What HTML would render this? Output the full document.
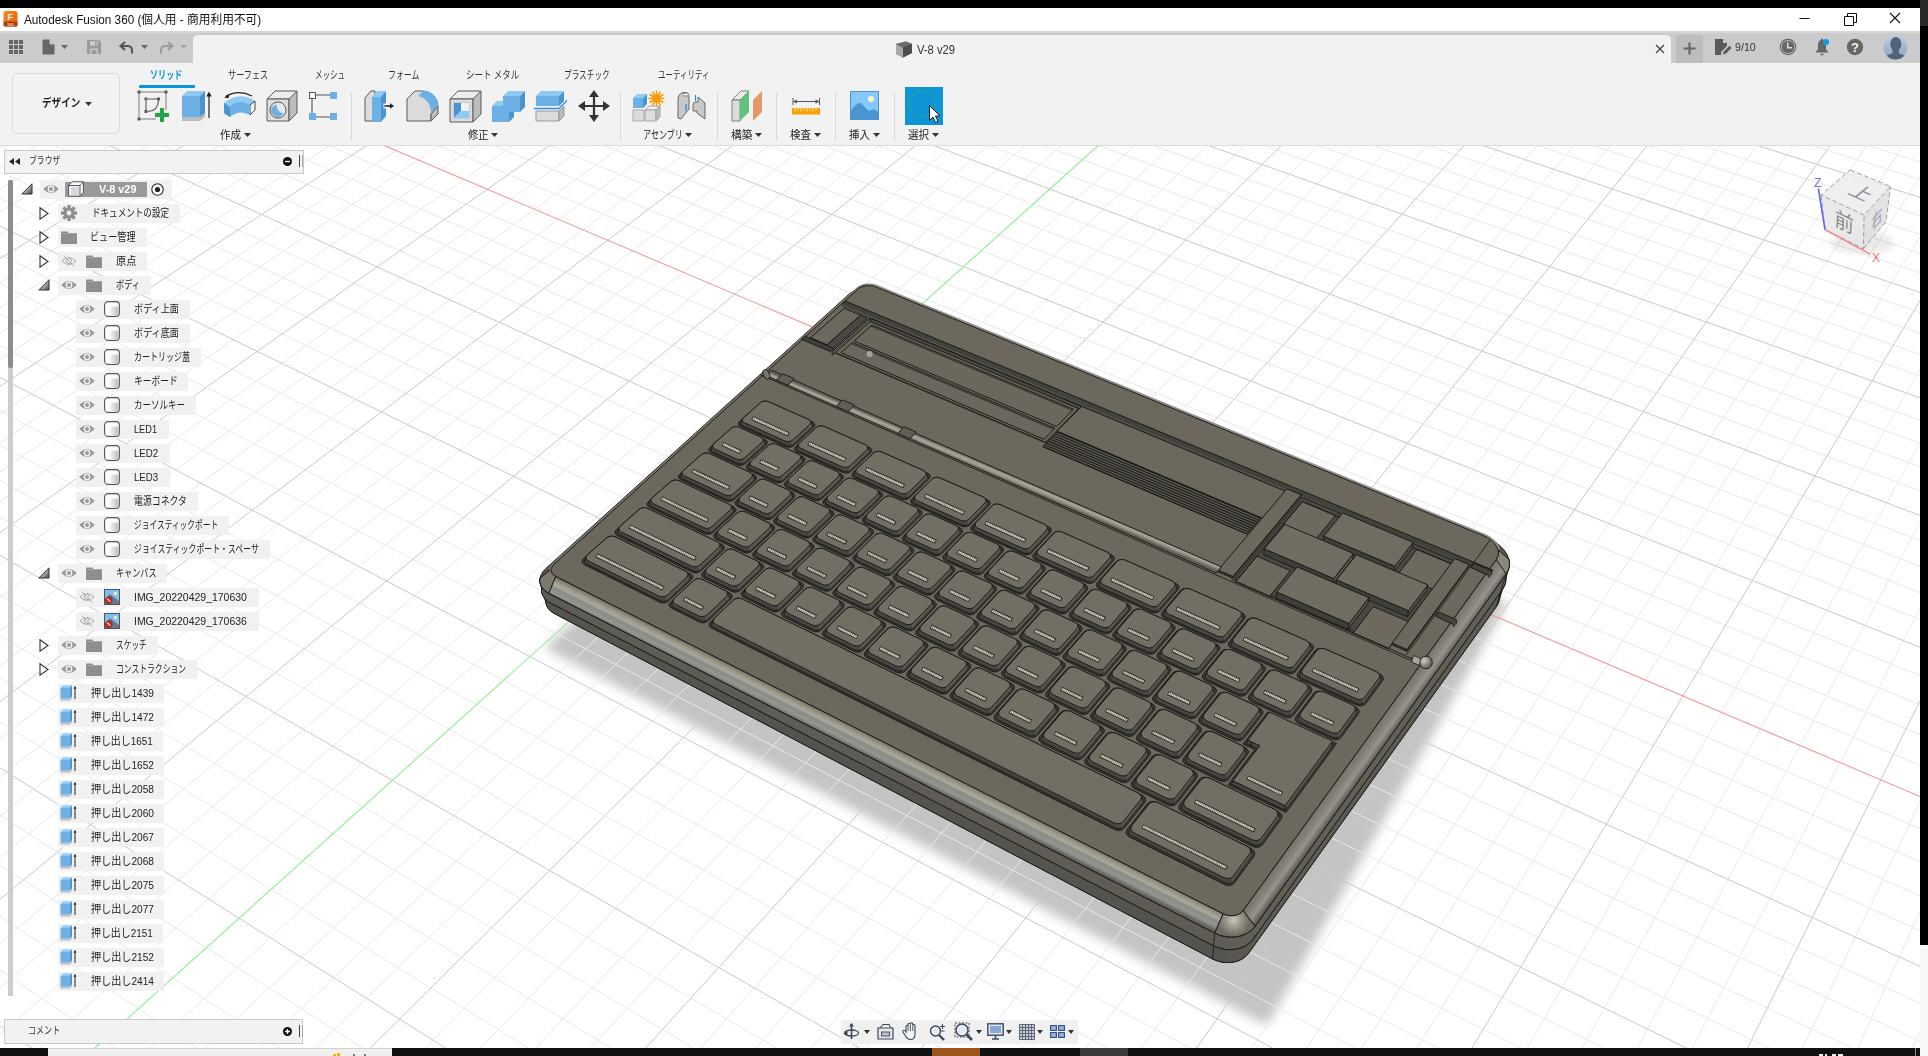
<!DOCTYPE html><html lang="ja"><head><meta charset="utf-8"><title>Autodesk Fusion 360</title><style>
html,body{margin:0;padding:0;background:#000;}
body{width:1928px;height:1056px;overflow:hidden;position:relative;font-family:"Liberation Sans","Noto Sans CJK JP",sans-serif;}
#app{position:absolute;left:0;top:0;width:1928px;height:1056px;overflow:hidden;background:#000;}
#canvas{position:absolute;left:0;top:0;}
.a{position:absolute;display:block;overflow:visible}
.t{position:absolute;white-space:nowrap;transform-origin:0 50%;display:block}
.titlebar,.tabbar,.toolbar,.browser{position:absolute;left:0;top:0;width:0;height:0}
.titlebar-bg{position:absolute;left:0;top:8px;width:1920px;height:23px;background:#fff;}
.titlebar .a,.titlebar .t,.tabbar .a,.tabbar .t,.toolbar .a,.toolbar .t{margin-top:0}
.tabbar-bg{position:absolute;left:0;top:31px;width:1920px;height:32px;background:#cbcbcb;}
.tabbar-hl{position:absolute;left:0;top:31px;width:1920px;height:2px;background:#d6d6d6}
.doctab{position:absolute;left:193px;top:35px;width:1478px;height:28px;background:#f2f2f2;border-radius:5px 5px 0 0}
.plusbtn{position:absolute;left:1676px;top:35px;width:27px;height:28px;background:#bdbdbd;border-radius:3px 3px 0 0}
.toolbar-bg{position:absolute;left:0;top:63px;width:1920px;height:81.5px;background:#f2f2f2;border-bottom:1px solid #dcdcdc}
.wsbtn{position:absolute;left:12px;top:73px;width:108px;height:61px;border:1px solid #dadada;border-radius:5px;background:#f2f2f2;box-sizing:border-box}
.tabul{position:absolute;left:139px;top:84.5px;width:55.5px;height:3px;background:#0696d7;border-radius:1px}
.sep{position:absolute;top:93px;width:1px;height:48px;background:#d8d8d8}
.brhead{position:absolute;left:4px;top:149.5px;width:299.5px;height:24px;background:#f2f2f2;border:1px solid #c9c9c9;box-sizing:border-box}
.cmt{position:absolute;left:4px;top:1019px;width:299px;height:24.5px;background:#f2f2f2;border:1px solid #c9c9c9;box-sizing:border-box}
.grip{position:absolute;width:4px;height:12px;border-left:1.3px solid #444;border-right:1px solid #aaa;box-sizing:border-box}
.sbtrack{position:absolute;left:8px;top:180px;width:5px;height:816px;background:#cdcdcd}
.sbthumb{position:absolute;left:8px;top:180px;width:5px;height:188px;background:#8c8c8c;border-radius:2px}
.rowbg{position:absolute;height:19px;background:rgba(240,240,240,0.93)}
.rootsel{position:absolute;left:65px;top:181.5px;width:82px;height:15.5px;background:#9a9a9a}
.navbar{position:absolute;left:841px;top:1020px;width:236.5px;height:23.5px;background:#f0f0f0}
.topstrip{position:absolute;left:0;top:0;width:1928px;height:8px;background:#000}
.rstrip{position:absolute;left:1920px;top:0;width:8px;height:1056px;background:#000}
.rstrip2{position:absolute;left:1920px;top:0;width:8px;height:26px;background:#282828}
.rstrip3{position:absolute;left:1920px;top:945px;width:8px;height:111px;background:#f7f7f7}
.tbsep{position:absolute;left:1915px;top:0;width:1px;height:8px;background:#8a8a8a}
.tbm{position:absolute;height:2px;top:6px}
.taskbar{position:absolute;left:0;top:1048px;width:1920px;height:8px;background:#111}
.tb1{position:absolute;left:48px;top:0;width:344px;height:8px;background:#f0f0f0;border-top:1px solid #d0d0d0;box-sizing:border-box}
.tb2{position:absolute;left:932px;top:0;width:48px;height:8px;background:#9c561c}
.tb3{position:absolute;left:1080px;top:0;width:48px;height:8px;background:#3b3b3b}
</style></head><body><div id="app"><svg id="canvas" width="1928" height="1056" viewBox="0 0 1928 1056"><rect x="0" y="63" width="1920" height="985" fill="#fff"/>
<defs><filter id="blur" x="-10%" y="-10%" width="120%" height="120%"><feGaussianBlur stdDeviation="5.5"/></filter><filter id="blur2" x="-30%" y="-30%" width="160%" height="160%"><feGaussianBlur stdDeviation="3"/></filter><linearGradient id="gfront" gradientUnits="userSpaceOnUse" x1="884.9" y1="742.7" x2="876.1" y2="760.2"><stop offset="0" stop-color="#757167"/><stop offset="0.2" stop-color="#9a9588"/><stop offset="0.4" stop-color="#aca89b"/><stop offset="0.52" stop-color="#8a8a86"/><stop offset="0.78" stop-color="#959591"/><stop offset="1" stop-color="#63615a"/></linearGradient><linearGradient id="gright" gradientUnits="userSpaceOnUse" x1="1374.2" y1="728.8" x2="1388.9" y2="739.4"><stop offset="0" stop-color="#76726a"/><stop offset="0.45" stop-color="#8a877d"/><stop offset="0.62" stop-color="#96948c"/><stop offset="1" stop-color="#5a5851"/></linearGradient><linearGradient id="gb2" gradientUnits="userSpaceOnUse" x1="533.0" y1="605.1" x2="1516.7" y2="605.1"><stop offset="0" stop-color="#5e5c55"/><stop offset="0.696539362240714" stop-color="#5e5c55"/><stop offset="0.736539362240714" stop-color="#625f57"/><stop offset="1" stop-color="#625f57"/></linearGradient><linearGradient id="gb3" gradientUnits="userSpaceOnUse" x1="533.0" y1="605.1" x2="1516.7" y2="605.1"><stop offset="0" stop-color="#55534d"/><stop offset="0.696539362240714" stop-color="#55534d"/><stop offset="0.736539362240714" stop-color="#5e5b54"/><stop offset="1" stop-color="#5e5b54"/></linearGradient><linearGradient id="gridge" gradientUnits="userSpaceOnUse" x1="1004.7" y1="472.2" x2="1001.8" y2="479.0"><stop offset="0" stop-color="#67635a"/><stop offset="0.35" stop-color="#a9a598"/><stop offset="0.6" stop-color="#9a968a"/><stop offset="1" stop-color="#625f56"/></linearGradient><radialGradient id="gcorner" gradientUnits="userSpaceOnUse" cx="1233.7" cy="920.0" r="16"><stop offset="0" stop-color="#c9c5b8"/><stop offset="0.5" stop-color="#99958a"/><stop offset="1" stop-color="#6e6a61"/></radialGradient><radialGradient id="gball" gradientUnits="userSpaceOnUse" cx="1424.0" cy="660.5" r="8"><stop offset="0" stop-color="#d5d1c4"/><stop offset="0.6" stop-color="#8f8b80"/><stop offset="1" stop-color="#66635a"/></radialGradient><linearGradient id="bg1" x1="0" x2="1"><stop offset="0" stop-color="#fff"/><stop offset="1" stop-color="#b9bcc2"/></linearGradient><linearGradient id="tg" x1="0" y1="0" x2="1" y2="1"><stop offset="0.3" stop-color="#ddd"/><stop offset="1" stop-color="#444"/></linearGradient><clipPath id="topclip"><polygon points="1501.0,561.6 1503.0,557.9 1503.7,554.0 1503.3,549.9 1501.7,545.9 1499.0,542.0 1495.3,538.4 1490.8,535.3 1485.6,532.8 879.0,284.8 875.9,283.7 872.5,283.1 869.0,282.9 865.5,283.1 862.1,283.7 859.0,284.6 856.3,286.0 854.0,287.6 550.2,562.0 548.2,564.2 546.9,566.5 546.1,569.0 546.1,571.4 546.7,573.7 548.0,575.9 549.9,577.8 552.3,579.3 1220.3,917.8 1224.0,919.3 1228.0,920.2 1232.0,920.5 1236.0,920.2 1239.8,919.3 1243.2,917.7 1246.1,915.7 1248.4,913.2"/></clipPath></defs>
<polygon points="884.9,344.9 1500.5,604.2 1484.1,634.1 1265.3,1018.8 552.8,646.9" fill="#c4c4c4" stroke="#c4c4c4" stroke-width="10" stroke-linejoin="round" filter="url(#blur)"/>
<path d="M-0.0 65.0L3.6 63.0M0.0 84.5L38.5 63.0M0.0 104.5L73.4 63.0M0.0 124.9L108.3 63.0M0.0 167.3L178.0 63.0M0.0 189.3L212.9 63.0M0.0 211.8L247.8 63.0M0.0 234.9L282.7 63.0M0.0 282.8L352.5 63.0M0.0 307.7L387.4 63.0M0.0 333.2L422.3 63.0M0.0 359.4L457.2 63.0M0.0 414.0L527.0 63.0M0.0 442.4L561.9 63.0M0.0 471.7L596.8 63.0M0.0 501.7L631.7 63.0M0.0 564.5L701.5 63.0M0.0 597.2L736.4 63.0M0.0 631.0L771.3 63.0M0.0 665.8L806.2 63.0M0.0 738.7L876.0 63.0M0.0 776.9L910.9 63.0M0.0 816.4L945.8 63.0M0.0 857.1L980.7 63.0M0.0 942.9L1050.5 63.0M0.0 988.0L1085.4 63.0M-0.0 1034.7L1120.2 63.0M39.7 1048.0L1155.1 63.0M149.9 1048.0L1224.9 63.0M205.0 1048.0L1259.8 63.0M260.1 1048.0L1294.7 63.0M315.2 1048.0L1329.6 63.0M425.4 1048.0L1399.4 63.0M480.4 1048.0L1434.3 63.0M535.5 1048.0L1469.2 63.0M590.6 1048.0L1504.1 63.0M700.8 1048.0L1573.9 63.0M755.9 1048.0L1608.8 63.0M811.0 1048.0L1643.7 63.0M866.1 1048.0L1678.6 63.0M976.2 1048.0L1748.4 63.0M1031.3 1048.0L1783.3 63.0M1086.4 1048.0L1818.2 63.0M1141.5 1048.0L1853.1 63.0M1251.7 1048.0L1920.0 67.2M1306.8 1048.0L1920.0 120.1M1361.9 1048.0L1920.0 176.5M1416.9 1048.0L1920.0 236.5M1527.1 1048.0L1920.0 369.4M1582.2 1048.0L1920.0 443.1M1637.3 1048.0L1920.0 522.4M1692.4 1048.0L1920.0 608.1M1802.6 1048.0L1920.0 801.5M1857.7 1048.0L1920.0 911.2M1912.7 1048.0L1920.0 1031.3M0.0 969.9L114.6 1048.0M0.0 916.3L197.3 1048.0M0.0 864.8L280.0 1048.0M0.0 815.3L362.7 1048.0M0.0 722.1L528.2 1048.0M0.0 678.1L610.9 1048.0M0.0 635.7L693.6 1048.0M0.0 594.8L776.4 1048.0M0.0 517.3L941.8 1048.0M0.0 480.5L1024.5 1048.0M0.0 445.0L1107.2 1048.0M0.0 410.6L1190.0 1048.0M-0.0 345.1L1355.4 1048.0M0.0 314.0L1438.1 1048.0M0.0 283.7L1520.9 1048.0M0.0 254.5L1603.6 1048.0M0.0 198.5L1769.0 1048.0M-0.0 171.7L1851.8 1048.0M0.0 145.7L1920.0 1041.2M0.0 120.4L1920.0 1003.3M0.0 72.0L1920.0 930.6M32.3 63.0L1920.0 895.7M84.7 63.0L1920.0 861.7M137.1 63.0L1920.0 828.6M241.9 63.0L1920.0 765.1M294.3 63.0L1920.0 734.5M346.7 63.0L1920.0 704.7M399.2 63.0L1920.0 675.6M504.0 63.0L1920.0 619.6M556.4 63.0L1920.0 592.6M608.8 63.0L1920.0 566.2M661.2 63.0L1920.0 540.5M766.0 63.0L1920.0 490.7M818.4 63.0L1920.0 466.7M870.8 63.0L1920.0 443.2M923.2 63.0L1920.0 420.2M1028.0 63.0L1920.0 375.8M1080.4 63.0L1920.0 354.3M1132.8 63.0L1920.0 333.2M1185.2 63.0L1920.0 312.6M1290.0 63.0L1920.0 272.6M1342.4 63.0L1920.0 253.2M1394.8 63.0L1920.0 234.2M1447.2 63.0L1920.0 215.6M1552.0 63.0L1920.0 179.5M1604.4 63.0L1920.0 161.9M1656.8 63.0L1920.0 144.7M1709.2 63.0L1920.0 127.8M1814.0 63.0L1920.0 95.0M1866.4 63.0L1920.0 79.0M1918.8 63.0L1920.0 63.4" stroke="#e9e9e9" stroke-width="1" fill="none"/><path d="M0.0 145.9L143.1 63.0M0.0 258.5L317.6 63.0M0.0 386.4L492.1 63.0M0.0 532.6L666.6 63.0M0.0 701.7L841.1 63.0M0.0 899.3L1015.6 63.0M370.3 1048.0L1364.5 63.0M645.7 1048.0L1539.0 63.0M921.1 1048.0L1713.5 63.0M1196.6 1048.0L1888.0 63.0M1472.0 1048.0L1920.0 300.7M1747.5 1048.0L1920.0 700.8M0.0 1025.8L31.8 1048.0M0.0 767.8L445.5 1048.0M0.0 555.3L859.1 1048.0M0.0 377.3L1272.7 1048.0M0.0 226.0L1686.3 1048.0M0.0 95.9L1920.0 966.4M451.6 63.0L1920.0 647.3M713.6 63.0L1920.0 515.3M975.6 63.0L1920.0 397.8M1237.6 63.0L1920.0 292.4M1499.6 63.0L1920.0 197.4M1761.6 63.0L1920.0 111.2" stroke="#c9c9c9" stroke-width="1" fill="none"/><path d="M189.5 63.0L1920.0 796.4" stroke="#f59a9a" stroke-width="1.1" fill="none"/><path d="M94.8 1048.0L1190.0 63.0" stroke="#8df08d" stroke-width="1.1" fill="none"/>
<polygon points="1509.5,564.4 1508.5,569.3 1498.6,602.2 1496.4,606.5 1248.6,953.2 1245.7,956.4 1242.0,959.0 1237.7,961.0 1232.8,962.2 1227.7,962.6 1222.5,962.2 1217.4,960.9 1212.6,958.9 554.0,613.3 550.9,611.2 548.4,608.7 546.8,605.9 540.8,585.2 539.9,581.8 540.0,578.3 541.1,574.9 543.1,571.5 545.9,568.4 848.8,294.4 851.9,292.2 859.5,288.0 861.6,287.0 863.9,286.2 866.4,285.8 869.0,285.7 871.6,285.8 874.2,286.3 876.5,287.1 1483.4,535.7 1487.8,537.8 1493.3,540.9 1498.9,544.8 1503.5,549.3 1506.9,554.2 1508.9,559.3" fill="#57554e" stroke="#1d1c19" stroke-width="1" stroke-linejoin="round" />
<polygon points="546.0,599.5 545.9,600.2 545.9,602.8 546.5,605.2 547.6,607.6 549.3,609.8 551.4,611.7 554.0,613.3 1212.6,958.9 1216.4,960.6 1220.4,961.8 1224.6,962.4 1228.7,962.6 1232.8,962.2 1236.7,961.3 1240.4,959.9 1243.6,958.0 1246.4,955.8 1248.6,953.2 1496.4,606.5 1498.3,603.1 1499.3,599.5 1499.5,595.7 1499.0,592.9 1505.5,574.5 1506.0,577.6 1505.8,581.6 1504.7,585.5 1502.7,589.1 1253.2,939.1 1250.7,942.0 1247.6,944.5 1244.0,946.6 1240.0,948.2 1235.6,949.2 1231.1,949.6 1226.5,949.5 1221.9,948.7 1217.4,947.4 1213.2,945.6 550.5,603.0 547.6,601.2 545.3,599.1 543.5,596.7 542.2,594.2 541.6,591.4 541.6,588.6 541.7,587.9" fill="url(#gb3)" stroke="#1d1c19" stroke-width="1" stroke-linejoin="round" />
<polygon points="541.7,587.9 541.6,588.6 541.6,591.4 542.2,594.2 543.5,596.7 545.3,599.1 547.6,601.2 550.5,603.0 1213.2,945.6 1217.4,947.4 1221.9,948.7 1226.5,949.5 1231.1,949.6 1235.6,949.2 1240.0,948.2 1244.0,946.6 1247.6,944.5 1250.7,942.0 1253.2,939.1 1502.7,589.1 1504.7,585.5 1505.8,581.6 1506.0,577.6 1505.5,574.5 1508.9,559.3 1509.4,562.3 1509.3,566.4 1508.2,570.3 1506.1,573.9 1255.0,926.4 1252.5,929.4 1249.4,931.9 1245.7,934.0 1241.7,935.6 1237.3,936.6 1232.8,937.0 1228.1,936.9 1223.5,936.2 1219.0,934.9 1214.7,933.0 548.8,593.3 546.0,591.5 543.6,589.5 541.8,587.1 540.5,584.6 539.9,581.8 539.9,579.1 540.0,578.3" fill="url(#gb2)" stroke="#1d1c19" stroke-width="1" stroke-linejoin="round" />
<polygon points="540.0,578.3 539.9,579.1 539.9,581.8 540.5,584.6 541.8,587.1 543.6,589.5 546.0,591.5 548.8,593.3 1214.7,933.0 1219.0,934.9 1223.5,936.2 1228.1,936.9 1232.8,937.0 1237.3,936.6 1241.7,935.6 1245.7,934.0 1249.4,931.9 1252.5,929.4 1255.0,926.4 1506.1,573.9 1508.2,570.3 1509.3,566.4 1509.4,562.3 1508.9,559.3 1498.1,550.0 1498.4,552.0 1498.3,554.6 1497.6,557.2 1496.2,559.6 1243.1,910.5 1241.8,911.9 1240.3,913.2 1238.5,914.2 1236.5,915.0 1234.3,915.5 1232.1,915.7 1229.8,915.6 1227.5,915.3 1225.3,914.6 1223.2,913.7 555.7,576.3 554.2,575.4 553.1,574.4 552.2,573.2 551.6,572.0 551.2,570.7 551.2,569.3 551.3,568.9" fill="#8b877c" stroke="#1d1c19" stroke-width="1" stroke-linejoin="round" />
<polygon points="548.5,593.1 1214.7,933.0 1223.2,913.7 555.6,576.2" fill="url(#gfront)" stroke="#1d1c19" stroke-width="1"/>
<polygon points="1255.0,926.4 1506.1,573.9 1496.2,559.6 1243.1,910.5" fill="url(#gright)" stroke="#1d1c19" stroke-width="1"/>
<polygon points="1214.7,933.0 1220.1,935.3 1225.8,936.6 1231.6,937.1 1237.3,936.6 1242.7,935.2 1247.6,933.0 1251.8,930.0 1255.0,926.4 1243.1,910.5 1241.5,912.3 1239.4,913.7 1237.0,914.8 1234.3,915.5 1231.5,915.7 1228.7,915.5 1225.8,914.8 1223.2,913.7" fill="url(#gcorner)" stroke="#1d1c19" stroke-width="1"/>
<polyline points="1214.7,933.0 1212.6,958.9" fill="none" stroke="#1d1c19" stroke-width="0.9" stroke-linecap="round" stroke-linejoin="round" />
<polyline points="1506.1,573.9 1496.4,606.5" fill="none" stroke="#1d1c19" stroke-width="0.9" stroke-linecap="round" stroke-linejoin="round" />
<polygon points="540.0,578.3 539.9,581.8 541.3,586.3 544.3,590.2 548.8,593.3 555.7,576.3 553.4,574.7 551.9,572.8 551.2,570.7 551.3,568.9" fill="#7d796f" stroke="#1d1c19" stroke-width="1"/>
<polyline points="1497.5,548.1 1496.8,546.6 1494.6,543.3 1491.5,540.4 1487.8,537.8 1483.4,535.7 876.5,287.1 874.2,286.3 871.6,285.8 869.0,285.7 866.4,285.8" fill="none" stroke="#8f928f" stroke-width="4.6" stroke-linecap="round" stroke-linejoin="round" />
<polyline points="866.4,285.8 863.9,286.2 861.6,287.0 859.5,288.0 857.9,289.2 554.2,564.0 552.8,565.6 551.8,567.2 551.3,568.7" fill="none" stroke="#7b776d" stroke-width="4.0" stroke-linecap="round" stroke-linejoin="round" />
<polygon points="1496.2,559.6 1497.8,556.6 1498.5,553.3 1498.1,549.9 1496.8,546.6 1494.6,543.3 1491.5,540.4 1487.8,537.8 1483.4,535.7 876.5,287.1 874.2,286.3 871.6,285.8 869.0,285.7 866.4,285.8 863.9,286.2 861.6,287.0 859.5,288.0 857.9,289.2 554.2,564.0 552.8,565.6 551.8,567.2 551.3,568.9 551.2,570.7 551.7,572.3 552.6,573.8 553.9,575.2 555.7,576.3 1223.2,913.7 1225.8,914.8 1228.7,915.5 1231.5,915.7 1234.3,915.5 1237.0,914.8 1239.4,913.7 1241.5,912.3 1243.1,910.5" fill="#6c685d" stroke="#1d1c19" stroke-width="1" stroke-linejoin="round" /><g clip-path="url(#topclip)"><polygon points="845.6,301.2 1492.9,570.1 1489.2,575.2 841.0,305.2" fill="#42413c" stroke="#1d1c19" stroke-width="1" stroke-linejoin="round" />
<polyline points="841.4,304.8 1489.5,574.8" fill="none" stroke="#5d5b54" stroke-width="1.2" stroke-linecap="round" stroke-linejoin="round" />
<polygon points="810.4,337.7 827.0,344.8 827.0,344.8 810.4,337.7" fill="#474540" stroke="#1d1c19" stroke-width="1" stroke-linejoin="round" /><polygon points="860.6,315.2 827.0,344.8 827.0,344.8 860.6,315.2" fill="#5a5750" stroke="#1d1c19" stroke-width="1" stroke-linejoin="round" /><polygon points="844.1,308.4 860.6,315.2 827.0,344.8 810.4,337.7" fill="#6c685d" stroke="#1d1c19" stroke-width="1" stroke-linejoin="round" />
<polygon points="860.6,315.2 867.5,318.1 831.0,350.3 824.1,347.4" fill="#4a4843" stroke="#1d1c19" stroke-width="1" stroke-linejoin="round" />
<polygon points="805.2,336.2 833.9,348.5 830.4,351.6 801.6,339.3" fill="#42413c" stroke="#1d1c19" stroke-width="1" stroke-linejoin="round" />
<polygon points="870.0,318.1 1081.0,406.0 1045.2,442.6 832.1,351.6" fill="#696559" stroke="#1d1c19" stroke-width="1" stroke-linejoin="round" /><polygon points="870.0,318.1 1081.0,406.0 1080.9,409.5 870.2,321.5" fill="#4a4842" stroke="#1d1c19" stroke-width="1" stroke-linejoin="round" /><polygon points="870.0,318.1 832.1,351.6 832.3,355.1 870.2,321.5" fill="#5f5c54" stroke="#1d1c19" stroke-width="1" stroke-linejoin="round" />
<polygon points="872.1,325.0 1073.4,409.2 1056.5,426.5 854.2,341.0" fill="#6b675d" stroke="#1d1c19" stroke-width="1" stroke-linejoin="round" />
<polyline points="871.0,326.1 1072.4,410.3" fill="none" stroke="#1d1c19" stroke-width="0.8" stroke-linecap="round" stroke-linejoin="round" />
<polygon points="852.5,342.5 1054.8,428.2 1043.9,439.3 841.0,352.7" fill="#6b675d" stroke="#1d1c19" stroke-width="1" stroke-linejoin="round" />
<polyline points="851.3,343.6 1053.7,429.3" fill="none" stroke="#1d1c19" stroke-width="0.8" stroke-linecap="round" stroke-linejoin="round" />
<polyline points="836.9,353.3 1047.3,443.1" fill="none" stroke="#1d1c19" stroke-width="0.8" stroke-linecap="round" stroke-linejoin="round" />
<circle cx="869.6" cy="354.0" r="3.1" fill="#a3a29d"/>
<polygon points="1081.6,406.3 1285.2,491.1 1262.4,518.2 1057.2,431.2" fill="#6c685d" stroke="#1d1c19" stroke-width="1" stroke-linejoin="round" />
<polygon points="1057.6,431.7 1260.7,517.9 1247.1,534.0 1043.1,446.6" fill="#5f5c54" stroke="#1d1c19" stroke-width="1" stroke-linejoin="round" />
<polyline points="1057.3,432.0 1260.5,518.2" fill="none" stroke="#1d1c19" stroke-width="1.15" stroke-linecap="round" stroke-linejoin="round" />
<polyline points="1055.5,433.8 1258.8,520.2" fill="none" stroke="#1d1c19" stroke-width="1.15" stroke-linecap="round" stroke-linejoin="round" />
<polyline points="1053.8,435.7 1257.2,522.1" fill="none" stroke="#1d1c19" stroke-width="1.15" stroke-linecap="round" stroke-linejoin="round" />
<polyline points="1052.0,437.5 1255.5,524.1" fill="none" stroke="#1d1c19" stroke-width="1.15" stroke-linecap="round" stroke-linejoin="round" />
<polyline points="1050.2,439.3 1253.8,526.1" fill="none" stroke="#1d1c19" stroke-width="1.15" stroke-linecap="round" stroke-linejoin="round" />
<polyline points="1048.4,441.1 1252.2,528.1" fill="none" stroke="#1d1c19" stroke-width="1.15" stroke-linecap="round" stroke-linejoin="round" />
<polyline points="1046.6,443.0 1250.5,530.0" fill="none" stroke="#1d1c19" stroke-width="1.15" stroke-linecap="round" stroke-linejoin="round" />
<polyline points="1044.9,444.8 1248.8,532.0" fill="none" stroke="#1d1c19" stroke-width="1.15" stroke-linecap="round" stroke-linejoin="round" />
<polyline points="1043.1,446.6 1247.1,534.0" fill="none" stroke="#1d1c19" stroke-width="1.15" stroke-linecap="round" stroke-linejoin="round" />
<polygon points="1218.1,571.8 1232.7,578.2 1232.9,576.5 1218.2,570.1" fill="#474540" stroke="#1d1c19" stroke-width="1" stroke-linejoin="round" /><polygon points="1301.0,496.4 1232.7,578.2 1232.9,576.5 1301.2,494.7" fill="#4c4a44" stroke="#1d1c19" stroke-width="1" stroke-linejoin="round" /><polygon points="1286.9,488.8 1301.2,494.7 1232.9,576.5 1218.2,570.1" fill="#6c685d" stroke="#1d1c19" stroke-width="1" stroke-linejoin="round" />
<polygon points="1302.1,497.3 1453.4,560.3 1389.3,646.9 1234.1,578.9" fill="#4a4843" stroke="#1d1c19" stroke-width="1" stroke-linejoin="round" />
<polygon points="1302.3,501.6 1335.3,515.4 1315.7,539.6 1282.5,525.5" fill="#6d695f" stroke="#1d1c19" stroke-width="1" stroke-linejoin="round" />
<polygon points="1416.9,549.4 1451.4,563.8 1432.7,589.1 1397.9,574.4" fill="#6d695f" stroke="#1d1c19" stroke-width="1" stroke-linejoin="round" />
<polygon points="1256.9,556.2 1290.4,570.7 1269.5,596.5 1235.7,581.7" fill="#6d695f" stroke="#1d1c19" stroke-width="1" stroke-linejoin="round" />
<polygon points="1373.4,606.6 1408.6,621.7 1388.6,648.7 1353.2,633.2" fill="#6d695f" stroke="#1d1c19" stroke-width="1" stroke-linejoin="round" />
<polygon points="1302.3,501.6 1451.4,563.8 1388.6,648.7 1235.7,581.7" fill="none" stroke="#1d1c19" stroke-width="1" stroke-linejoin="round" />
<polygon points="1323.0,542.2 1393.8,572.2 1394.9,566.3 1323.8,536.2" fill="#3f3e39" stroke="#1d1c19" stroke-width="1" stroke-linejoin="round" /><polygon points="1412.1,548.3 1393.8,572.2 1394.9,566.3 1413.2,542.3" fill="#55534c" stroke="#1d1c19" stroke-width="1" stroke-linejoin="round" /><polygon points="1342.7,512.9 1413.2,542.3 1394.9,566.3 1323.8,536.2" fill="#706c62" stroke="#1d1c19" stroke-width="1" stroke-linejoin="round" />
<polygon points="1263.7,554.8 1332.7,584.6 1333.7,578.6 1264.4,548.9" fill="#3f3e39" stroke="#1d1c19" stroke-width="1" stroke-linejoin="round" /><polygon points="1352.6,559.4 1332.7,584.6 1333.7,578.6 1353.5,553.5" fill="#55534c" stroke="#1d1c19" stroke-width="1" stroke-linejoin="round" /><polygon points="1284.8,524.4 1353.5,553.5 1333.7,578.6 1264.4,548.9" fill="#706c62" stroke="#1d1c19" stroke-width="1" stroke-linejoin="round" />
<polygon points="1335.6,585.8 1407.4,616.8 1408.5,610.8 1336.5,579.9" fill="#3f3e39" stroke="#1d1c19" stroke-width="1" stroke-linejoin="round" /><polygon points="1426.6,590.9 1407.4,616.8 1408.5,610.8 1427.8,584.9" fill="#55534c" stroke="#1d1c19" stroke-width="1" stroke-linejoin="round" /><polygon points="1356.4,554.7 1427.8,584.9 1408.5,610.8 1336.5,579.9" fill="#706c62" stroke="#1d1c19" stroke-width="1" stroke-linejoin="round" />
<polygon points="1276.0,598.0 1348.1,629.6 1349.1,623.6 1276.8,592.0" fill="#3f3e39" stroke="#1d1c19" stroke-width="1" stroke-linejoin="round" /><polygon points="1367.9,603.7 1348.1,629.6 1349.1,623.6 1368.9,597.7" fill="#55534c" stroke="#1d1c19" stroke-width="1" stroke-linejoin="round" /><polygon points="1297.2,566.9 1368.9,597.7 1349.1,623.6 1276.8,592.0" fill="#706c62" stroke="#1d1c19" stroke-width="1" stroke-linejoin="round" />
<polygon points="1391.9,644.8 1406.8,651.3 1407.1,649.6 1392.2,643.1" fill="#474540" stroke="#1d1c19" stroke-width="1" stroke-linejoin="round" /><polygon points="1468.9,566.4 1406.8,651.3 1407.1,649.6 1469.3,564.7" fill="#4c4a44" stroke="#1d1c19" stroke-width="1" stroke-linejoin="round" /><polygon points="1454.7,558.6 1469.3,564.7 1407.1,649.6 1392.2,643.1" fill="#6c685d" stroke="#1d1c19" stroke-width="1" stroke-linejoin="round" />
<polygon points="1473.9,563.4 1491.5,570.7 1492.2,583.3 1488.2,575.3 1471.1,567.3" fill="#45443f" stroke="#1d1c19" stroke-width="1" stroke-linejoin="round" />
<polygon points="1438.5,612.0 1456.3,619.6 1456.9,632.5 1452.9,624.4 1435.5,616.0" fill="#45443f" stroke="#1d1c19" stroke-width="1" stroke-linejoin="round" />
<polyline points="1489.9,540.3 1406.5,654.4" fill="none" stroke="#1d1c19" stroke-width="0.9" stroke-linecap="round" stroke-linejoin="round" />
<polygon points="771.3,370.2 1221.2,566.8 1216.5,573.2 766.1,375.6" fill="url(#gridge)" stroke="#1d1c19" stroke-width="1"/>
<polygon points="782.6,373.7 794.2,378.7 787.8,385.3 776.2,380.2" fill="#615e56" stroke="#1d1c19" stroke-width="1" stroke-linejoin="round" />
<polygon points="842.5,399.8 854.4,405.0 848.1,411.7 836.2,406.5" fill="#615e56" stroke="#1d1c19" stroke-width="1" stroke-linejoin="round" />
<polygon points="904.0,426.7 916.2,432.0 910.0,438.9 897.7,433.5" fill="#615e56" stroke="#1d1c19" stroke-width="1" stroke-linejoin="round" />
<polyline points="1231.6,579.5 1413.0,659.1" fill="none" stroke="#1d1c19" stroke-width="1" stroke-linecap="round" stroke-linejoin="round" />
<polyline points="760.6,374.9 1411.7,660.8" fill="none" stroke="#1d1c19" stroke-width="0.9" stroke-linecap="round" stroke-linejoin="round" />
<ellipse cx="766.4" cy="374.4" rx="3" ry="5" fill="#7a766c" stroke="#1d1c19" stroke-width="0.9" transform="rotate(-25 766.4 374.4)"/>
<polygon points="759.6,400.2 760.9,399.4 762.4,398.8 764.1,398.6 765.8,398.7 767.3,399.2 1385.2,673.4 1386.8,674.3 1388.0,675.5 1388.6,676.9 1388.7,678.3 1388.1,679.6 1236.2,887.4 1234.9,888.6 1233.2,889.5 1231.1,889.8 1229.0,889.6 1227.0,888.9 579.2,564.8 578.0,564.0 577.2,562.8 577.1,561.6 577.5,560.3 578.5,559.2" fill="#6c685e" stroke="none" stroke-width="1" stroke-linejoin="round" />
<polygon points="760.4,403.2 762.6,402.0 765.4,401.6 768.0,402.2 812.8,422.1 814.5,423.5 815.0,425.3 813.9,427.1 793.5,445.7 791.2,447.0 788.3,447.3 785.6,446.7 740.7,426.4 738.9,425.0 738.5,423.2 739.6,421.4" fill="#3d3c37" stroke="#1d1c19" stroke-width="1" stroke-linejoin="round" />
<polygon points="812.7,425.7 811.9,426.9 792.2,444.9 790.5,445.8 788.4,446.1 786.5,445.6 742.4,425.7 741.1,424.7 740.9,423.4 742.3,419.5 743.4,417.8 760.6,402.6 762.8,401.4 765.7,401.1 768.3,401.6 808.6,419.5 810.4,420.9 812.4,424.3" fill="#474540" stroke="#1d1c19" stroke-width="1" stroke-linejoin="round" />
<polygon points="810.8,423.6 812.1,426.8 791.5,445.5 791.1,441.5" fill="#5a5750" stroke="none" stroke-width="1" stroke-linejoin="round" />
<polygon points="760.6,402.6 762.8,401.4 765.7,401.1 768.3,401.6 808.6,419.5 810.4,420.9 810.8,422.7 809.8,424.5 792.7,440.0 790.5,441.2 787.6,441.6 784.9,441.0 744.4,422.7 742.6,421.3 742.3,419.5 743.4,417.8" fill="#726e64" stroke="#1d1c19" stroke-width="1" stroke-linejoin="round" />
<path d="M752.2 418.0L788.7 434.4" stroke="#2b2a25" stroke-width="4.4"/>
<path d="M753.0 418.3L787.9 434.1" stroke="#d3cfc3" stroke-width="2.6" stroke-dasharray="1.4,0.35"/>
<polygon points="816.0,428.0 818.3,426.8 821.1,426.4 823.8,427.0 869.6,447.4 871.4,448.8 871.9,450.6 870.9,452.4 850.7,471.5 848.5,472.8 845.6,473.2 842.8,472.6 796.7,451.7 794.9,450.3 794.5,448.5 795.6,446.7" fill="#3d3c37" stroke="#1d1c19" stroke-width="1" stroke-linejoin="round" />
<polygon points="869.6,451.0 868.9,452.3 849.4,470.7 847.8,471.6 845.6,471.9 843.6,471.5 798.5,451.1 797.2,450.0 796.9,448.7 798.3,444.8 799.4,443.0 816.4,427.5 818.7,426.2 821.5,425.9 824.2,426.5 865.5,444.8 867.4,446.2 869.3,449.6" fill="#474540" stroke="#1d1c19" stroke-width="1" stroke-linejoin="round" />
<polygon points="867.8,449.0 869.0,452.2 848.7,471.4 848.4,467.3" fill="#5a5750" stroke="none" stroke-width="1" stroke-linejoin="round" />
<polygon points="816.4,427.5 818.7,426.2 821.5,425.9 824.2,426.5 865.5,444.8 867.4,446.2 867.8,448.1 866.8,449.9 850.0,465.8 847.7,467.0 844.8,467.4 842.1,466.8 800.5,448.1 798.7,446.6 798.3,444.8 799.4,443.0" fill="#726e64" stroke="#1d1c19" stroke-width="1" stroke-linejoin="round" />
<path d="M808.3 443.2L845.7 460.0" stroke="#2b2a25" stroke-width="4.4"/>
<path d="M809.1 443.5L844.9 459.7" stroke="#d3cfc3" stroke-width="2.6" stroke-dasharray="1.4,0.35"/>
<polygon points="873.1,453.4 875.3,452.1 878.2,451.8 880.9,452.4 927.9,473.2 929.8,474.7 930.3,476.6 929.3,478.4 909.4,498.0 907.2,499.4 904.3,499.7 901.5,499.1 854.2,477.7 852.3,476.3 851.9,474.4 852.9,472.5" fill="#3d3c37" stroke="#1d1c19" stroke-width="1" stroke-linejoin="round" />
<polygon points="928.0,477.0 927.3,478.3 908.1,497.2 906.4,498.1 904.3,498.4 902.2,497.9 855.9,477.0 854.6,476.0 854.2,474.6 855.8,470.7 856.8,468.8 873.6,452.9 875.8,451.7 878.7,451.3 881.4,451.9 923.8,470.7 925.7,472.2 927.6,475.6" fill="#474540" stroke="#1d1c19" stroke-width="1" stroke-linejoin="round" />
<polygon points="926.3,474.9 927.4,478.2 907.4,497.8 907.1,493.7" fill="#5a5750" stroke="none" stroke-width="1" stroke-linejoin="round" />
<polygon points="873.6,452.9 875.8,451.7 878.7,451.3 881.4,451.9 923.8,470.7 925.7,472.2 926.2,474.1 925.3,475.9 908.7,492.2 906.4,493.5 903.5,493.9 900.7,493.3 858.1,474.0 856.3,472.6 855.8,470.7 856.8,468.8" fill="#726e64" stroke="#1d1c19" stroke-width="1" stroke-linejoin="round" />
<path d="M865.8 469.0L904.2 486.3" stroke="#2b2a25" stroke-width="4.4"/>
<path d="M866.6 469.3L903.4 486.0" stroke="#d3cfc3" stroke-width="2.6" stroke-dasharray="1.4,0.35"/>
<polygon points="931.6,479.4 933.8,478.1 936.7,477.8 939.4,478.4 987.6,499.8 989.5,501.3 990.2,503.2 989.2,505.1 969.6,525.2 967.4,526.5 964.4,526.9 961.6,526.3 913.1,504.4 911.2,502.9 910.7,500.9 911.6,499.0" fill="#3d3c37" stroke="#1d1c19" stroke-width="1" stroke-linejoin="round" />
<polygon points="987.8,503.6 987.1,505.0 968.2,524.3 966.5,525.3 964.4,525.6 962.3,525.1 914.9,503.7 913.4,502.6 913.0,501.1 914.7,497.2 915.7,495.3 932.2,479.0 934.5,477.7 937.3,477.3 940.1,478.0 983.5,497.2 985.5,498.7 987.3,502.1" fill="#474540" stroke="#1d1c19" stroke-width="1" stroke-linejoin="round" />
<polygon points="986.2,501.6 987.2,504.8 967.5,525.0 967.3,520.8" fill="#5a5750" stroke="none" stroke-width="1" stroke-linejoin="round" />
<polygon points="932.2,479.0 934.5,477.7 937.3,477.3 940.1,478.0 983.5,497.2 985.5,498.7 986.1,500.7 985.2,502.6 968.9,519.3 966.6,520.6 963.7,521.0 960.8,520.4 917.1,500.7 915.2,499.2 914.7,497.2 915.7,495.3" fill="#726e64" stroke="#1d1c19" stroke-width="1" stroke-linejoin="round" />
<path d="M924.8 495.5L964.2 513.2" stroke="#2b2a25" stroke-width="4.4"/>
<path d="M925.6 495.8L963.4 512.9" stroke="#d3cfc3" stroke-width="2.6" stroke-dasharray="1.4,0.35"/>
<polygon points="991.5,506.1 993.7,504.8 996.6,504.4 999.4,505.0 1048.8,527.0 1050.8,528.5 1051.5,530.5 1050.6,532.4 1031.4,553.1 1029.1,554.4 1026.1,554.9 1023.2,554.2 973.5,531.7 971.5,530.2 970.9,528.2 971.9,526.2" fill="#3d3c37" stroke="#1d1c19" stroke-width="1" stroke-linejoin="round" />
<polygon points="1049.1,530.9 1048.5,532.3 1029.9,552.1 1028.2,553.1 1026.1,553.4 1023.9,553.0 975.3,531.0 973.8,529.8 973.4,528.4 975.1,524.4 976.0,522.5 992.3,505.8 994.5,504.4 997.5,504.0 1000.3,504.7 1044.8,524.5 1046.9,526.0 1048.6,529.4" fill="#474540" stroke="#1d1c19" stroke-width="1" stroke-linejoin="round" />
<polygon points="1047.6,528.9 1048.6,532.2 1029.2,552.8 1029.1,548.7" fill="#5a5750" stroke="none" stroke-width="1" stroke-linejoin="round" />
<polygon points="992.3,505.8 994.5,504.4 997.5,504.0 1000.3,504.7 1044.8,524.5 1046.9,526.0 1047.5,528.0 1046.7,529.9 1030.6,547.1 1028.3,548.4 1025.4,548.8 1022.5,548.2 977.7,528.0 975.7,526.4 975.1,524.4 976.0,522.5" fill="#726e64" stroke="#1d1c19" stroke-width="1" stroke-linejoin="round" />
<path d="M985.3 522.7L1025.7 540.8" stroke="#2b2a25" stroke-width="4.4"/>
<path d="M986.1 523.0L1024.9 540.5" stroke="#d3cfc3" stroke-width="2.6" stroke-dasharray="1.4,0.35"/>
<polygon points="1053.0,533.5 1055.2,532.1 1058.1,531.7 1061.0,532.4 1111.6,554.9 1113.7,556.5 1114.5,558.5 1113.6,560.5 1094.7,581.7 1092.5,583.1 1089.5,583.5 1086.5,582.8 1035.5,559.7 1033.4,558.2 1032.8,556.1 1033.7,554.1" fill="#3d3c37" stroke="#1d1c19" stroke-width="1" stroke-linejoin="round" />
<polygon points="1112.0,558.9 1111.4,560.3 1093.2,580.7 1091.5,581.7 1089.3,582.0 1087.2,581.5 1037.2,559.0 1035.7,557.8 1035.2,556.3 1035.9,554.8 1037.9,550.4 1054.0,533.2 1056.2,531.8 1059.1,531.4 1062.0,532.1 1107.7,552.4 1109.8,553.9 1111.5,557.4" fill="#474540" stroke="#1d1c19" stroke-width="1" stroke-linejoin="round" />
<polygon points="1110.6,557.0 1111.5,560.2 1092.5,581.4 1092.4,577.2" fill="#5a5750" stroke="none" stroke-width="1" stroke-linejoin="round" />
<polygon points="1054.0,533.2 1056.2,531.8 1059.1,531.4 1062.0,532.1 1107.7,552.4 1109.8,553.9 1110.5,556.0 1109.7,558.0 1093.9,575.6 1091.7,577.0 1088.7,577.4 1085.7,576.7 1039.8,556.0 1037.7,554.4 1037.0,552.3 1037.9,550.4" fill="#726e64" stroke="#1d1c19" stroke-width="1" stroke-linejoin="round" />
<path d="M1047.3 550.6L1088.7 569.2" stroke="#2b2a25" stroke-width="4.4"/>
<path d="M1048.1 550.9L1087.9 568.9" stroke="#d3cfc3" stroke-width="2.6" stroke-dasharray="1.4,0.35"/>
<polygon points="1116.0,561.6 1118.2,560.2 1121.2,559.8 1124.1,560.4 1176.1,583.5 1178.3,585.1 1179.1,587.2 1178.3,589.3 1159.7,611.0 1157.5,612.4 1154.5,612.9 1151.5,612.2 1099.1,588.5 1097.0,586.9 1096.2,584.8 1097.1,582.7" fill="#3d3c37" stroke="#1d1c19" stroke-width="1" stroke-linejoin="round" />
<polygon points="1176.6,587.6 1176.0,589.1 1158.1,610.0 1156.5,611.1 1154.3,611.4 1152.1,610.9 1100.8,587.7 1099.2,586.5 1098.7,585.0 1099.3,583.5 1101.5,579.0 1117.2,561.3 1119.4,559.9 1122.4,559.5 1125.3,560.2 1172.2,581.0 1174.4,582.6 1176.0,586.1" fill="#474540" stroke="#1d1c19" stroke-width="1" stroke-linejoin="round" />
<polygon points="1175.3,585.7 1176.1,589.0 1157.5,610.8 1157.5,606.5" fill="#5a5750" stroke="none" stroke-width="1" stroke-linejoin="round" />
<polygon points="1117.2,561.3 1119.4,559.9 1122.4,559.5 1125.3,560.2 1172.2,581.0 1174.4,582.6 1175.2,584.7 1174.4,586.8 1158.9,604.8 1156.7,606.3 1153.7,606.7 1150.7,606.0 1103.5,584.7 1101.3,583.1 1100.6,581.0 1101.5,579.0" fill="#726e64" stroke="#1d1c19" stroke-width="1" stroke-linejoin="round" />
<path d="M1111.0 579.2L1153.5 598.3" stroke="#2b2a25" stroke-width="4.4"/>
<path d="M1111.8 579.5L1152.7 598.0" stroke="#d3cfc3" stroke-width="2.6" stroke-dasharray="1.4,0.35"/>
<polygon points="1180.7,590.4 1182.9,588.9 1185.9,588.5 1188.9,589.2 1242.2,612.9 1244.5,614.6 1245.4,616.7 1244.6,618.8 1226.5,641.1 1224.3,642.6 1221.2,643.1 1218.2,642.3 1164.4,618.0 1162.2,616.4 1161.4,614.2 1162.2,612.1" fill="#3d3c37" stroke="#1d1c19" stroke-width="1" stroke-linejoin="round" />
<polygon points="1242.8,617.1 1242.3,618.6 1224.8,640.1 1223.2,641.2 1221.0,641.5 1218.7,641.0 1166.1,617.2 1164.5,616.0 1163.9,614.4 1164.4,612.9 1166.7,608.3 1182.1,590.2 1184.3,588.8 1187.3,588.4 1190.3,589.1 1238.4,610.4 1240.7,612.1 1242.2,615.5" fill="#474540" stroke="#1d1c19" stroke-width="1" stroke-linejoin="round" />
<polygon points="1241.7,615.3 1242.4,618.5 1224.2,640.9 1224.3,636.6" fill="#5a5750" stroke="none" stroke-width="1" stroke-linejoin="round" />
<polygon points="1182.1,590.2 1184.3,588.8 1187.3,588.4 1190.3,589.1 1238.4,610.4 1240.7,612.1 1241.6,614.3 1240.8,616.4 1225.7,634.9 1223.5,636.4 1220.4,636.8 1217.4,636.1 1168.9,614.2 1166.7,612.6 1165.9,610.4 1166.7,608.3" fill="#726e64" stroke="#1d1c19" stroke-width="1" stroke-linejoin="round" />
<path d="M1176.3 608.6L1220.0 628.2" stroke="#2b2a25" stroke-width="4.4"/>
<path d="M1177.1 608.9L1219.2 627.9" stroke="#d3cfc3" stroke-width="2.6" stroke-dasharray="1.4,0.35"/>
<polygon points="1247.2,619.9 1249.3,618.5 1252.3,618.0 1255.4,618.8 1310.1,643.1 1312.5,644.8 1313.5,647.0 1312.8,649.2 1295.1,672.1 1292.9,673.6 1289.8,674.1 1286.7,673.3 1231.4,648.3 1229.1,646.6 1228.3,644.4 1229.0,642.3" fill="#3d3c37" stroke="#1d1c19" stroke-width="1" stroke-linejoin="round" />
<polygon points="1310.9,647.4 1310.4,649.0 1293.3,671.0 1291.7,672.1 1289.5,672.5 1287.2,671.9 1233.1,647.5 1231.4,646.2 1230.8,644.6 1231.3,643.0 1233.6,638.5 1248.7,619.9 1250.9,618.4 1253.9,618.0 1257.0,618.7 1306.4,640.6 1308.7,642.3 1309.7,644.6" fill="#474540" stroke="#1d1c19" stroke-width="1" stroke-linejoin="round" />
<polygon points="1309.9,645.6 1310.5,648.8 1292.7,671.8 1292.9,667.5" fill="#5a5750" stroke="none" stroke-width="1" stroke-linejoin="round" />
<polygon points="1248.7,619.9 1250.9,618.4 1253.9,618.0 1257.0,618.7 1306.4,640.6 1308.7,642.3 1309.7,644.6 1309.0,646.7 1294.3,665.7 1292.1,667.3 1289.0,667.7 1285.8,667.0 1236.1,644.5 1233.8,642.8 1232.9,640.6 1233.6,638.5" fill="#726e64" stroke="#1d1c19" stroke-width="1" stroke-linejoin="round" />
<path d="M1243.4 638.7L1288.3 658.8" stroke="#2b2a25" stroke-width="4.4"/>
<path d="M1244.2 639.0L1287.5 658.5" stroke="#d3cfc3" stroke-width="2.6" stroke-dasharray="1.4,0.35"/>
<polygon points="1315.4,650.3 1317.5,648.8 1320.6,648.4 1323.7,649.1 1379.9,674.1 1382.4,675.8 1383.4,678.1 1382.8,680.3 1365.5,703.9 1363.4,705.4 1360.3,705.9 1357.1,705.2 1300.3,679.5 1297.9,677.7 1297.0,675.4 1297.7,673.2" fill="#3d3c37" stroke="#1d1c19" stroke-width="1" stroke-linejoin="round" />
<polygon points="1380.8,678.5 1380.3,680.1 1363.7,702.8 1362.1,703.9 1359.9,704.3 1357.5,703.7 1301.9,678.6 1300.2,677.3 1299.5,675.6 1300.0,674.0 1302.4,669.4 1317.1,650.3 1319.3,648.8 1322.3,648.4 1325.5,649.1 1376.2,671.6 1378.7,673.4 1379.7,675.7" fill="#474540" stroke="#1d1c19" stroke-width="1" stroke-linejoin="round" />
<polygon points="1379.9,676.7 1380.4,680.0 1363.1,703.6 1363.4,699.3" fill="#5a5750" stroke="none" stroke-width="1" stroke-linejoin="round" />
<polygon points="1317.1,650.3 1319.3,648.8 1322.3,648.4 1325.5,649.1 1376.2,671.6 1378.7,673.4 1379.7,675.7 1379.1,677.9 1364.7,697.4 1362.5,699.0 1359.4,699.5 1356.2,698.7 1305.1,675.7 1302.7,673.9 1301.7,671.6 1302.4,669.4" fill="#726e64" stroke="#1d1c19" stroke-width="1" stroke-linejoin="round" />
<path d="M1312.4 669.7L1358.4 690.4" stroke="#2b2a25" stroke-width="4.4"/>
<path d="M1313.2 670.0L1357.6 690.1" stroke="#d3cfc3" stroke-width="2.6" stroke-dasharray="1.4,0.35"/>
<polygon points="731.2,428.8 733.5,427.6 736.4,427.2 739.0,427.8 765.2,439.7 767.0,441.1 767.4,443.0 766.3,444.8 745.2,463.7 742.9,465.0 740.0,465.4 737.3,464.8 710.9,452.6 709.2,451.2 708.8,449.3 710.0,447.5" fill="#3d3c37" stroke="#1d1c19" stroke-width="1" stroke-linejoin="round" />
<polygon points="765.1,443.3 764.3,444.6 744.0,462.9 742.3,463.8 740.2,464.1 738.2,463.7 712.7,451.9 711.5,450.9 711.2,449.5 712.6,445.6 713.7,443.8 731.4,428.3 733.7,427.1 736.5,426.7 739.2,427.3 761.0,437.2 762.8,438.6 764.8,442.0" fill="#474540" stroke="#1d1c19" stroke-width="1" stroke-linejoin="round" />
<polygon points="763.1,441.3 764.4,444.5 743.3,463.6 742.9,459.5" fill="#5a5750" stroke="none" stroke-width="1" stroke-linejoin="round" />
<polygon points="731.4,428.3 733.7,427.1 736.5,426.7 739.2,427.3 761.0,437.2 762.8,438.6 763.2,440.4 762.1,442.2 744.5,458.0 742.2,459.2 739.3,459.6 736.6,459.0 714.7,448.9 712.9,447.5 712.6,445.6 713.7,443.8" fill="#726e64" stroke="#1d1c19" stroke-width="1" stroke-linejoin="round" />
<path d="M722.6 444.0L740.6 452.3" stroke="#2b2a25" stroke-width="4.4"/>
<path d="M723.4 444.3L739.8 452.0" stroke="#d3cfc3" stroke-width="2.6" stroke-dasharray="1.4,0.35"/>
<polygon points="768.4,445.7 770.7,444.5 773.6,444.1 776.3,444.7 802.9,456.8 804.7,458.2 805.2,460.1 804.1,461.9 783.2,481.2 780.9,482.5 778.0,482.9 775.2,482.2 748.4,469.9 746.6,468.4 746.2,466.5 747.3,464.7" fill="#3d3c37" stroke="#1d1c19" stroke-width="1" stroke-linejoin="round" />
<polygon points="802.8,460.4 802.1,461.8 781.9,480.3 780.2,481.3 778.1,481.6 776.1,481.1 750.2,469.2 748.9,468.1 748.6,466.7 750.0,462.8 751.1,461.0 768.7,445.2 771.0,444.0 773.8,443.6 776.5,444.2 798.7,454.2 800.5,455.7 802.5,459.1" fill="#474540" stroke="#1d1c19" stroke-width="1" stroke-linejoin="round" />
<polygon points="800.9,458.4 802.2,461.7 781.2,481.0 780.8,476.9" fill="#5a5750" stroke="none" stroke-width="1" stroke-linejoin="round" />
<polygon points="768.7,445.2 771.0,444.0 773.8,443.6 776.5,444.2 798.7,454.2 800.5,455.7 800.9,457.5 799.9,459.4 782.4,475.4 780.1,476.7 777.2,477.1 774.5,476.4 752.2,466.2 750.4,464.7 750.0,462.8 751.1,461.0" fill="#726e64" stroke="#1d1c19" stroke-width="1" stroke-linejoin="round" />
<path d="M760.1 461.2L778.4 469.6" stroke="#2b2a25" stroke-width="4.4"/>
<path d="M760.9 461.5L777.6 469.3" stroke="#d3cfc3" stroke-width="2.6" stroke-dasharray="1.4,0.35"/>
<polygon points="806.2,462.9 808.5,461.6 811.4,461.2 814.1,461.8 841.2,474.1 843.1,475.6 843.5,477.5 842.5,479.3 821.8,498.9 819.5,500.2 816.5,500.6 813.8,500.0 786.5,487.4 784.7,485.9 784.2,484.0 785.3,482.2" fill="#3d3c37" stroke="#1d1c19" stroke-width="1" stroke-linejoin="round" />
<polygon points="841.2,477.8 840.4,479.2 820.5,498.1 818.8,499.0 816.6,499.3 814.6,498.8 788.3,486.7 786.9,485.6 786.6,484.2 788.1,480.3 789.2,478.5 806.6,462.4 808.9,461.1 811.8,460.8 814.5,461.4 837.0,471.6 838.9,473.0 840.9,476.4" fill="#474540" stroke="#1d1c19" stroke-width="1" stroke-linejoin="round" />
<polygon points="839.3,475.8 840.6,479.1 819.7,498.7 819.4,494.6" fill="#5a5750" stroke="none" stroke-width="1" stroke-linejoin="round" />
<polygon points="806.6,462.4 808.9,461.1 811.8,460.8 814.5,461.4 837.0,471.6 838.9,473.0 839.3,474.9 838.3,476.8 821.0,493.1 818.7,494.4 815.8,494.8 813.0,494.1 790.3,483.7 788.5,482.2 788.1,480.3 789.2,478.5" fill="#726e64" stroke="#1d1c19" stroke-width="1" stroke-linejoin="round" />
<path d="M798.3 478.7L816.8 487.2" stroke="#2b2a25" stroke-width="4.4"/>
<path d="M799.1 479.0L816.0 486.9" stroke="#d3cfc3" stroke-width="2.6" stroke-dasharray="1.4,0.35"/>
<polygon points="844.7,480.3 846.9,479.0 849.8,478.6 852.6,479.3 880.2,491.7 882.1,493.2 882.6,495.2 881.6,497.0 861.0,517.0 858.7,518.3 855.7,518.7 852.9,518.1 825.2,505.3 823.3,503.8 822.9,501.8 823.9,499.9" fill="#3d3c37" stroke="#1d1c19" stroke-width="1" stroke-linejoin="round" />
<polygon points="880.2,495.5 879.5,496.9 859.7,516.1 858.0,517.1 855.8,517.4 853.8,516.9 827.0,504.6 825.6,503.5 825.3,502.0 826.8,498.1 827.9,496.2 845.1,479.9 847.4,478.6 850.3,478.2 853.1,478.8 876.0,489.2 877.9,490.7 879.8,494.1" fill="#474540" stroke="#1d1c19" stroke-width="1" stroke-linejoin="round" />
<polygon points="878.4,493.5 879.6,496.8 858.9,516.8 858.6,512.6" fill="#5a5750" stroke="none" stroke-width="1" stroke-linejoin="round" />
<polygon points="845.1,479.9 847.4,478.6 850.3,478.2 853.1,478.8 876.0,489.2 877.9,490.7 878.4,492.6 877.4,494.5 860.2,511.1 857.9,512.4 855.0,512.8 852.2,512.2 829.1,501.6 827.3,500.1 826.8,498.1 827.9,496.2" fill="#726e64" stroke="#1d1c19" stroke-width="1" stroke-linejoin="round" />
<path d="M837.0 496.4L855.9 505.1" stroke="#2b2a25" stroke-width="4.4"/>
<path d="M837.8 496.7L855.1 504.8" stroke="#d3cfc3" stroke-width="2.6" stroke-dasharray="1.4,0.35"/>
<polygon points="883.8,498.0 886.0,496.7 888.9,496.3 891.7,497.0 919.8,509.7 921.7,511.2 922.2,513.1 921.3,515.1 900.9,535.3 898.6,536.7 895.6,537.1 892.8,536.4 864.6,523.4 862.7,521.9 862.2,519.9 863.2,518.0" fill="#3d3c37" stroke="#1d1c19" stroke-width="1" stroke-linejoin="round" />
<polygon points="919.9,513.5 919.1,514.9 899.5,534.4 897.8,535.4 895.7,535.7 893.6,535.2 866.4,522.7 865.0,521.6 864.6,520.1 866.2,516.2 867.2,514.3 884.3,497.7 886.6,496.3 889.5,496.0 892.3,496.6 915.6,507.1 917.5,508.6 919.4,512.1" fill="#474540" stroke="#1d1c19" stroke-width="1" stroke-linejoin="round" />
<polygon points="918.1,511.5 919.3,514.8 898.8,535.1 898.6,531.0" fill="#5a5750" stroke="none" stroke-width="1" stroke-linejoin="round" />
<polygon points="884.3,497.7 886.6,496.3 889.5,496.0 892.3,496.6 915.6,507.1 917.5,508.6 918.1,510.6 917.1,512.5 900.1,529.4 897.8,530.7 894.9,531.1 892.0,530.5 868.6,519.7 866.7,518.2 866.2,516.2 867.2,514.3" fill="#726e64" stroke="#1d1c19" stroke-width="1" stroke-linejoin="round" />
<path d="M876.5 514.5L895.6 523.3" stroke="#2b2a25" stroke-width="4.4"/>
<path d="M877.3 514.8L894.8 523.0" stroke="#d3cfc3" stroke-width="2.6" stroke-dasharray="1.4,0.35"/>
<polygon points="923.5,516.1 925.8,514.7 928.7,514.3 931.5,515.0 960.0,527.9 962.0,529.4 962.6,531.4 961.6,533.4 941.5,554.0 939.2,555.4 936.2,555.8 933.3,555.1 904.6,541.9 902.7,540.3 902.1,538.3 903.2,536.4" fill="#3d3c37" stroke="#1d1c19" stroke-width="1" stroke-linejoin="round" />
<polygon points="960.2,531.8 959.5,533.2 940.1,553.1 938.4,554.1 936.2,554.4 934.1,553.9 906.4,541.1 905.0,540.0 904.6,538.5 906.2,534.6 907.2,532.6 924.2,515.7 926.4,514.4 929.4,514.0 932.2,514.6 955.9,525.4 957.9,526.9 959.7,530.3" fill="#474540" stroke="#1d1c19" stroke-width="1" stroke-linejoin="round" />
<polygon points="958.5,529.8 959.6,533.1 939.4,553.8 939.1,549.6" fill="#5a5750" stroke="none" stroke-width="1" stroke-linejoin="round" />
<polygon points="924.2,515.7 926.4,514.4 929.4,514.0 932.2,514.6 955.9,525.4 957.9,526.9 958.5,528.9 957.5,530.9 940.7,548.0 938.4,549.4 935.4,549.8 932.6,549.1 908.7,538.2 906.8,536.6 906.2,534.6 907.2,532.6" fill="#726e64" stroke="#1d1c19" stroke-width="1" stroke-linejoin="round" />
<path d="M916.6 532.9L936.0 541.8" stroke="#2b2a25" stroke-width="4.4"/>
<path d="M917.4 533.2L935.2 541.5" stroke="#d3cfc3" stroke-width="2.6" stroke-dasharray="1.4,0.35"/>
<polygon points="963.9,534.4 966.2,533.1 969.1,532.6 972.0,533.3 1001.0,546.4 1003.0,548.0 1003.6,550.0 1002.7,552.0 982.8,573.0 980.5,574.4 977.5,574.8 974.6,574.1 945.4,560.7 943.4,559.1 942.8,557.0 943.8,555.1" fill="#3d3c37" stroke="#1d1c19" stroke-width="1" stroke-linejoin="round" />
<polygon points="1001.2,550.4 1000.5,551.9 981.3,572.0 979.6,573.1 977.4,573.4 975.3,572.9 947.1,559.9 945.7,558.7 945.2,557.2 947.0,553.3 947.9,551.3 964.7,534.1 967.0,532.8 969.9,532.4 972.8,533.0 996.9,543.9 998.9,545.5 1000.7,548.9" fill="#474540" stroke="#1d1c19" stroke-width="1" stroke-linejoin="round" />
<polygon points="999.6,548.5 1000.6,551.7 980.6,572.8 980.4,568.6" fill="#5a5750" stroke="none" stroke-width="1" stroke-linejoin="round" />
<polygon points="964.7,534.1 967.0,532.8 969.9,532.4 972.8,533.0 996.9,543.9 998.9,545.5 999.5,547.5 998.6,549.5 982.0,566.9 979.7,568.3 976.7,568.8 973.8,568.1 949.5,556.9 947.5,555.3 947.0,553.3 947.9,551.3" fill="#726e64" stroke="#1d1c19" stroke-width="1" stroke-linejoin="round" />
<path d="M957.3 551.5L977.2 560.6" stroke="#2b2a25" stroke-width="4.4"/>
<path d="M958.1 551.8L976.4 560.3" stroke="#d3cfc3" stroke-width="2.6" stroke-dasharray="1.4,0.35"/>
<polygon points="1005.0,553.1 1007.3,551.7 1010.2,551.3 1013.1,551.9 1042.6,565.3 1044.7,566.9 1045.4,569.0 1044.5,571.0 1024.8,592.3 1022.5,593.8 1019.5,594.2 1016.5,593.5 986.8,579.8 984.8,578.2 984.2,576.1 985.1,574.1" fill="#3d3c37" stroke="#1d1c19" stroke-width="1" stroke-linejoin="round" />
<polygon points="1042.9,569.3 1042.3,570.8 1023.3,591.3 1021.6,592.4 1019.4,592.7 1017.2,592.2 988.6,579.0 987.1,577.8 986.6,576.3 988.4,572.3 989.3,570.3 1005.9,552.8 1008.2,551.4 1011.1,551.0 1014.0,551.7 1038.6,562.8 1040.7,564.4 1042.4,567.8" fill="#474540" stroke="#1d1c19" stroke-width="1" stroke-linejoin="round" />
<polygon points="1041.4,567.4 1042.4,570.7 1022.6,592.1 1022.5,587.9" fill="#5a5750" stroke="none" stroke-width="1" stroke-linejoin="round" />
<polygon points="1005.9,552.8 1008.2,551.4 1011.1,551.0 1014.0,551.7 1038.6,562.8 1040.7,564.4 1041.3,566.5 1040.4,568.5 1024.0,586.2 1021.7,587.6 1018.7,588.1 1015.8,587.4 991.1,576.0 989.0,574.4 988.4,572.3 989.3,570.3" fill="#726e64" stroke="#1d1c19" stroke-width="1" stroke-linejoin="round" />
<path d="M998.8 570.5L1019.0 579.8" stroke="#2b2a25" stroke-width="4.4"/>
<path d="M999.6 570.8L1018.2 579.5" stroke="#d3cfc3" stroke-width="2.6" stroke-dasharray="1.4,0.35"/>
<polygon points="1046.9,572.0 1049.1,570.6 1052.1,570.2 1055.0,570.9 1085.0,584.5 1087.1,586.1 1087.9,588.2 1087.0,590.3 1067.6,612.0 1065.3,613.4 1062.2,613.9 1059.2,613.2 1029.0,599.2 1026.9,597.6 1026.2,595.5 1027.2,593.4" fill="#3d3c37" stroke="#1d1c19" stroke-width="1" stroke-linejoin="round" />
<polygon points="1085.4,588.6 1084.7,590.1 1066.0,611.0 1064.3,612.1 1062.1,612.4 1059.9,611.9 1030.8,598.4 1029.2,597.2 1028.7,595.7 1029.4,594.2 1031.5,589.6 1047.9,571.8 1050.1,570.4 1053.1,570.0 1056.0,570.7 1081.0,582.0 1083.1,583.6 1084.9,587.0" fill="#474540" stroke="#1d1c19" stroke-width="1" stroke-linejoin="round" />
<polygon points="1083.9,586.7 1084.9,589.9 1065.3,611.7 1065.2,607.5" fill="#5a5750" stroke="none" stroke-width="1" stroke-linejoin="round" />
<polygon points="1047.9,571.8 1050.1,570.4 1053.1,570.0 1056.0,570.7 1081.0,582.0 1083.1,583.6 1083.8,585.7 1083.0,587.8 1066.8,605.8 1064.5,607.3 1061.4,607.7 1058.5,607.0 1033.3,595.5 1031.2,593.8 1030.6,591.7 1031.5,589.6" fill="#726e64" stroke="#1d1c19" stroke-width="1" stroke-linejoin="round" />
<path d="M1041.1 589.9L1061.6 599.3" stroke="#2b2a25" stroke-width="4.4"/>
<path d="M1041.9 590.2L1060.8 599.0" stroke="#d3cfc3" stroke-width="2.6" stroke-dasharray="1.4,0.35"/>
<polygon points="1089.4,591.3 1091.6,589.9 1094.6,589.5 1097.6,590.2 1128.1,604.0 1130.3,605.7 1131.1,607.8 1130.3,609.9 1111.1,632.0 1108.8,633.5 1105.7,633.9 1102.7,633.2 1071.9,619.0 1069.8,617.4 1069.1,615.2 1070.0,613.1" fill="#3d3c37" stroke="#1d1c19" stroke-width="1" stroke-linejoin="round" />
<polygon points="1128.6,608.2 1128.0,609.7 1109.5,631.0 1107.8,632.1 1105.6,632.4 1103.4,631.9 1073.7,618.2 1072.1,617.0 1071.6,615.4 1072.2,613.8 1074.4,609.3 1090.5,591.2 1092.8,589.8 1095.8,589.3 1098.8,590.0 1124.2,601.5 1126.3,603.2 1128.0,606.6" fill="#474540" stroke="#1d1c19" stroke-width="1" stroke-linejoin="round" />
<polygon points="1127.2,606.3 1128.1,609.6 1108.8,631.7 1108.8,627.5" fill="#5a5750" stroke="none" stroke-width="1" stroke-linejoin="round" />
<polygon points="1090.5,591.2 1092.8,589.8 1095.8,589.3 1098.8,590.0 1124.2,601.5 1126.3,603.2 1127.1,605.3 1126.3,607.4 1110.3,625.8 1108.0,627.3 1104.9,627.7 1101.9,627.0 1076.3,615.2 1074.2,613.6 1073.5,611.4 1074.4,609.3" fill="#726e64" stroke="#1d1c19" stroke-width="1" stroke-linejoin="round" />
<path d="M1084.0 609.5L1104.9 619.1" stroke="#2b2a25" stroke-width="4.4"/>
<path d="M1084.8 609.8L1104.1 618.8" stroke="#d3cfc3" stroke-width="2.6" stroke-dasharray="1.4,0.35"/>
<polygon points="1132.7,611.0 1134.9,609.5 1138.0,609.1 1141.0,609.8 1172.0,623.9 1174.3,625.6 1175.1,627.7 1174.3,629.9 1155.4,652.4 1153.1,653.9 1150.0,654.3 1147.0,653.6 1115.6,639.2 1113.4,637.5 1112.7,635.3 1113.5,633.1" fill="#3d3c37" stroke="#1d1c19" stroke-width="1" stroke-linejoin="round" />
<polygon points="1172.6,628.1 1172.0,629.7 1153.7,651.3 1152.1,652.4 1149.8,652.8 1147.6,652.2 1117.3,638.3 1115.7,637.1 1115.2,635.5 1115.8,633.9 1118.0,629.3 1134.0,610.9 1136.2,609.4 1139.2,609.0 1142.2,609.7 1168.1,621.4 1170.3,623.1 1172.0,626.5" fill="#474540" stroke="#1d1c19" stroke-width="1" stroke-linejoin="round" />
<polygon points="1171.3,626.3 1172.1,629.5 1153.1,652.1 1153.1,647.9" fill="#5a5750" stroke="none" stroke-width="1" stroke-linejoin="round" />
<polygon points="1134.0,610.9 1136.2,609.4 1139.2,609.0 1142.2,609.7 1168.1,621.4 1170.3,623.1 1171.1,625.3 1170.3,627.4 1154.5,646.1 1152.3,647.6 1149.2,648.0 1146.1,647.3 1120.1,635.4 1117.9,633.7 1117.1,631.5 1118.0,629.3" fill="#726e64" stroke="#1d1c19" stroke-width="1" stroke-linejoin="round" />
<path d="M1127.8 629.6L1149.0 639.3" stroke="#2b2a25" stroke-width="4.4"/>
<path d="M1128.6 629.9L1148.2 639.0" stroke="#d3cfc3" stroke-width="2.6" stroke-dasharray="1.4,0.35"/>
<polygon points="1176.8,631.0 1179.0,629.5 1182.0,629.1 1185.1,629.8 1216.7,644.1 1219.0,645.8 1219.9,648.0 1219.1,650.2 1200.5,673.1 1198.2,674.7 1195.1,675.1 1192.0,674.4 1160.1,659.7 1157.8,657.9 1157.0,655.7 1157.9,653.5" fill="#3d3c37" stroke="#1d1c19" stroke-width="1" stroke-linejoin="round" />
<polygon points="1217.3,648.4 1216.7,650.0 1198.8,672.0 1197.1,673.2 1194.9,673.5 1192.6,673.0 1161.8,658.8 1160.2,657.5 1159.6,655.9 1160.2,654.3 1162.4,649.7 1178.2,630.9 1180.4,629.5 1183.4,629.0 1186.5,629.7 1212.8,641.6 1215.1,643.3 1216.7,646.8" fill="#474540" stroke="#1d1c19" stroke-width="1" stroke-linejoin="round" />
<polygon points="1216.1,646.6 1216.9,649.9 1198.1,672.8 1198.2,668.6" fill="#5a5750" stroke="none" stroke-width="1" stroke-linejoin="round" />
<polygon points="1178.2,630.9 1180.4,629.5 1183.4,629.0 1186.5,629.7 1212.8,641.6 1215.1,643.3 1216.0,645.6 1215.2,647.7 1199.6,666.8 1197.4,668.3 1194.3,668.8 1191.2,668.0 1164.7,655.8 1162.4,654.1 1161.6,651.9 1162.4,649.7" fill="#726e64" stroke="#1d1c19" stroke-width="1" stroke-linejoin="round" />
<path d="M1172.3 650.0L1193.9 659.9" stroke="#2b2a25" stroke-width="4.4"/>
<path d="M1173.1 650.3L1193.1 659.6" stroke="#d3cfc3" stroke-width="2.6" stroke-dasharray="1.4,0.35"/>
<polygon points="1221.6,651.3 1223.9,649.8 1226.9,649.4 1230.0,650.1 1262.2,664.7 1264.5,666.4 1265.5,668.7 1264.7,670.9 1246.4,694.2 1244.1,695.8 1241.0,696.3 1237.9,695.5 1205.4,680.5 1203.1,678.8 1202.2,676.5 1203.0,674.3" fill="#3d3c37" stroke="#1d1c19" stroke-width="1" stroke-linejoin="round" />
<polygon points="1262.9,669.1 1262.3,670.7 1244.6,693.1 1243.0,694.3 1240.7,694.6 1238.4,694.1 1207.1,679.6 1205.4,678.4 1204.7,676.7 1205.3,675.1 1207.7,670.5 1223.2,651.4 1225.4,649.8 1228.4,649.4 1231.5,650.1 1258.3,662.2 1260.7,664.0 1262.2,667.4" fill="#474540" stroke="#1d1c19" stroke-width="1" stroke-linejoin="round" />
<polygon points="1261.8,667.3 1262.5,670.5 1244.0,694.0 1244.1,689.7" fill="#5a5750" stroke="none" stroke-width="1" stroke-linejoin="round" />
<polygon points="1223.2,651.4 1225.4,649.8 1228.4,649.4 1231.5,650.1 1258.3,662.2 1260.7,664.0 1261.6,666.3 1260.9,668.5 1245.5,687.8 1243.3,689.4 1240.2,689.9 1237.0,689.1 1210.0,676.7 1207.7,675.0 1206.9,672.7 1207.7,670.5" fill="#726e64" stroke="#1d1c19" stroke-width="1" stroke-linejoin="round" />
<path d="M1217.6 670.7L1239.6 680.8" stroke="#2b2a25" stroke-width="4.4"/>
<path d="M1218.4 671.0L1238.8 680.5" stroke="#d3cfc3" stroke-width="2.6" stroke-dasharray="1.4,0.35"/>
<polygon points="1267.3,672.1 1269.5,670.5 1272.6,670.1 1275.7,670.8 1308.5,685.7 1310.9,687.4 1311.9,689.7 1311.2,692.0 1293.1,715.7 1290.9,717.3 1287.8,717.8 1284.6,717.0 1251.5,701.8 1249.1,700.0 1248.2,697.7 1249.0,695.4" fill="#3d3c37" stroke="#1d1c19" stroke-width="1" stroke-linejoin="round" />
<polygon points="1309.3,690.1 1308.8,691.8 1291.4,714.6 1289.7,715.8 1287.4,716.1 1285.1,715.6 1253.2,700.9 1251.4,699.6 1250.8,697.9 1251.3,696.2 1253.7,691.6 1269.0,672.1 1271.2,670.6 1274.3,670.1 1277.4,670.9 1304.7,683.2 1307.1,685.0 1308.6,688.4" fill="#474540" stroke="#1d1c19" stroke-width="1" stroke-linejoin="round" />
<polygon points="1308.2,688.4 1308.9,691.6 1290.7,715.5 1290.9,711.1" fill="#5a5750" stroke="none" stroke-width="1" stroke-linejoin="round" />
<polygon points="1269.0,672.1 1271.2,670.6 1274.3,670.1 1277.4,670.9 1304.7,683.2 1307.1,685.0 1308.1,687.3 1307.4,689.5 1292.3,709.3 1290.1,710.9 1286.9,711.4 1283.7,710.6 1256.3,698.0 1253.9,696.2 1253.0,693.8 1253.7,691.6" fill="#726e64" stroke="#1d1c19" stroke-width="1" stroke-linejoin="round" />
<path d="M1263.8 691.8L1286.2 702.1" stroke="#2b2a25" stroke-width="4.4"/>
<path d="M1264.6 692.1L1285.4 701.8" stroke="#d3cfc3" stroke-width="2.6" stroke-dasharray="1.4,0.35"/>
<polygon points="1313.8,693.2 1316.0,691.6 1319.1,691.1 1322.3,691.9 1355.7,707.0 1358.1,708.8 1359.2,711.2 1358.5,713.4 1340.8,737.7 1338.6,739.3 1335.4,739.8 1332.2,739.0 1298.5,723.4 1296.0,721.6 1295.1,719.3 1295.8,717.0" fill="#3d3c37" stroke="#1d1c19" stroke-width="1" stroke-linejoin="round" />
<polygon points="1356.5,711.6 1356.0,713.2 1338.9,736.5 1337.3,737.7 1335.0,738.1 1332.6,737.5 1300.1,722.5 1298.4,721.2 1297.6,719.4 1298.2,717.8 1300.6,713.1 1315.6,693.3 1317.8,691.7 1320.9,691.3 1324.1,692.0 1351.9,704.6 1354.3,706.4 1355.4,708.7" fill="#474540" stroke="#1d1c19" stroke-width="1" stroke-linejoin="round" />
<polygon points="1355.6,709.8 1356.2,713.1 1338.3,737.4 1338.5,733.0" fill="#5a5750" stroke="none" stroke-width="1" stroke-linejoin="round" />
<polygon points="1315.6,693.3 1317.8,691.7 1320.9,691.3 1324.1,692.0 1351.9,704.6 1354.3,706.4 1355.4,708.7 1354.7,711.0 1339.9,731.1 1337.7,732.8 1334.6,733.2 1331.3,732.5 1303.3,719.6 1300.9,717.8 1299.9,715.4 1300.6,713.1" fill="#726e64" stroke="#1d1c19" stroke-width="1" stroke-linejoin="round" />
<path d="M1310.8 713.4L1333.6 723.8" stroke="#2b2a25" stroke-width="4.4"/>
<path d="M1311.6 713.7L1332.8 723.5" stroke="#d3cfc3" stroke-width="2.6" stroke-dasharray="1.4,0.35"/>
<polygon points="701.3,455.1 703.7,453.8 706.6,453.5 709.2,454.1 754.5,475.0 756.3,476.4 756.7,478.3 755.6,480.2 734.0,499.8 731.7,501.1 728.7,501.5 726.0,500.9 680.4,479.5 678.7,478.0 678.4,476.1 679.6,474.3" fill="#3d3c37" stroke="#1d1c19" stroke-width="1" stroke-linejoin="round" />
<polygon points="754.4,478.7 753.5,480.1 732.8,499.0 731.1,499.9 728.9,500.2 726.9,499.7 682.3,478.8 681.0,477.7 680.8,476.3 682.1,472.4 683.3,470.6 701.4,454.6 703.8,453.4 706.7,453.0 709.4,453.6 750.2,472.4 752.0,473.9 754.1,477.3" fill="#474540" stroke="#1d1c19" stroke-width="1" stroke-linejoin="round" />
<polygon points="752.3,476.7 753.7,479.9 732.0,499.6 731.6,495.5" fill="#5a5750" stroke="none" stroke-width="1" stroke-linejoin="round" />
<polygon points="701.4,454.6 703.8,453.4 706.7,453.0 709.4,453.6 750.2,472.4 752.0,473.9 752.4,475.8 751.3,477.7 733.3,494.0 730.9,495.3 728.0,495.7 725.2,495.0 684.2,475.8 682.4,474.3 682.1,472.4 683.3,470.6" fill="#726e64" stroke="#1d1c19" stroke-width="1" stroke-linejoin="round" />
<path d="M692.3 470.8L729.3 488.1" stroke="#2b2a25" stroke-width="4.4"/>
<path d="M693.1 471.1L728.5 487.8" stroke="#d3cfc3" stroke-width="2.6" stroke-dasharray="1.4,0.35"/>
<polygon points="757.7,481.2 760.0,479.9 763.0,479.5 765.7,480.1 792.8,492.6 794.6,494.1 795.0,496.0 793.9,497.9 772.5,517.9 770.2,519.2 767.2,519.6 764.4,519.0 737.2,506.2 735.4,504.7 735.0,502.7 736.2,500.8" fill="#3d3c37" stroke="#1d1c19" stroke-width="1" stroke-linejoin="round" />
<polygon points="792.7,496.4 791.9,497.8 771.3,517.0 769.5,518.0 767.4,518.3 765.3,517.8 739.1,505.5 737.7,504.4 737.5,502.9 738.9,499.0 740.0,497.1 758.0,480.8 760.3,479.5 763.2,479.1 765.9,479.7 788.4,490.1 790.3,491.6 792.3,495.0" fill="#474540" stroke="#1d1c19" stroke-width="1" stroke-linejoin="round" />
<polygon points="790.7,494.4 792.0,497.7 770.5,517.7 770.1,513.5" fill="#5a5750" stroke="none" stroke-width="1" stroke-linejoin="round" />
<polygon points="758.0,480.8 760.3,479.5 763.2,479.1 765.9,479.7 788.4,490.1 790.3,491.6 790.7,493.5 789.6,495.4 771.8,512.0 769.4,513.3 766.5,513.7 763.7,513.1 741.1,502.5 739.3,501.0 738.9,499.0 740.0,497.1" fill="#726e64" stroke="#1d1c19" stroke-width="1" stroke-linejoin="round" />
<path d="M749.2 497.3L767.7 506.0" stroke="#2b2a25" stroke-width="4.4"/>
<path d="M750.0 497.6L766.9 505.7" stroke="#d3cfc3" stroke-width="2.6" stroke-dasharray="1.4,0.35"/>
<polygon points="796.1,498.9 798.4,497.6 801.3,497.2 804.1,497.9 831.6,510.6 833.5,512.1 834.0,514.0 832.9,516.0 811.7,536.3 809.4,537.6 806.4,538.0 803.6,537.4 775.9,524.3 774.0,522.8 773.6,520.8 774.7,518.9" fill="#3d3c37" stroke="#1d1c19" stroke-width="1" stroke-linejoin="round" />
<polygon points="831.6,514.4 830.8,515.8 810.4,535.3 808.7,536.3 806.5,536.6 804.4,536.2 777.7,523.6 776.3,522.5 776.0,521.0 777.5,517.1 778.6,515.2 796.4,498.6 798.8,497.2 801.7,496.8 804.5,497.5 827.3,508.0 829.2,509.5 831.2,513.0" fill="#474540" stroke="#1d1c19" stroke-width="1" stroke-linejoin="round" />
<polygon points="829.7,512.4 830.9,515.7 809.7,536.0 809.3,531.9" fill="#5a5750" stroke="none" stroke-width="1" stroke-linejoin="round" />
<polygon points="796.4,498.6 798.8,497.2 801.7,496.8 804.5,497.5 827.3,508.0 829.2,509.5 829.7,511.5 828.6,513.4 811.0,530.3 808.6,531.7 805.6,532.1 802.8,531.4 779.8,520.6 777.9,519.1 777.5,517.1 778.6,515.2" fill="#726e64" stroke="#1d1c19" stroke-width="1" stroke-linejoin="round" />
<path d="M787.9 515.4L806.7 524.2" stroke="#2b2a25" stroke-width="4.4"/>
<path d="M788.7 515.7L805.9 523.9" stroke="#d3cfc3" stroke-width="2.6" stroke-dasharray="1.4,0.35"/>
<polygon points="835.1,517.0 837.4,515.6 840.4,515.2 843.2,515.9 871.2,528.8 873.1,530.3 873.6,532.4 872.6,534.3 851.6,554.9 849.2,556.3 846.2,556.7 843.4,556.1 815.2,542.8 813.3,541.3 812.8,539.2 813.9,537.3" fill="#3d3c37" stroke="#1d1c19" stroke-width="1" stroke-linejoin="round" />
<polygon points="871.2,532.7 870.4,534.1 850.2,554.0 848.5,555.0 846.3,555.3 844.2,554.8 817.0,542.1 815.6,540.9 815.3,539.4 816.8,535.5 817.9,533.6 835.6,516.6 837.9,515.3 840.8,514.9 843.6,515.6 866.9,526.3 868.8,527.8 870.8,531.2" fill="#474540" stroke="#1d1c19" stroke-width="1" stroke-linejoin="round" />
<polygon points="869.3,530.8 870.5,534.0 849.5,554.7 849.1,550.5" fill="#5a5750" stroke="none" stroke-width="1" stroke-linejoin="round" />
<polygon points="835.6,516.6 837.9,515.3 840.8,514.9 843.6,515.6 866.9,526.3 868.8,527.8 869.3,529.8 868.3,531.8 850.8,548.9 848.4,550.3 845.4,550.7 842.6,550.1 819.2,539.1 817.3,537.5 816.8,535.5 817.9,533.6" fill="#726e64" stroke="#1d1c19" stroke-width="1" stroke-linejoin="round" />
<path d="M827.2 533.8L846.4 542.7" stroke="#2b2a25" stroke-width="4.4"/>
<path d="M828.0 534.1L845.6 542.4" stroke="#d3cfc3" stroke-width="2.6" stroke-dasharray="1.4,0.35"/>
<polygon points="874.8,535.3 877.1,534.0 880.1,533.6 882.9,534.2 911.4,547.4 913.3,548.9 913.9,551.0 912.9,552.9 892.1,574.0 889.7,575.4 886.7,575.8 883.8,575.1 855.2,561.6 853.2,560.0 852.7,558.0 853.8,556.0" fill="#3d3c37" stroke="#1d1c19" stroke-width="1" stroke-linejoin="round" />
<polygon points="911.5,551.3 910.7,552.8 890.7,573.0 889.0,574.0 886.8,574.3 884.6,573.8 857.0,560.8 855.6,559.7 855.2,558.2 856.8,554.2 857.9,552.2 875.3,535.0 877.7,533.7 880.6,533.3 883.5,533.9 907.1,544.9 909.1,546.4 911.1,549.8" fill="#474540" stroke="#1d1c19" stroke-width="1" stroke-linejoin="round" />
<polygon points="909.7,549.4 910.8,552.7 890.0,573.7 889.7,569.5" fill="#5a5750" stroke="none" stroke-width="1" stroke-linejoin="round" />
<polygon points="875.3,535.0 877.7,533.7 880.6,533.3 883.5,533.9 907.1,544.9 909.1,546.4 909.7,548.5 908.6,550.4 891.3,567.9 889.0,569.3 885.9,569.7 883.1,569.0 859.2,557.9 857.3,556.3 856.8,554.2 857.9,552.2" fill="#726e64" stroke="#1d1c19" stroke-width="1" stroke-linejoin="round" />
<path d="M867.3 552.5L886.7 561.6" stroke="#2b2a25" stroke-width="4.4"/>
<path d="M868.1 552.8L885.9 561.3" stroke="#d3cfc3" stroke-width="2.6" stroke-dasharray="1.4,0.35"/>
<polygon points="915.2,554.0 917.5,552.6 920.5,552.2 923.3,552.9 952.3,566.2 954.3,567.8 954.9,569.9 953.9,571.9 933.3,593.3 931.0,594.7 927.9,595.2 925.0,594.5 895.9,580.8 893.9,579.1 893.3,577.0 894.4,575.0" fill="#3d3c37" stroke="#1d1c19" stroke-width="1" stroke-linejoin="round" />
<polygon points="952.4,570.3 951.7,571.8 931.9,592.3 930.2,593.4 927.9,593.7 925.8,593.2 897.7,580.0 896.2,578.8 895.8,577.2 897.5,573.3 898.5,571.3 915.8,553.8 918.1,552.4 921.1,552.0 924.0,552.6 948.1,563.7 950.1,565.3 952.0,568.8" fill="#474540" stroke="#1d1c19" stroke-width="1" stroke-linejoin="round" />
<polygon points="950.7,568.4 951.8,571.6 931.2,593.1 930.9,588.8" fill="#5a5750" stroke="none" stroke-width="1" stroke-linejoin="round" />
<polygon points="915.8,553.8 918.1,552.4 921.1,552.0 924.0,552.6 948.1,563.7 950.1,565.3 950.7,567.4 949.7,569.4 932.5,587.2 930.2,588.6 927.2,589.0 924.2,588.3 900.0,577.0 898.0,575.4 897.5,573.3 898.5,571.3" fill="#726e64" stroke="#1d1c19" stroke-width="1" stroke-linejoin="round" />
<path d="M908.0 571.5L927.8 580.7" stroke="#2b2a25" stroke-width="4.4"/>
<path d="M908.8 571.8L927.0 580.4" stroke="#d3cfc3" stroke-width="2.6" stroke-dasharray="1.4,0.35"/>
<polygon points="956.2,573.0 958.5,571.6 961.5,571.2 964.4,571.9 993.9,585.4 996.0,587.1 996.6,589.2 995.6,591.2 975.3,613.0 973.0,614.4 969.9,614.9 966.9,614.2 937.3,600.2 935.2,598.6 934.6,596.4 935.7,594.4" fill="#3d3c37" stroke="#1d1c19" stroke-width="1" stroke-linejoin="round" />
<polygon points="994.1,589.6 993.4,591.1 973.8,612.0 972.1,613.0 969.9,613.4 967.7,612.8 939.1,599.4 937.6,598.2 937.1,596.6 938.9,592.7 939.9,590.6 957.0,572.8 959.3,571.4 962.3,571.0 965.2,571.7 989.7,583.0 991.8,584.6 993.6,588.0" fill="#474540" stroke="#1d1c19" stroke-width="1" stroke-linejoin="round" />
<polygon points="992.5,587.7 993.5,590.9 973.1,612.7 972.9,608.5" fill="#5a5750" stroke="none" stroke-width="1" stroke-linejoin="round" />
<polygon points="957.0,572.8 959.3,571.4 962.3,571.0 965.2,571.7 989.7,583.0 991.8,584.6 992.4,586.7 991.5,588.7 974.5,606.8 972.2,608.3 969.1,608.7 966.1,608.0 941.5,596.4 939.5,594.8 938.9,592.7 939.9,590.6" fill="#726e64" stroke="#1d1c19" stroke-width="1" stroke-linejoin="round" />
<path d="M949.4 590.8L969.6 600.3" stroke="#2b2a25" stroke-width="4.4"/>
<path d="M950.2 591.1L968.8 600.0" stroke="#d3cfc3" stroke-width="2.6" stroke-dasharray="1.4,0.35"/>
<polygon points="998.0,592.3 1000.3,590.9 1003.3,590.5 1006.3,591.2 1036.2,605.0 1038.4,606.6 1039.0,608.8 1038.1,610.9 1018.0,633.0 1015.7,634.5 1012.6,634.9 1009.6,634.2 979.4,620.0 977.3,618.4 976.7,616.2 977.7,614.1" fill="#3d3c37" stroke="#1d1c19" stroke-width="1" stroke-linejoin="round" />
<polygon points="1036.5,609.2 1035.9,610.7 1016.5,632.0 1014.8,633.1 1012.5,633.4 1010.3,632.9 981.2,619.2 979.7,618.0 979.2,616.4 981.0,612.4 982.0,610.3 998.9,592.2 1001.2,590.7 1004.2,590.3 1007.2,591.0 1032.1,602.5 1034.2,604.2 1036.0,607.6" fill="#474540" stroke="#1d1c19" stroke-width="1" stroke-linejoin="round" />
<polygon points="1035.0,607.3 1036.0,610.6 1015.8,632.8 1015.6,628.5" fill="#5a5750" stroke="none" stroke-width="1" stroke-linejoin="round" />
<polygon points="998.9,592.2 1001.2,590.7 1004.2,590.3 1007.2,591.0 1032.1,602.5 1034.2,604.2 1034.9,606.3 1034.0,608.4 1017.2,626.8 1014.9,628.3 1011.8,628.7 1008.8,628.0 983.7,616.2 981.6,614.6 981.0,612.4 982.0,610.3" fill="#726e64" stroke="#1d1c19" stroke-width="1" stroke-linejoin="round" />
<path d="M991.6 610.5L1012.1 620.1" stroke="#2b2a25" stroke-width="4.4"/>
<path d="M992.4 610.8L1011.3 619.8" stroke="#d3cfc3" stroke-width="2.6" stroke-dasharray="1.4,0.35"/>
<polygon points="1040.5,612.0 1042.8,610.5 1045.8,610.1 1048.8,610.8 1079.3,624.9 1081.5,626.6 1082.2,628.7 1081.3,630.9 1061.5,653.4 1059.2,654.9 1056.1,655.4 1053.0,654.6 1022.3,640.2 1020.1,638.5 1019.5,636.3 1020.4,634.1" fill="#3d3c37" stroke="#1d1c19" stroke-width="1" stroke-linejoin="round" />
<polygon points="1079.7,629.1 1079.0,630.7 1059.9,652.4 1058.2,653.5 1055.9,653.8 1053.7,653.3 1024.0,639.3 1022.5,638.1 1022.0,636.5 1022.7,634.9 1024.8,630.3 1041.5,611.9 1043.8,610.4 1046.9,610.0 1049.9,610.7 1075.2,622.4 1077.4,624.1 1079.2,627.5" fill="#474540" stroke="#1d1c19" stroke-width="1" stroke-linejoin="round" />
<polygon points="1078.2,627.3 1079.2,630.5 1059.2,653.1 1059.1,648.9" fill="#5a5750" stroke="none" stroke-width="1" stroke-linejoin="round" />
<polygon points="1041.5,611.9 1043.8,610.4 1046.9,610.0 1049.9,610.7 1075.2,622.4 1077.4,624.1 1078.1,626.3 1077.2,628.4 1060.7,647.1 1058.4,648.6 1055.3,649.1 1052.2,648.3 1026.7,636.4 1024.5,634.7 1023.8,632.5 1024.8,630.3" fill="#726e64" stroke="#1d1c19" stroke-width="1" stroke-linejoin="round" />
<path d="M1034.5 630.6L1055.4 640.3" stroke="#2b2a25" stroke-width="4.4"/>
<path d="M1035.3 630.9L1054.6 640.0" stroke="#d3cfc3" stroke-width="2.6" stroke-dasharray="1.4,0.35"/>
<polygon points="1083.8,632.0 1086.1,630.5 1089.1,630.1 1092.2,630.8 1123.2,645.1 1125.4,646.8 1126.2,649.1 1125.4,651.2 1105.7,674.2 1103.4,675.7 1100.3,676.2 1097.2,675.4 1065.9,660.7 1063.7,659.0 1063.0,656.7 1063.9,654.6" fill="#3d3c37" stroke="#1d1c19" stroke-width="1" stroke-linejoin="round" />
<polygon points="1123.6,649.4 1123.0,651.0 1104.1,673.1 1102.4,674.2 1100.2,674.6 1097.9,674.0 1067.7,659.8 1066.1,658.6 1065.6,656.9 1066.2,655.3 1068.4,650.7 1084.9,632.0 1087.2,630.5 1090.3,630.0 1093.3,630.7 1119.1,642.7 1121.4,644.4 1123.1,647.8" fill="#474540" stroke="#1d1c19" stroke-width="1" stroke-linejoin="round" />
<polygon points="1122.2,647.6 1123.1,650.9 1103.5,673.9 1103.4,669.6" fill="#5a5750" stroke="none" stroke-width="1" stroke-linejoin="round" />
<polygon points="1084.9,632.0 1087.2,630.5 1090.3,630.0 1093.3,630.7 1119.1,642.7 1121.4,644.4 1122.1,646.6 1121.3,648.8 1104.9,667.8 1102.6,669.4 1099.5,669.8 1096.4,669.1 1070.4,656.9 1068.2,655.2 1067.5,652.9 1068.4,650.7" fill="#726e64" stroke="#1d1c19" stroke-width="1" stroke-linejoin="round" />
<path d="M1078.2 651.0L1099.5 660.9" stroke="#2b2a25" stroke-width="4.4"/>
<path d="M1079.0 651.3L1098.7 660.6" stroke="#d3cfc3" stroke-width="2.6" stroke-dasharray="1.4,0.35"/>
<polygon points="1127.8,652.4 1130.1,650.9 1133.2,650.4 1136.3,651.1 1167.9,665.7 1170.1,667.5 1171.0,669.7 1170.2,671.9 1150.8,695.3 1148.5,696.9 1145.4,697.3 1142.3,696.6 1110.4,681.6 1108.1,679.8 1107.4,677.5 1108.2,675.3" fill="#3d3c37" stroke="#1d1c19" stroke-width="1" stroke-linejoin="round" />
<polygon points="1168.4,670.1 1167.8,671.7 1149.2,694.2 1147.5,695.4 1145.2,695.7 1142.9,695.1 1112.1,680.7 1110.5,679.4 1109.9,677.7 1110.6,676.1 1112.8,671.5 1129.1,652.4 1131.4,650.9 1134.5,650.4 1137.5,651.2 1163.8,663.3 1166.1,665.0 1167.8,668.5" fill="#474540" stroke="#1d1c19" stroke-width="1" stroke-linejoin="round" />
<polygon points="1167.1,668.4 1167.9,671.6 1148.5,695.0 1148.5,690.7" fill="#5a5750" stroke="none" stroke-width="1" stroke-linejoin="round" />
<polygon points="1129.1,652.4 1131.4,650.9 1134.5,650.4 1137.5,651.2 1163.8,663.3 1166.1,665.0 1166.9,667.3 1166.1,669.5 1150.0,688.9 1147.7,690.5 1144.6,690.9 1141.4,690.2 1114.9,677.8 1112.7,676.0 1111.9,673.7 1112.8,671.5" fill="#726e64" stroke="#1d1c19" stroke-width="1" stroke-linejoin="round" />
<path d="M1122.7 671.8L1144.4 681.9" stroke="#2b2a25" stroke-width="4.4"/>
<path d="M1123.5 672.1L1143.6 681.6" stroke="#d3cfc3" stroke-width="2.6" stroke-dasharray="1.4,0.35"/>
<polygon points="1172.7,673.1 1174.9,671.6 1178.0,671.1 1181.1,671.9 1213.3,686.7 1215.7,688.5 1216.6,690.8 1215.8,693.0 1196.7,716.8 1194.4,718.4 1191.3,718.9 1188.1,718.1 1155.6,702.9 1153.3,701.1 1152.5,698.7 1153.4,696.5" fill="#3d3c37" stroke="#1d1c19" stroke-width="1" stroke-linejoin="round" />
<polygon points="1213.9,691.2 1213.4,692.8 1195.0,715.7 1193.3,716.9 1191.0,717.2 1188.7,716.7 1157.4,702.0 1155.7,700.6 1155.1,698.9 1155.7,697.3 1158.0,692.7 1174.1,673.2 1176.4,671.6 1179.5,671.2 1182.6,671.9 1209.3,684.3 1211.7,686.1 1213.3,689.5" fill="#474540" stroke="#1d1c19" stroke-width="1" stroke-linejoin="round" />
<polygon points="1212.7,689.4 1213.5,692.7 1194.4,716.5 1194.4,712.2" fill="#5a5750" stroke="none" stroke-width="1" stroke-linejoin="round" />
<polygon points="1174.1,673.2 1176.4,671.6 1179.5,671.2 1182.6,671.9 1209.3,684.3 1211.7,686.1 1212.6,688.4 1211.8,690.6 1195.9,710.4 1193.6,712.0 1190.4,712.4 1187.3,711.7 1160.3,699.0 1158.0,697.2 1157.2,694.9 1158.0,692.7" fill="#726e64" stroke="#1d1c19" stroke-width="1" stroke-linejoin="round" />
<path d="M1168.0 692.9L1190.1 703.2" stroke="#2b2a25" stroke-width="4.4"/>
<path d="M1168.8 693.2L1189.3 702.9" stroke="#d3cfc3" stroke-width="2.6" stroke-dasharray="1.4,0.35"/>
<polygon points="1218.4,694.2 1220.6,692.7 1223.7,692.2 1226.9,693.0 1259.7,708.1 1262.0,709.9 1263.0,712.3 1262.2,714.5 1243.5,738.8 1241.2,740.4 1238.0,740.9 1234.8,740.1 1201.7,724.5 1199.4,722.7 1198.5,720.3 1199.3,718.1" fill="#3d3c37" stroke="#1d1c19" stroke-width="1" stroke-linejoin="round" />
<polygon points="1260.3,712.6 1259.8,714.3 1241.7,737.6 1240.1,738.8 1237.7,739.2 1235.4,738.6 1203.5,723.6 1201.7,722.3 1201.1,720.5 1201.7,718.8 1204.1,714.2 1219.9,694.4 1222.1,692.8 1225.3,692.3 1228.4,693.1 1255.7,705.7 1258.1,707.5 1259.6,710.9" fill="#474540" stroke="#1d1c19" stroke-width="1" stroke-linejoin="round" />
<polygon points="1259.2,710.9 1259.9,714.2 1241.1,738.5 1241.2,734.1" fill="#5a5750" stroke="none" stroke-width="1" stroke-linejoin="round" />
<polygon points="1219.9,694.4 1222.1,692.8 1225.3,692.3 1228.4,693.1 1255.7,705.7 1258.1,707.5 1259.0,709.8 1258.3,712.1 1242.6,732.2 1240.4,733.9 1237.2,734.4 1234.0,733.6 1206.5,720.7 1204.1,718.9 1203.2,716.5 1204.1,714.2" fill="#726e64" stroke="#1d1c19" stroke-width="1" stroke-linejoin="round" />
<path d="M1214.2 714.5L1236.6 724.9" stroke="#2b2a25" stroke-width="4.4"/>
<path d="M1215.0 714.8L1235.8 724.6" stroke="#d3cfc3" stroke-width="2.6" stroke-dasharray="1.4,0.35"/>
<polygon points="670.7,482.1 673.1,480.8 676.0,480.4 678.7,481.0 733.8,507.0 735.6,508.5 736.0,510.4 734.9,512.3 712.8,532.6 710.4,533.9 707.4,534.3 704.6,533.7 649.2,507.1 647.4,505.6 647.1,503.6 648.3,501.7" fill="#3d3c37" stroke="#1d1c19" stroke-width="1" stroke-linejoin="round" />
<polygon points="733.6,510.8 732.8,512.2 711.5,531.7 709.8,532.6 707.6,532.9 705.5,532.5 651.0,506.4 649.8,505.3 649.5,503.8 650.9,499.9 652.1,498.0 670.7,481.6 673.1,480.4 676.0,480.0 678.7,480.6 729.4,504.4 731.2,505.9 733.4,509.3" fill="#474540" stroke="#1d1c19" stroke-width="1" stroke-linejoin="round" />
<polygon points="731.5,508.8 732.9,512.1 710.8,532.4 710.3,528.2" fill="#5a5750" stroke="none" stroke-width="1" stroke-linejoin="round" />
<polygon points="670.7,481.6 673.1,480.4 676.0,480.0 678.7,480.6 729.4,504.4 731.2,505.9 731.6,507.9 730.4,509.8 712.0,526.6 709.6,528.0 706.6,528.4 703.8,527.7 652.9,503.4 651.2,501.9 650.9,499.9 652.1,498.0" fill="#726e64" stroke="#1d1c19" stroke-width="1" stroke-linejoin="round" />
<path d="M661.2 498.2L708.0 520.5" stroke="#2b2a25" stroke-width="4.4"/>
<path d="M662.0 498.5L707.2 520.2" stroke="#d3cfc3" stroke-width="2.6" stroke-dasharray="1.4,0.35"/>
<polygon points="737.0,513.3 739.4,512.0 742.4,511.6 745.1,512.3 772.5,525.1 774.3,526.7 774.7,528.7 773.6,530.6 751.7,551.2 749.3,552.6 746.3,553.0 743.5,552.3 715.9,539.1 714.1,537.6 713.8,535.5 714.9,533.6" fill="#3d3c37" stroke="#1d1c19" stroke-width="1" stroke-linejoin="round" />
<polygon points="772.3,529.0 771.5,530.5 750.4,550.3 748.6,551.3 746.4,551.6 744.4,551.1 717.8,538.4 716.5,537.2 716.2,535.7 717.6,531.8 718.8,529.9 737.2,513.0 739.6,511.7 742.6,511.3 745.3,511.9 768.1,522.6 769.9,524.1 772.0,527.6" fill="#474540" stroke="#1d1c19" stroke-width="1" stroke-linejoin="round" />
<polygon points="770.3,527.1 771.6,530.3 749.7,551.0 749.2,546.8" fill="#5a5750" stroke="none" stroke-width="1" stroke-linejoin="round" />
<polygon points="737.2,513.0 739.6,511.7 742.6,511.3 745.3,511.9 768.1,522.6 769.9,524.1 770.3,526.1 769.2,528.1 750.9,545.2 748.5,546.6 745.5,547.0 742.7,546.3 719.8,535.4 718.0,533.8 717.6,531.8 718.8,529.9" fill="#726e64" stroke="#1d1c19" stroke-width="1" stroke-linejoin="round" />
<path d="M728.1 530.1L746.8 539.0" stroke="#2b2a25" stroke-width="4.4"/>
<path d="M728.9 530.4L746.0 538.7" stroke="#d3cfc3" stroke-width="2.6" stroke-dasharray="1.4,0.35"/>
<polygon points="775.8,531.6 778.2,530.3 781.1,529.9 783.9,530.5 811.8,543.6 813.7,545.2 814.1,547.2 813.0,549.2 791.3,570.1 788.9,571.5 785.9,571.9 783.0,571.3 755.0,557.8 753.2,556.3 752.7,554.2 753.9,552.2" fill="#3d3c37" stroke="#1d1c19" stroke-width="1" stroke-linejoin="round" />
<polygon points="811.7,547.6 810.9,549.0 790.0,569.2 788.2,570.2 786.0,570.5 783.9,570.0 756.9,557.1 755.5,555.9 755.2,554.4 756.7,550.5 757.9,548.5 776.1,531.3 778.5,530.0 781.5,529.6 784.3,530.2 807.4,541.1 809.3,542.7 811.4,546.1" fill="#474540" stroke="#1d1c19" stroke-width="1" stroke-linejoin="round" />
<polygon points="809.7,545.7 811.0,548.9 789.2,569.9 788.8,565.7" fill="#5a5750" stroke="none" stroke-width="1" stroke-linejoin="round" />
<polygon points="776.1,531.3 778.5,530.0 781.5,529.6 784.3,530.2 807.4,541.1 809.3,542.7 809.7,544.7 808.6,546.7 790.5,564.1 788.1,565.5 785.1,565.9 782.2,565.2 759.0,554.1 757.1,552.5 756.7,550.5 757.9,548.5" fill="#726e64" stroke="#1d1c19" stroke-width="1" stroke-linejoin="round" />
<path d="M767.2 548.7L786.3 557.8" stroke="#2b2a25" stroke-width="4.4"/>
<path d="M768.0 549.0L785.5 557.5" stroke="#d3cfc3" stroke-width="2.6" stroke-dasharray="1.4,0.35"/>
<polygon points="815.2,550.2 817.6,548.9 820.6,548.5 823.4,549.1 851.7,562.4 853.7,564.0 854.2,566.1 853.1,568.1 831.6,589.4 829.2,590.8 826.1,591.3 823.2,590.6 794.8,576.9 792.9,575.3 792.4,573.2 793.5,571.2" fill="#3d3c37" stroke="#1d1c19" stroke-width="1" stroke-linejoin="round" />
<polygon points="851.7,566.5 850.9,567.9 830.2,588.4 828.5,589.5 826.2,589.8 824.1,589.3 796.6,576.1 795.2,574.9 794.9,573.4 796.4,569.4 797.6,567.4 815.6,550.0 818.0,548.6 821.0,548.2 823.9,548.9 847.4,559.9 849.3,561.5 851.4,564.9" fill="#474540" stroke="#1d1c19" stroke-width="1" stroke-linejoin="round" />
<polygon points="849.8,564.6 851.1,567.8 829.5,589.2 829.1,585.0" fill="#5a5750" stroke="none" stroke-width="1" stroke-linejoin="round" />
<polygon points="815.6,550.0 818.0,548.6 821.0,548.2 823.9,548.9 847.4,559.9 849.3,561.5 849.8,563.6 848.7,565.6 830.8,583.3 828.4,584.7 825.4,585.1 822.5,584.5 798.8,573.1 796.9,571.5 796.4,569.4 797.6,567.4" fill="#726e64" stroke="#1d1c19" stroke-width="1" stroke-linejoin="round" />
<path d="M807.0 567.7L826.4 576.9" stroke="#2b2a25" stroke-width="4.4"/>
<path d="M807.8 568.0L825.6 576.6" stroke="#d3cfc3" stroke-width="2.6" stroke-dasharray="1.4,0.35"/>
<polygon points="855.4,569.2 857.7,567.8 860.7,567.4 863.6,568.0 892.4,581.6 894.4,583.2 894.9,585.3 893.9,587.3 872.6,609.0 870.2,610.5 867.1,610.9 864.2,610.2 835.2,596.3 833.2,594.7 832.8,592.5 833.9,590.5" fill="#3d3c37" stroke="#1d1c19" stroke-width="1" stroke-linejoin="round" />
<polygon points="892.5,585.7 891.7,587.2 871.2,608.0 869.4,609.1 867.2,609.4 865.0,608.9 837.1,595.5 835.6,594.3 835.3,592.7 836.9,588.8 838.0,586.7 855.9,569.0 858.2,567.6 861.3,567.1 864.1,567.8 888.1,579.1 890.1,580.7 892.1,584.1" fill="#474540" stroke="#1d1c19" stroke-width="1" stroke-linejoin="round" />
<polygon points="890.6,583.8 891.8,587.0 870.4,608.8 870.1,604.5" fill="#5a5750" stroke="none" stroke-width="1" stroke-linejoin="round" />
<polygon points="855.9,569.0 858.2,567.6 861.3,567.1 864.1,567.8 888.1,579.1 890.1,580.7 890.6,582.8 889.6,584.8 871.8,602.9 869.4,604.3 866.3,604.7 863.4,604.0 839.3,592.5 837.4,590.9 836.9,588.8 838.0,586.7" fill="#726e64" stroke="#1d1c19" stroke-width="1" stroke-linejoin="round" />
<path d="M847.5 586.9L867.2 596.3" stroke="#2b2a25" stroke-width="4.4"/>
<path d="M848.3 587.2L866.4 596.0" stroke="#d3cfc3" stroke-width="2.6" stroke-dasharray="1.4,0.35"/>
<polygon points="896.2,588.4 898.6,587.0 901.6,586.6 904.5,587.3 933.8,601.1 935.8,602.7 936.4,604.8 935.4,606.9 914.3,629.0 911.9,630.5 908.8,630.9 905.9,630.2 876.4,616.0 874.4,614.4 873.8,612.2 874.9,610.1" fill="#3d3c37" stroke="#1d1c19" stroke-width="1" stroke-linejoin="round" />
<polygon points="933.9,605.2 933.2,606.7 912.9,628.0 911.1,629.0 908.8,629.4 906.7,628.8 878.2,615.2 876.7,614.0 876.3,612.4 878.0,608.4 879.1,606.3 896.8,588.3 899.2,586.8 902.2,586.4 905.1,587.1 929.5,598.6 931.5,600.2 933.5,603.6" fill="#474540" stroke="#1d1c19" stroke-width="1" stroke-linejoin="round" />
<polygon points="932.1,603.4 933.3,606.6 912.1,628.7 911.9,624.5" fill="#5a5750" stroke="none" stroke-width="1" stroke-linejoin="round" />
<polygon points="896.8,588.3 899.2,586.8 902.2,586.4 905.1,587.1 929.5,598.6 931.5,600.2 932.1,602.4 931.1,604.4 913.5,622.8 911.1,624.2 908.0,624.7 905.1,624.0 880.6,612.2 878.5,610.6 878.0,608.4 879.1,606.3" fill="#726e64" stroke="#1d1c19" stroke-width="1" stroke-linejoin="round" />
<path d="M888.7 606.6L908.8 616.1" stroke="#2b2a25" stroke-width="4.4"/>
<path d="M889.5 606.9L908.0 615.8" stroke="#d3cfc3" stroke-width="2.6" stroke-dasharray="1.4,0.35"/>
<polygon points="937.7,608.0 940.1,606.6 943.1,606.1 946.1,606.8 975.9,620.9 978.0,622.5 978.6,624.7 977.6,626.8 956.8,649.3 954.4,650.8 951.3,651.2 948.3,650.5 918.2,636.1 916.2,634.4 915.6,632.2 916.7,630.1" fill="#3d3c37" stroke="#1d1c19" stroke-width="1" stroke-linejoin="round" />
<polygon points="976.1,625.1 975.4,626.7 955.3,648.3 953.5,649.4 951.3,649.7 949.1,649.2 920.1,635.3 918.6,634.0 918.2,632.4 919.9,628.4 920.9,626.3 938.5,607.9 940.8,606.5 943.9,606.0 946.8,606.7 971.6,618.4 973.7,620.1 975.6,623.5" fill="#474540" stroke="#1d1c19" stroke-width="1" stroke-linejoin="round" />
<polygon points="974.4,623.3 975.5,626.5 954.6,649.0 954.3,644.8" fill="#5a5750" stroke="none" stroke-width="1" stroke-linejoin="round" />
<polygon points="938.5,607.9 940.8,606.5 943.9,606.0 946.8,606.7 971.6,618.4 973.7,620.1 974.4,622.3 973.4,624.4 956.0,643.0 953.6,644.5 950.5,645.0 947.5,644.2 922.5,632.3 920.5,630.6 919.9,628.4 920.9,626.3" fill="#726e64" stroke="#1d1c19" stroke-width="1" stroke-linejoin="round" />
<path d="M930.7 626.5L951.1 636.3" stroke="#2b2a25" stroke-width="4.4"/>
<path d="M931.5 626.8L950.3 636.0" stroke="#d3cfc3" stroke-width="2.6" stroke-dasharray="1.4,0.35"/>
<polygon points="980.0,628.0 982.4,626.5 985.4,626.1 988.4,626.8 1018.8,641.0 1020.9,642.7 1021.6,645.0 1020.6,647.1 1000.0,670.0 997.6,671.5 994.5,672.0 991.5,671.2 960.9,656.6 958.8,654.8 958.2,652.6 959.2,650.4" fill="#3d3c37" stroke="#1d1c19" stroke-width="1" stroke-linejoin="round" />
<polygon points="1019.0,645.3 1018.3,646.9 998.5,668.9 996.7,670.0 994.4,670.4 992.2,669.8 962.7,655.7 961.2,654.4 960.7,652.8 962.5,648.8 963.5,646.6 980.9,627.9 983.2,626.4 986.3,626.0 989.3,626.7 1014.5,638.6 1016.7,640.3 1018.5,643.7" fill="#474540" stroke="#1d1c19" stroke-width="1" stroke-linejoin="round" />
<polygon points="1017.4,643.5 1018.5,646.8 997.8,669.7 997.6,665.4" fill="#5a5750" stroke="none" stroke-width="1" stroke-linejoin="round" />
<polygon points="980.9,627.9 983.2,626.4 986.3,626.0 989.3,626.7 1014.5,638.6 1016.7,640.3 1017.4,642.5 1016.4,644.7 999.2,663.7 996.8,665.2 993.7,665.6 990.7,664.9 965.2,652.7 963.1,651.0 962.5,648.8 963.5,646.6" fill="#726e64" stroke="#1d1c19" stroke-width="1" stroke-linejoin="round" />
<path d="M973.3 646.9L994.1 656.8" stroke="#2b2a25" stroke-width="4.4"/>
<path d="M974.1 647.2L993.3 656.5" stroke="#d3cfc3" stroke-width="2.6" stroke-dasharray="1.4,0.35"/>
<polygon points="1023.1,648.3 1025.4,646.8 1028.5,646.3 1031.5,647.0 1062.4,661.6 1064.6,663.3 1065.3,665.6 1064.4,667.8 1044.0,691.0 1041.7,692.6 1038.5,693.1 1035.4,692.3 1004.3,677.4 1002.2,675.6 1001.5,673.3 1002.5,671.1" fill="#3d3c37" stroke="#1d1c19" stroke-width="1" stroke-linejoin="round" />
<polygon points="1062.8,666.0 1062.1,667.6 1042.5,690.0 1040.7,691.1 1038.4,691.4 1036.2,690.9 1006.1,676.5 1004.5,675.2 1004.0,673.5 1004.8,671.9 1006.9,667.3 1024.0,648.3 1026.4,646.8 1029.5,646.3 1032.5,647.0 1058.2,659.1 1060.4,660.9 1062.2,664.3" fill="#474540" stroke="#1d1c19" stroke-width="1" stroke-linejoin="round" />
<polygon points="1061.2,664.2 1062.2,667.4 1041.8,690.8 1041.6,686.5" fill="#5a5750" stroke="none" stroke-width="1" stroke-linejoin="round" />
<polygon points="1024.0,648.3 1026.4,646.8 1029.5,646.3 1032.5,647.0 1058.2,659.1 1060.4,660.9 1061.1,663.1 1060.2,665.3 1043.2,684.7 1040.9,686.2 1037.7,686.7 1034.6,685.9 1008.8,673.6 1006.6,671.8 1005.9,669.5 1006.9,667.3" fill="#726e64" stroke="#1d1c19" stroke-width="1" stroke-linejoin="round" />
<path d="M1016.8 667.6L1037.9 677.6" stroke="#2b2a25" stroke-width="4.4"/>
<path d="M1017.6 667.9L1037.1 677.3" stroke="#d3cfc3" stroke-width="2.6" stroke-dasharray="1.4,0.35"/>
<polygon points="1066.9,668.9 1069.2,667.4 1072.3,667.0 1075.4,667.7 1106.9,682.5 1109.1,684.3 1109.9,686.6 1109.0,688.8 1088.9,712.5 1086.5,714.1 1083.4,714.6 1080.2,713.8 1048.5,698.6 1046.3,696.8 1045.6,694.5 1046.5,692.2" fill="#3d3c37" stroke="#1d1c19" stroke-width="1" stroke-linejoin="round" />
<polygon points="1107.3,686.9 1106.6,688.6 1087.3,711.4 1085.5,712.5 1083.2,712.9 1080.9,712.3 1050.3,697.7 1048.7,696.4 1048.2,694.7 1048.9,693.0 1051.1,688.4 1068.0,669.0 1070.3,667.5 1073.4,667.0 1076.5,667.7 1102.7,680.1 1104.9,681.8 1106.7,685.3" fill="#474540" stroke="#1d1c19" stroke-width="1" stroke-linejoin="round" />
<polygon points="1105.8,685.2 1106.7,688.4 1086.6,712.2 1086.5,707.9" fill="#5a5750" stroke="none" stroke-width="1" stroke-linejoin="round" />
<polygon points="1068.0,669.0 1070.3,667.5 1073.4,667.0 1076.5,667.7 1102.7,680.1 1104.9,681.8 1105.7,684.1 1104.8,686.4 1088.1,706.1 1085.7,707.6 1082.5,708.1 1079.4,707.3 1053.0,694.7 1050.8,693.0 1050.1,690.6 1051.1,688.4" fill="#726e64" stroke="#1d1c19" stroke-width="1" stroke-linejoin="round" />
<path d="M1061.1 688.7L1082.6 698.9" stroke="#2b2a25" stroke-width="4.4"/>
<path d="M1061.9 689.0L1081.8 698.6" stroke="#d3cfc3" stroke-width="2.6" stroke-dasharray="1.4,0.35"/>
<polygon points="1111.5,690.0 1113.8,688.4 1117.0,688.0 1120.1,688.7 1152.1,703.8 1154.4,705.6 1155.2,707.9 1154.4,710.2 1134.6,734.3 1132.2,736.0 1129.0,736.4 1125.8,735.7 1093.5,720.2 1091.3,718.4 1090.5,716.0 1091.4,713.7" fill="#3d3c37" stroke="#1d1c19" stroke-width="1" stroke-linejoin="round" />
<polygon points="1152.6,708.3 1152.0,710.0 1132.9,733.2 1131.2,734.4 1128.8,734.7 1126.5,734.2 1095.3,719.2 1093.7,717.9 1093.1,716.2 1093.8,714.5 1096.0,709.9 1112.7,690.1 1115.1,688.5 1118.2,688.1 1121.3,688.8 1148.0,701.4 1150.3,703.2 1152.0,706.6" fill="#474540" stroke="#1d1c19" stroke-width="1" stroke-linejoin="round" />
<polygon points="1151.2,706.6 1152.1,709.8 1132.2,734.0 1132.2,729.7" fill="#5a5750" stroke="none" stroke-width="1" stroke-linejoin="round" />
<polygon points="1112.7,690.1 1115.1,688.5 1118.2,688.1 1121.3,688.8 1148.0,701.4 1150.3,703.2 1151.1,705.5 1150.2,707.8 1133.7,727.8 1131.4,729.5 1128.2,729.9 1125.0,729.2 1098.2,716.3 1095.9,714.5 1095.1,712.1 1096.0,709.9" fill="#726e64" stroke="#1d1c19" stroke-width="1" stroke-linejoin="round" />
<path d="M1106.1 710.1L1128.1 720.6" stroke="#2b2a25" stroke-width="4.4"/>
<path d="M1106.9 710.4L1127.3 720.3" stroke="#d3cfc3" stroke-width="2.6" stroke-dasharray="1.4,0.35"/>
<polygon points="1156.9,711.4 1159.3,709.8 1162.4,709.4 1165.6,710.1 1198.2,725.5 1200.5,727.3 1201.4,729.7 1200.6,732.0 1181.1,756.6 1178.7,758.3 1175.5,758.7 1172.3,757.9 1139.4,742.2 1137.1,740.3 1136.3,737.9 1137.1,735.6" fill="#3d3c37" stroke="#1d1c19" stroke-width="1" stroke-linejoin="round" />
<polygon points="1198.8,730.1 1198.2,731.8 1179.4,755.4 1177.6,756.6 1175.3,757.0 1172.9,756.4 1141.2,741.2 1139.5,739.9 1138.9,738.1 1139.5,736.4 1141.8,731.7 1158.3,711.6 1160.6,710.0 1163.8,709.5 1167.0,710.3 1194.1,723.1 1196.4,724.9 1198.1,728.3" fill="#474540" stroke="#1d1c19" stroke-width="1" stroke-linejoin="round" />
<polygon points="1197.5,728.4 1198.3,731.6 1178.7,756.3 1178.7,752.0" fill="#5a5750" stroke="none" stroke-width="1" stroke-linejoin="round" />
<polygon points="1158.3,711.6 1160.6,710.0 1163.8,709.5 1167.0,710.3 1194.1,723.1 1196.4,724.9 1197.3,727.3 1196.5,729.6 1180.2,750.0 1177.9,751.7 1174.7,752.2 1171.5,751.4 1144.1,738.3 1141.8,736.5 1141.0,734.0 1141.8,731.7" fill="#726e64" stroke="#1d1c19" stroke-width="1" stroke-linejoin="round" />
<path d="M1152.0 732.0L1174.4 742.6" stroke="#2b2a25" stroke-width="4.4"/>
<path d="M1152.8 732.3L1173.6 742.3" stroke="#d3cfc3" stroke-width="2.6" stroke-dasharray="1.4,0.35"/>
<polygon points="1203.2,733.2 1205.5,731.6 1208.7,731.1 1211.9,731.9 1245.1,747.6 1247.5,749.4 1248.5,751.9 1247.7,754.2 1228.5,779.3 1226.2,781.0 1222.9,781.5 1219.7,780.7 1186.1,764.6 1183.8,762.7 1182.9,760.2 1183.7,757.9" fill="#3d3c37" stroke="#1d1c19" stroke-width="1" stroke-linejoin="round" />
<polygon points="1245.8,752.3 1245.2,754.0 1226.7,778.1 1225.0,779.3 1222.6,779.7 1220.3,779.1 1187.9,763.6 1186.2,762.2 1185.5,760.4 1186.1,758.7 1188.5,754.0 1204.7,733.5 1207.1,731.9 1210.2,731.4 1213.4,732.2 1241.1,745.2 1243.5,747.0 1245.1,750.5" fill="#474540" stroke="#1d1c19" stroke-width="1" stroke-linejoin="round" />
<polygon points="1244.6,750.6 1245.4,753.8 1226.1,779.0 1226.1,774.6" fill="#5a5750" stroke="none" stroke-width="1" stroke-linejoin="round" />
<polygon points="1204.7,733.5 1207.1,731.9 1210.2,731.4 1213.4,732.2 1241.1,745.2 1243.5,747.0 1244.4,749.5 1243.7,751.8 1227.6,772.7 1225.3,774.3 1222.1,774.8 1218.8,774.0 1190.9,760.7 1188.6,758.8 1187.7,756.4 1188.5,754.0" fill="#726e64" stroke="#1d1c19" stroke-width="1" stroke-linejoin="round" />
<path d="M1198.8 754.3L1221.6 765.1" stroke="#2b2a25" stroke-width="4.4"/>
<path d="M1199.6 754.6L1220.8 764.8" stroke="#d3cfc3" stroke-width="2.6" stroke-dasharray="1.4,0.35"/>
<polygon points="1267.8,711.9 1336.5,743.5 1286.0,812.4 1228.0,784.7 1254.9,749.5 1243.1,744.0" fill="#3d3c37" stroke="#1d1c19" stroke-width="1" stroke-linejoin="round" />
<polygon points="1268.7,714.6 1333.2,744.4 1284.9,810.1 1231.3,784.4 1258.1,749.3 1246.3,743.7" fill="#474540" stroke="#1d1c19" stroke-width="1" stroke-linejoin="round" />
<polygon points="1330.5,743.9 1331.2,747.1 1286.5,807.9 1286.7,803.5" fill="#5a5750" stroke="none" stroke-width="1" stroke-linejoin="round" />
<polygon points="1232.9,780.8 1285.1,805.7 1284.9,810.1 1231.3,784.4" fill="#474540" stroke="#1d1c19" stroke-width="1" stroke-linejoin="round" />
<polygon points="1247.9,740.1 1251.4,741.7 1251.3,746.1 1246.3,743.7" fill="#474540" stroke="#1d1c19" stroke-width="1" stroke-linejoin="round" />
<polygon points="1269.5,712.1 1332.6,741.1 1285.1,805.7 1232.9,780.8 1259.8,745.7 1247.9,740.1" fill="#726e64" stroke="#1d1c19" stroke-width="1" stroke-linejoin="round" />
<path d="M1247.4 777.4L1281.8 793.8" stroke="#2b2a25" stroke-width="4.4"/>
<path d="M1248.2 777.7L1281.0 793.5" stroke="#d3cfc3" stroke-width="2.6" stroke-dasharray="1.4,0.35"/>
<polygon points="639.2,509.7 641.7,508.4 644.7,508.0 647.4,508.6 722.2,544.6 724.0,546.1 724.4,548.2 723.2,550.1 700.6,571.1 698.2,572.5 695.1,572.9 692.3,572.2 617.0,535.4 615.3,533.9 615.0,531.8 616.3,529.9" fill="#3d3c37" stroke="#1d1c19" stroke-width="1" stroke-linejoin="round" />
<polygon points="722.0,548.5 721.1,550.0 699.4,570.1 697.6,571.2 695.3,571.5 693.3,571.0 619.0,534.6 617.7,533.5 617.5,532.0 618.8,528.1 620.1,526.2 639.2,509.4 641.6,508.0 644.6,507.6 647.3,508.3 717.7,542.0 719.5,543.6 721.7,547.0" fill="#474540" stroke="#1d1c19" stroke-width="1" stroke-linejoin="round" />
<polygon points="719.8,546.6 721.3,549.8 698.6,570.9 698.1,566.7" fill="#5a5750" stroke="none" stroke-width="1" stroke-linejoin="round" />
<polygon points="639.2,509.4 641.6,508.0 644.6,507.6 647.3,508.3 717.7,542.0 719.5,543.6 719.9,545.6 718.7,547.6 699.9,565.0 697.4,566.4 694.3,566.8 691.5,566.2 620.8,531.7 619.1,530.1 618.8,528.1 620.1,526.2" fill="#726e64" stroke="#1d1c19" stroke-width="1" stroke-linejoin="round" />
<path d="M629.3 526.4L695.8 558.7" stroke="#2b2a25" stroke-width="4.4"/>
<path d="M630.1 526.7L695.0 558.4" stroke="#d3cfc3" stroke-width="2.6" stroke-dasharray="1.4,0.35"/>
<polygon points="725.4,551.2 727.8,549.8 730.8,549.4 733.6,550.1 761.4,563.4 763.3,565.0 763.7,567.0 762.5,569.1 740.2,590.4 737.7,591.8 734.6,592.2 731.8,591.5 703.8,577.9 702.0,576.3 701.6,574.2 702.8,572.2" fill="#3d3c37" stroke="#1d1c19" stroke-width="1" stroke-linejoin="round" />
<polygon points="761.3,567.4 760.4,568.9 738.8,589.4 737.0,590.4 734.8,590.8 732.7,590.2 705.7,577.1 704.4,575.9 704.1,574.4 705.6,570.4 706.8,568.4 725.6,550.9 728.0,549.5 731.0,549.1 733.8,549.8 756.9,560.9 758.8,562.5 761.0,565.9" fill="#474540" stroke="#1d1c19" stroke-width="1" stroke-linejoin="round" />
<polygon points="759.1,565.5 760.6,568.8 738.1,590.1 737.6,585.9" fill="#5a5750" stroke="none" stroke-width="1" stroke-linejoin="round" />
<polygon points="725.6,550.9 728.0,549.5 731.0,549.1 733.8,549.8 756.9,560.9 758.8,562.5 759.2,564.5 758.0,566.6 739.4,584.3 736.9,585.7 733.8,586.1 731.0,585.4 707.8,574.1 705.9,572.5 705.6,570.4 706.8,568.4" fill="#726e64" stroke="#1d1c19" stroke-width="1" stroke-linejoin="round" />
<path d="M716.2 568.6L735.2 577.8" stroke="#2b2a25" stroke-width="4.4"/>
<path d="M717.0 568.9L734.4 577.5" stroke="#d3cfc3" stroke-width="2.6" stroke-dasharray="1.4,0.35"/>
<polygon points="764.8,570.1 767.2,568.7 770.2,568.3 773.1,569.0 801.3,582.5 803.2,584.2 803.7,586.3 802.6,588.3 780.4,610.0 777.9,611.5 774.8,611.9 771.9,611.2 743.5,597.3 741.6,595.6 741.2,593.5 742.4,591.5" fill="#3d3c37" stroke="#1d1c19" stroke-width="1" stroke-linejoin="round" />
<polygon points="801.2,586.6 800.4,588.1 779.0,609.0 777.2,610.1 774.9,610.4 772.8,609.9 745.4,596.5 744.0,595.3 743.7,593.7 745.2,589.7 746.4,587.7 765.0,569.9 767.5,568.5 770.5,568.1 773.4,568.8 796.8,580.1 798.8,581.7 800.9,585.1" fill="#474540" stroke="#1d1c19" stroke-width="1" stroke-linejoin="round" />
<polygon points="799.2,584.8 800.5,588.0 778.2,609.8 777.8,605.5" fill="#5a5750" stroke="none" stroke-width="1" stroke-linejoin="round" />
<polygon points="765.0,569.9 767.5,568.5 770.5,568.1 773.4,568.8 796.8,580.1 798.8,581.7 799.2,583.8 798.1,585.8 779.6,603.8 777.1,605.3 774.0,605.7 771.1,605.0 747.5,593.5 745.6,591.9 745.2,589.7 746.4,587.7" fill="#726e64" stroke="#1d1c19" stroke-width="1" stroke-linejoin="round" />
<path d="M755.9 587.9L775.3 597.3" stroke="#2b2a25" stroke-width="4.4"/>
<path d="M756.7 588.2L774.5 597.0" stroke="#d3cfc3" stroke-width="2.6" stroke-dasharray="1.4,0.35"/>
<polygon points="804.8,589.4 807.2,588.0 810.3,587.5 813.2,588.2 841.9,602.0 843.9,603.7 844.4,605.8 843.3,607.9 821.3,630.0 818.8,631.5 815.7,631.9 812.8,631.2 783.8,617.0 781.9,615.4 781.5,613.2 782.6,611.1" fill="#3d3c37" stroke="#1d1c19" stroke-width="1" stroke-linejoin="round" />
<polygon points="841.9,606.2 841.1,607.7 819.9,629.0 818.1,630.0 815.8,630.4 813.7,629.8 785.8,616.2 784.3,615.0 784.0,613.4 785.6,609.4 786.7,607.3 805.2,589.2 807.6,587.8 810.7,587.4 813.6,588.1 837.5,599.6 839.4,601.2 841.5,604.6" fill="#474540" stroke="#1d1c19" stroke-width="1" stroke-linejoin="round" />
<polygon points="839.9,604.3 841.2,607.6 819.1,629.7 818.8,625.5" fill="#5a5750" stroke="none" stroke-width="1" stroke-linejoin="round" />
<polygon points="805.2,589.2 807.6,587.8 810.7,587.4 813.6,588.1 837.5,599.6 839.4,601.2 839.9,603.3 838.8,605.4 820.5,623.8 818.0,625.2 814.9,625.7 812.0,625.0 788.0,613.2 786.0,611.6 785.6,609.4 786.7,607.3" fill="#726e64" stroke="#1d1c19" stroke-width="1" stroke-linejoin="round" />
<path d="M796.4 607.6L816.0 617.1" stroke="#2b2a25" stroke-width="4.4"/>
<path d="M797.2 607.9L815.2 616.8" stroke="#d3cfc3" stroke-width="2.6" stroke-dasharray="1.4,0.35"/>
<polygon points="845.6,609.0 848.0,607.6 851.1,607.1 854.0,607.8 883.2,621.9 885.3,623.5 885.8,625.7 884.7,627.8 862.9,650.3 860.5,651.8 857.4,652.3 854.4,651.5 824.9,637.1 822.9,635.4 822.5,633.2 823.6,631.1" fill="#3d3c37" stroke="#1d1c19" stroke-width="1" stroke-linejoin="round" />
<polygon points="883.3,626.1 882.5,627.7 861.5,649.3 859.7,650.4 857.4,650.7 855.2,650.2 826.8,636.3 825.4,635.0 825.0,633.4 826.6,629.4 827.8,627.3 846.1,608.9 848.5,607.5 851.6,607.0 854.5,607.7 878.8,619.4 880.8,621.1 882.9,624.5" fill="#474540" stroke="#1d1c19" stroke-width="1" stroke-linejoin="round" />
<polygon points="881.4,624.3 882.6,627.5 860.8,650.1 860.4,645.8" fill="#5a5750" stroke="none" stroke-width="1" stroke-linejoin="round" />
<polygon points="846.1,608.9 848.5,607.5 851.6,607.0 854.5,607.7 878.8,619.4 880.8,621.1 881.4,623.3 880.3,625.4 862.1,644.0 859.7,645.5 856.6,646.0 853.6,645.3 829.1,633.3 827.1,631.6 826.6,629.4 827.8,627.3" fill="#726e64" stroke="#1d1c19" stroke-width="1" stroke-linejoin="round" />
<path d="M837.5 627.5L857.5 637.3" stroke="#2b2a25" stroke-width="4.4"/>
<path d="M838.3 627.8L856.7 637.0" stroke="#d3cfc3" stroke-width="2.6" stroke-dasharray="1.4,0.35"/>
<polygon points="887.1,629.0 889.5,627.5 892.6,627.1 895.5,627.8 925.3,642.1 927.4,643.8 928.0,646.0 926.9,648.1 905.4,671.0 902.9,672.6 899.8,673.0 896.7,672.3 866.8,657.6 864.7,655.9 864.2,653.6 865.3,651.5" fill="#3d3c37" stroke="#1d1c19" stroke-width="1" stroke-linejoin="round" />
<polygon points="925.4,646.4 924.7,647.9 903.9,670.0 902.1,671.1 899.8,671.4 897.6,670.9 868.6,656.7 867.2,655.5 866.8,653.8 868.4,649.8 869.5,647.7 887.7,628.9 890.1,627.4 893.2,627.0 896.2,627.7 920.9,639.6 923.0,641.3 925.0,644.7" fill="#474540" stroke="#1d1c19" stroke-width="1" stroke-linejoin="round" />
<polygon points="923.6,644.6 924.8,647.8 903.1,670.8 902.9,666.5" fill="#5a5750" stroke="none" stroke-width="1" stroke-linejoin="round" />
<polygon points="887.7,628.9 890.1,627.4 893.2,627.0 896.2,627.7 920.9,639.6 923.0,641.3 923.6,643.5 922.5,645.7 904.5,664.7 902.1,666.2 898.9,666.7 895.9,665.9 871.0,653.8 869.0,652.1 868.4,649.8 869.5,647.7" fill="#726e64" stroke="#1d1c19" stroke-width="1" stroke-linejoin="round" />
<path d="M879.4 647.9L899.7 657.8" stroke="#2b2a25" stroke-width="4.4"/>
<path d="M880.2 648.2L898.9 657.5" stroke="#d3cfc3" stroke-width="2.6" stroke-dasharray="1.4,0.35"/>
<polygon points="929.3,649.3 931.7,647.8 934.8,647.3 937.8,648.1 968.1,662.6 970.2,664.4 970.9,666.6 969.9,668.8 948.5,692.1 946.1,693.7 942.9,694.1 939.9,693.4 909.3,678.4 907.3,676.7 906.7,674.4 907.7,672.2" fill="#3d3c37" stroke="#1d1c19" stroke-width="1" stroke-linejoin="round" />
<polygon points="968.3,667.0 967.6,668.6 947.0,691.0 945.2,692.2 942.9,692.5 940.7,691.9 911.2,677.5 909.7,676.3 909.3,674.6 911.0,670.6 912.1,668.4 930.0,649.3 932.4,647.8 935.5,647.3 938.6,648.1 963.8,660.2 965.9,661.9 967.8,665.3" fill="#474540" stroke="#1d1c19" stroke-width="1" stroke-linejoin="round" />
<polygon points="966.5,665.2 967.7,668.5 946.3,691.8 946.0,687.5" fill="#5a5750" stroke="none" stroke-width="1" stroke-linejoin="round" />
<polygon points="930.0,649.3 932.4,647.8 935.5,647.3 938.6,648.1 963.8,660.2 965.9,661.9 966.5,664.2 965.5,666.4 947.7,685.7 945.3,687.3 942.1,687.7 939.1,687.0 913.7,674.6 911.6,672.8 911.0,670.6 912.1,668.4" fill="#726e64" stroke="#1d1c19" stroke-width="1" stroke-linejoin="round" />
<path d="M922.0 668.6L942.7 678.7" stroke="#2b2a25" stroke-width="4.4"/>
<path d="M922.8 668.9L941.9 678.4" stroke="#d3cfc3" stroke-width="2.6" stroke-dasharray="1.4,0.35"/>
<polygon points="972.3,670.0 974.7,668.4 977.8,668.0 980.9,668.7 1011.7,683.6 1013.9,685.3 1014.6,687.6 1013.6,689.9 992.5,713.6 990.1,715.2 986.9,715.6 983.8,714.9 952.7,699.7 950.6,697.9 949.9,695.5 951.0,693.3" fill="#3d3c37" stroke="#1d1c19" stroke-width="1" stroke-linejoin="round" />
<polygon points="1012.0,688.0 1011.3,689.6 991.0,712.5 989.2,713.6 986.8,714.0 984.6,713.4 954.6,698.7 953.0,697.4 952.5,695.7 954.4,691.7 955.4,689.5 973.1,670.0 975.5,668.5 978.7,668.0 981.7,668.8 1007.4,681.1 1009.6,682.9 1011.5,686.3" fill="#474540" stroke="#1d1c19" stroke-width="1" stroke-linejoin="round" />
<polygon points="1010.3,686.3 1011.4,689.5 990.2,713.3 990.0,709.0" fill="#5a5750" stroke="none" stroke-width="1" stroke-linejoin="round" />
<polygon points="973.1,670.0 975.5,668.5 978.7,668.0 981.7,668.8 1007.4,681.1 1009.6,682.9 1010.2,685.2 1009.3,687.4 991.7,707.1 989.3,708.7 986.1,709.2 983.0,708.4 957.1,695.8 955.0,694.0 954.4,691.7 955.4,689.5" fill="#726e64" stroke="#1d1c19" stroke-width="1" stroke-linejoin="round" />
<path d="M965.4 689.7L986.5 700.0" stroke="#2b2a25" stroke-width="4.4"/>
<path d="M966.2 690.0L985.7 699.7" stroke="#d3cfc3" stroke-width="2.6" stroke-dasharray="1.4,0.35"/>
<polygon points="1016.1,691.0 1018.5,689.5 1021.6,689.0 1024.7,689.8 1056.1,704.9 1058.3,706.7 1059.1,709.0 1058.1,711.3 1037.3,735.4 1034.9,737.1 1031.7,737.6 1028.5,736.8 996.9,721.3 994.7,719.4 994.0,717.1 995.0,714.8" fill="#3d3c37" stroke="#1d1c19" stroke-width="1" stroke-linejoin="round" />
<polygon points="1056.5,709.4 1055.8,711.1 1035.7,734.3 1033.9,735.5 1031.6,735.8 1029.3,735.3 998.7,720.3 997.1,719.0 996.6,717.3 997.3,715.6 999.5,710.9 1017.0,691.2 1019.4,689.6 1022.6,689.1 1025.7,689.9 1051.8,702.4 1054.0,704.2 1055.9,707.7" fill="#474540" stroke="#1d1c19" stroke-width="1" stroke-linejoin="round" />
<polygon points="1054.8,707.7 1055.9,710.9 1035.0,735.1 1034.8,730.8" fill="#5a5750" stroke="none" stroke-width="1" stroke-linejoin="round" />
<polygon points="1017.0,691.2 1019.4,689.6 1022.6,689.1 1025.7,689.9 1051.8,702.4 1054.0,704.2 1054.8,706.6 1053.8,708.9 1036.5,728.9 1034.1,730.6 1030.8,731.0 1027.7,730.3 1001.4,717.4 999.2,715.6 998.5,713.2 999.5,710.9" fill="#726e64" stroke="#1d1c19" stroke-width="1" stroke-linejoin="round" />
<path d="M1009.6 711.2L1031.1 721.7" stroke="#2b2a25" stroke-width="4.4"/>
<path d="M1010.4 711.5L1030.3 721.4" stroke="#d3cfc3" stroke-width="2.6" stroke-dasharray="1.4,0.35"/>
<polygon points="1060.6,712.5 1063.0,710.9 1066.2,710.4 1069.3,711.2 1101.3,726.6 1103.6,728.4 1104.4,730.8 1103.5,733.1 1083.0,757.7 1080.5,759.4 1077.3,759.9 1074.1,759.1 1041.8,743.3 1039.6,741.4 1038.9,739.0 1039.8,736.7" fill="#3d3c37" stroke="#1d1c19" stroke-width="1" stroke-linejoin="round" />
<polygon points="1101.8,731.2 1101.1,732.9 1081.3,756.6 1079.5,757.8 1077.2,758.1 1074.8,757.5 1043.7,742.3 1042.0,741.0 1041.5,739.2 1042.2,737.5 1044.4,732.8 1061.8,712.7 1064.1,711.1 1067.3,710.6 1070.5,711.4 1097.1,724.2 1099.4,726.0 1101.2,729.4" fill="#474540" stroke="#1d1c19" stroke-width="1" stroke-linejoin="round" />
<polygon points="1100.2,729.5 1101.2,732.7 1080.6,757.4 1080.5,753.1" fill="#5a5750" stroke="none" stroke-width="1" stroke-linejoin="round" />
<polygon points="1061.8,712.7 1064.1,711.1 1067.3,710.6 1070.5,711.4 1097.1,724.2 1099.4,726.0 1100.1,728.4 1099.2,730.7 1082.1,751.2 1079.7,752.8 1076.5,753.3 1073.3,752.5 1046.5,739.4 1044.2,737.6 1043.5,735.1 1044.4,732.8" fill="#726e64" stroke="#1d1c19" stroke-width="1" stroke-linejoin="round" />
<path d="M1054.6 733.1L1076.6 743.7" stroke="#2b2a25" stroke-width="4.4"/>
<path d="M1055.4 733.4L1075.8 743.4" stroke="#d3cfc3" stroke-width="2.6" stroke-dasharray="1.4,0.35"/>
<polygon points="1106.1,734.3 1108.4,732.7 1111.6,732.2 1114.8,733.0 1147.4,748.7 1149.7,750.6 1150.6,753.0 1149.7,755.3 1129.5,780.4 1127.1,782.1 1123.8,782.6 1120.6,781.8 1087.7,765.7 1085.4,763.8 1084.6,761.4 1085.5,759.0" fill="#3d3c37" stroke="#1d1c19" stroke-width="1" stroke-linejoin="round" />
<polygon points="1147.9,753.4 1147.3,755.1 1127.7,779.2 1126.0,780.5 1123.6,780.8 1121.2,780.2 1089.5,764.7 1087.8,763.3 1087.2,761.5 1087.9,759.8 1090.2,755.1 1107.3,734.6 1109.7,733.0 1112.9,732.5 1116.1,733.3 1143.2,746.3 1145.5,748.2 1147.3,751.6" fill="#474540" stroke="#1d1c19" stroke-width="1" stroke-linejoin="round" />
<polygon points="1146.5,751.7 1147.4,754.9 1127.0,780.1 1127.0,775.8" fill="#5a5750" stroke="none" stroke-width="1" stroke-linejoin="round" />
<polygon points="1107.3,734.6 1109.7,733.0 1112.9,732.5 1116.1,733.3 1143.2,746.3 1145.5,748.2 1146.4,750.6 1145.5,753.0 1128.6,773.8 1126.2,775.5 1122.9,776.0 1119.7,775.2 1092.4,761.8 1090.1,759.9 1089.3,757.5 1090.2,755.1" fill="#726e64" stroke="#1d1c19" stroke-width="1" stroke-linejoin="round" />
<path d="M1100.5 755.4L1122.9 766.2" stroke="#2b2a25" stroke-width="4.4"/>
<path d="M1101.3 755.7L1122.1 765.9" stroke="#d3cfc3" stroke-width="2.6" stroke-dasharray="1.4,0.35"/>
<polygon points="1152.3,756.6 1154.7,755.0 1157.9,754.5 1161.1,755.3 1194.3,771.2 1196.7,773.1 1197.6,775.6 1196.8,778.0 1176.8,803.6 1174.5,805.3 1171.2,805.8 1167.9,805.0 1134.4,788.6 1132.0,786.6 1131.2,784.1 1132.1,781.7" fill="#3d3c37" stroke="#1d1c19" stroke-width="1" stroke-linejoin="round" />
<polygon points="1194.9,776.0 1194.3,777.8 1175.1,802.3 1173.3,803.6 1170.9,804.0 1168.5,803.4 1136.2,787.6 1134.5,786.1 1133.9,784.3 1134.5,782.5 1136.9,777.8 1153.7,756.9 1156.1,755.3 1159.3,754.8 1162.5,755.6 1190.2,768.8 1192.6,770.7 1194.3,774.2" fill="#474540" stroke="#1d1c19" stroke-width="1" stroke-linejoin="round" />
<polygon points="1193.6,774.4 1194.4,777.6 1174.4,803.2 1174.4,798.9" fill="#5a5750" stroke="none" stroke-width="1" stroke-linejoin="round" />
<polygon points="1153.7,756.9 1156.1,755.3 1159.3,754.8 1162.5,755.6 1190.2,768.8 1192.6,770.7 1193.4,773.2 1192.6,775.6 1176.0,796.9 1173.6,798.6 1170.3,799.1 1167.0,798.3 1139.2,784.7 1136.8,782.7 1136.0,780.2 1136.9,777.8" fill="#726e64" stroke="#1d1c19" stroke-width="1" stroke-linejoin="round" />
<path d="M1147.3 778.1L1170.0 789.2" stroke="#2b2a25" stroke-width="4.4"/>
<path d="M1148.1 778.4L1169.2 788.9" stroke="#d3cfc3" stroke-width="2.6" stroke-dasharray="1.4,0.35"/>
<polygon points="1199.5,779.3 1201.8,777.6 1205.0,777.1 1208.3,777.9 1278.6,811.7 1281.1,813.7 1282.1,816.2 1281.4,818.7 1262.0,845.1 1259.6,846.9 1256.3,847.4 1252.9,846.6 1182.0,811.9 1179.6,809.9 1178.7,807.3 1179.5,804.9" fill="#3d3c37" stroke="#1d1c19" stroke-width="1" stroke-linejoin="round" />
<polygon points="1279.4,816.6 1278.8,818.4 1260.1,843.9 1258.4,845.2 1256.0,845.6 1253.5,844.9 1183.8,810.8 1182.0,809.4 1181.3,807.5 1182.0,805.7 1184.4,801.0 1201.0,779.7 1203.4,778.0 1206.6,777.5 1209.9,778.3 1274.5,809.3 1277.0,811.3 1278.6,814.7" fill="#474540" stroke="#1d1c19" stroke-width="1" stroke-linejoin="round" />
<polygon points="1278.2,815.1 1278.9,818.3 1259.5,844.8 1259.6,840.4" fill="#5a5750" stroke="none" stroke-width="1" stroke-linejoin="round" />
<polygon points="1201.0,779.7 1203.4,778.0 1206.6,777.5 1209.9,778.3 1274.5,809.3 1277.0,811.3 1278.0,813.9 1277.3,816.4 1261.1,838.3 1258.7,840.1 1255.4,840.6 1252.1,839.8 1186.9,808.0 1184.5,806.0 1183.6,803.4 1184.4,801.0" fill="#726e64" stroke="#1d1c19" stroke-width="1" stroke-linejoin="round" />
<path d="M1194.9 801.3L1254.8 830.4" stroke="#2b2a25" stroke-width="4.4"/>
<path d="M1195.7 801.6L1254.0 830.1" stroke="#d3cfc3" stroke-width="2.6" stroke-dasharray="1.4,0.35"/>
<polygon points="607.0,538.1 609.4,536.7 612.5,536.3 615.2,537.0 690.5,573.9 692.3,575.5 692.7,577.6 691.5,579.6 668.3,601.1 665.7,602.6 662.6,603.0 659.8,602.3 584.1,564.5 582.3,562.9 582.1,560.8 583.4,558.8" fill="#3d3c37" stroke="#1d1c19" stroke-width="1" stroke-linejoin="round" />
<polygon points="690.2,577.9 689.3,579.4 667.0,600.1 665.1,601.2 662.9,601.5 660.8,601.0 586.1,563.7 584.8,562.5 584.6,561.0 585.9,557.1 587.2,555.1 606.8,537.8 609.3,536.5 612.3,536.1 615.1,536.7 685.9,571.4 687.7,573.0 690.0,576.4" fill="#474540" stroke="#1d1c19" stroke-width="1" stroke-linejoin="round" />
<polygon points="687.9,576.1 689.5,579.3 666.2,600.9 665.7,596.7" fill="#5a5750" stroke="none" stroke-width="1" stroke-linejoin="round" />
<polygon points="606.8,537.8 609.3,536.5 612.3,536.1 615.1,536.7 685.9,571.4 687.7,573.0 688.0,575.1 686.8,577.1 667.5,595.0 665.0,596.4 661.9,596.9 659.0,596.2 587.9,560.7 586.1,559.1 585.9,557.1 587.2,555.1" fill="#726e64" stroke="#1d1c19" stroke-width="1" stroke-linejoin="round" />
<path d="M596.6 555.3L663.5 588.5" stroke="#2b2a25" stroke-width="4.4"/>
<path d="M597.4 555.6L662.7 588.2" stroke="#d3cfc3" stroke-width="2.6" stroke-dasharray="1.4,0.35"/>
<polygon points="693.7,580.7 696.1,579.3 699.2,578.8 702.0,579.5 730.0,593.2 731.9,594.9 732.2,597.0 731.0,599.0 708.0,620.9 705.5,622.4 702.4,622.9 699.5,622.1 671.4,608.1 669.5,606.4 669.2,604.3 670.5,602.2" fill="#3d3c37" stroke="#1d1c19" stroke-width="1" stroke-linejoin="round" />
<polygon points="729.8,597.4 728.9,598.9 706.7,619.9 704.9,621.0 702.6,621.3 700.5,620.8 673.3,607.3 672.0,606.1 671.7,604.5 673.2,600.5 674.4,598.4 693.7,580.5 696.2,579.1 699.3,578.7 702.1,579.4 725.4,590.7 727.2,592.4 729.5,595.8" fill="#474540" stroke="#1d1c19" stroke-width="1" stroke-linejoin="round" />
<polygon points="727.5,595.5 729.0,598.7 705.9,620.7 705.4,616.5" fill="#5a5750" stroke="none" stroke-width="1" stroke-linejoin="round" />
<polygon points="693.7,580.5 696.2,579.1 699.3,578.7 702.1,579.4 725.4,590.7 727.2,592.4 727.6,594.5 726.4,596.6 707.2,614.8 704.7,616.2 701.6,616.7 698.7,615.9 675.4,604.3 673.5,602.7 673.2,600.5 674.4,598.4" fill="#726e64" stroke="#1d1c19" stroke-width="1" stroke-linejoin="round" />
<path d="M684.0 598.7L703.1 608.2" stroke="#2b2a25" stroke-width="4.4"/>
<path d="M684.8 599.0L702.3 607.9" stroke="#d3cfc3" stroke-width="2.6" stroke-dasharray="1.4,0.35"/>
<polygon points="733.3,600.1 735.8,598.7 738.8,598.3 741.7,599.0 1142.5,795.3 1144.9,797.3 1145.7,799.8 1144.9,802.3 1124.1,828.3 1121.7,830.1 1118.4,830.6 1115.1,829.8 711.3,628.0 709.4,626.4 709.0,624.2 710.3,622.1" fill="#3d3c37" stroke="#1d1c19" stroke-width="1" stroke-linejoin="round" />
<polygon points="1143.0,800.2 1142.4,802.0 1122.4,827.1 1120.6,828.4 1118.2,828.8 1115.8,828.1 713.3,627.2 711.9,626.0 711.6,624.4 713.1,620.4 714.3,618.3 733.5,600.0 735.9,598.6 739.0,598.1 741.9,598.8 1138.2,793.0 1140.6,794.9 1142.4,798.3" fill="#474540" stroke="#1d1c19" stroke-width="1" stroke-linejoin="round" />
<polygon points="1141.5,798.6 1142.5,801.8 1121.7,828.0 1121.7,823.6" fill="#5a5750" stroke="none" stroke-width="1" stroke-linejoin="round" />
<polygon points="733.5,600.0 735.9,598.6 739.0,598.1 741.9,598.8 1138.2,793.0 1140.6,794.9 1141.4,797.4 1140.5,799.9 1123.3,821.6 1120.8,823.3 1117.5,823.8 1114.2,823.0 715.4,624.2 713.5,622.6 713.1,620.4 714.3,618.3" fill="#726e64" stroke="#1d1c19" stroke-width="1" stroke-linejoin="round" />
<polygon points="1147.5,803.6 1149.9,801.9 1153.2,801.3 1156.5,802.2 1251.4,848.7 1253.9,850.7 1254.9,853.4 1254.1,855.9 1234.1,883.2 1231.7,885.0 1228.3,885.5 1224.9,884.7 1129.1,836.8 1126.7,834.8 1125.9,832.2 1126.8,829.7" fill="#3d3c37" stroke="#1d1c19" stroke-width="1" stroke-linejoin="round" />
<polygon points="1252.1,853.7 1251.5,855.6 1232.3,881.8 1230.5,883.2 1228.0,883.6 1225.5,882.9 1131.0,835.7 1129.2,834.3 1128.6,832.4 1129.3,830.5 1131.7,825.8 1148.9,804.0 1151.3,802.3 1154.6,801.8 1157.9,802.6 1247.2,846.4 1249.7,848.4 1251.4,851.8" fill="#474540" stroke="#1d1c19" stroke-width="1" stroke-linejoin="round" />
<polygon points="1250.9,852.3 1251.6,855.5 1231.6,882.8 1231.7,878.4" fill="#5a5750" stroke="none" stroke-width="1" stroke-linejoin="round" />
<polygon points="1148.9,804.0 1151.3,802.3 1154.6,801.8 1157.9,802.6 1247.2,846.4 1249.7,848.4 1250.7,851.0 1249.9,853.6 1233.2,876.2 1230.8,878.1 1227.4,878.6 1224.0,877.7 1134.0,832.9 1131.6,830.9 1130.8,828.3 1131.7,825.8" fill="#726e64" stroke="#1d1c19" stroke-width="1" stroke-linejoin="round" />
<path d="M1142.3 826.1L1226.9 868.0" stroke="#2b2a25" stroke-width="4.4"/>
<path d="M1143.1 826.4L1226.1 867.7" stroke="#d3cfc3" stroke-width="2.6" stroke-dasharray="1.4,0.35"/></g><polygon points="1413.5,655.5 1421.5,658.8 1419.5,665.5 1411.5,662.0" fill="#a8a498" stroke="#1d1c19" stroke-width="0.8"/><circle cx="1426.0" cy="662.5" r="6.3" fill="url(#gball)" stroke="#1d1c19" stroke-width="0.9"/>
<g><ellipse cx="1862" cy="243" rx="32" ry="11" fill="#000" opacity="0.08" filter="url(#blur2)"/><polygon points="1850.2,169.9 1890.6,186.5 1864.1,215.0 1821.0,195.1" fill="#ececec" fill-opacity="0.85"/><polygon points="1821.0,195.1 1864.1,215.0 1863.4,248.8 1825.0,229.6" fill="#e6e6e6" fill-opacity="0.85"/><polygon points="1864.1,215.0 1890.6,186.5 1886.0,221.6 1863.4,248.8" fill="#dedede" fill-opacity="0.85"/><path d="M1850.2 169.9L1890.6 186.5L1864.1 215.0L1821.0 195.1ZM1821.0 195.1L1825.0 229.6L1863.4 248.8L1864.1 215.0M1863.4 248.8L1886.0 221.6L1890.6 186.5" fill="none" stroke="#7d7d7d" stroke-width="0.7" stroke-dasharray="5,2.5"/><text font-family="Liberation Sans,Noto Sans CJK JP,sans-serif" font-size="20" fill="#8a8e94" transform="matrix(0.93,0.42,-0.75,0.62,1856,197.5)" text-anchor="middle">上</text><text font-family="Liberation Sans,Noto Sans CJK JP,sans-serif" font-size="21" fill="#8a8e94" transform="matrix(0.92,0.44,-0.04,1,1844,229.5)" text-anchor="middle">前</text><text font-family="Liberation Sans,Noto Sans CJK JP,sans-serif" font-size="18" fill="#9a9ea4" transform="matrix(0.62,-0.72,-0.02,1,1876.5,225.5)" text-anchor="middle">右</text><path d="M1825 229.6L1818.4 188.5" stroke="#5f66f0" stroke-width="1.6"/><path d="M1825 229.6L1870.1 254.1" stroke="#f08a8a" stroke-width="1.6"/><text x="1817.7" y="187" font-family="Liberation Sans,sans-serif" font-size="12" fill="#6a70f0" text-anchor="middle">Z</text><text x="1876" y="262" font-family="Liberation Sans,sans-serif" font-size="12" fill="#f07070" text-anchor="middle">X</text></g>
</svg>
<div class="titlebar"><div class="titlebar-bg"></div><svg class="a" style="left:3px;top:11px" width="15" height="16" viewBox="0 0 15 16"><defs><linearGradient id="fi" x1="0" y1="0" x2="1" y2="1"><stop offset="0" stop-color="#ff8a1e"/><stop offset="1" stop-color="#e8590c"/></linearGradient></defs><rect x="0.5" y="0" width="14" height="15.5" rx="2.5" fill="url(#fi)"/><rect x="0.5" y="10.5" width="14" height="5" rx="1.5" fill="#a8420f"/><text x="7.3" y="9" font-family="Liberation Sans,sans-serif" font-size="9" font-weight="bold" fill="#fff" text-anchor="middle">F</text><text x="7.4" y="14.6" font-family="Liberation Sans,sans-serif" font-size="4" font-weight="bold" fill="#f3c9a8" text-anchor="middle">360</text></svg><span class="t" style="left:23.5px;top:12.1px;font-size:12px;line-height:17px;height:17px;color:#111;font-weight:normal;transform:scaleX(0.9774);">Autodesk Fusion 360 (個人用 - 商用利用不可)</span><svg class="a" style="left:1790px;top:6.5px" width="120" height="23" viewBox="0 0 120 23"><path d="M9.5 11.5H19.5" stroke="#111" stroke-width="1"/><path d="M54.5 9.5H63.5V18.5H54.5Z M57.5 9.5V6.5H66.5V15.5H63.5" stroke="#111" stroke-width="1" fill="none"/><path d="M100 6L110 16M110 6L100 16" stroke="#111" stroke-width="1.1"/></svg></div>
<div class="tabbar"><div class="tabbar-bg"></div><div class="tabbar-hl"></div><div class="doctab"></div><svg class="a" style="left:9px;top:40px" width="14" height="14"><rect x="0" y="0" width="4" height="4" fill="#666"/><rect x="0" y="5" width="4" height="4" fill="#666"/><rect x="0" y="10" width="4" height="4" fill="#666"/><rect x="5" y="0" width="4" height="4" fill="#666"/><rect x="5" y="5" width="4" height="4" fill="#666"/><rect x="5" y="10" width="4" height="4" fill="#666"/><rect x="10" y="0" width="4" height="4" fill="#666"/><rect x="10" y="5" width="4" height="4" fill="#666"/><rect x="10" y="10" width="4" height="4" fill="#666"/></svg><svg class="a" style="left:42px;top:39px" width="13" height="16" viewBox="0 0 13 16"><path d="M0.5 1.5Q0.5 0.5 1.5 0.5H8L12.5 5V14.5Q12.5 15.5 11.5 15.5H1.5Q0.5 15.5 0.5 14.5Z" fill="#666"/><path d="M8 0.5V5H12.5" fill="#ccc" stroke="#ccc" stroke-width="0.8"/></svg><svg class="a" style="left:61.0px;top:44.5px" width="7" height="4" viewBox="0 0 7 4"><path d="M0 0H7L3.5 4Z" fill="#666"/></svg><svg class="a" style="left:87px;top:40px" width="14" height="14" viewBox="0 0 14 14"><path d="M1 0H12L14 2V13Q14 14 13 14H1Q0 14 0 13V1Q0 0 1 0Z" fill="#9a9a9a"/><rect x="3" y="1.2" width="8" height="4.3" fill="#ccc"/><rect x="8" y="1.8" width="1.8" height="3" fill="#9a9a9a"/><rect x="3" y="8.5" width="8" height="5.5" fill="#ccc"/><rect x="4.5" y="10" width="5" height="4" fill="#9a9a9a"/></svg><svg class="a" style="left:119px;top:41px" width="15" height="13" viewBox="0 0 15 13"><path d="M6 1L1.5 5L6 9" fill="none" stroke="#555" stroke-width="2"/><path d="M2 5H8.5Q13 5 13 9.5V12.5" fill="none" stroke="#555" stroke-width="2"/></svg><svg class="a" style="left:140.5px;top:44.5px" width="7" height="4" viewBox="0 0 7 4"><path d="M0 0H7L3.5 4Z" fill="#666"/></svg><svg class="a" style="left:159px;top:41px" width="15" height="13" viewBox="0 0 15 13"><path d="M9 1L13.5 5L9 9" fill="none" stroke="#9a9a9a" stroke-width="2"/><path d="M13 5H6.5Q2 5 2 9.5V12.5" fill="none" stroke="#9a9a9a" stroke-width="2"/></svg><svg class="a" style="left:179.5px;top:44.5px" width="7" height="4" viewBox="0 0 7 4"><path d="M0 0H7L3.5 4Z" fill="#aaa"/></svg><svg class="a" style="left:895px;top:41px" width="18" height="17" viewBox="0 0 18 17"><path d="M1 3L11 0.5L17 3V12L8 16.5L1 13Z" fill="#555"/><path d="M1 3L8 6.5V16.5L1 13Z" fill="#a9a9a9"/><path d="M1 3L11 0.5L17 3L8 6.5Z" fill="#6d6d6d"/><path d="M8 6.5L17 3V12L8 16.5Z" fill="#4d4d4d"/></svg><span class="t" style="left:916.5px;top:42.0px;font-size:12px;line-height:17px;height:17px;color:#333;font-weight:normal;transform:scaleX(0.9341);">V-8 v29</span><svg class="a" style="left:1655px;top:44px" width="10" height="10" viewBox="0 0 10 10"><path d="M1 1L9 9M9 1L1 9" stroke="#444" stroke-width="1.3"/></svg><div class="plusbtn"></div><svg class="a" style="left:1683px;top:42px" width="13" height="13" viewBox="0 0 13 13"><path d="M6.5 0.5V12.5M0.5 6.5H12.5" stroke="#666" stroke-width="2.2"/></svg><svg class="a" style="left:1714px;top:38px" width="19" height="18" viewBox="0 0 19 18"><path d="M1 1H9L13 5V8L7 14V17H1Z" fill="#5a5a5a"/><path d="M9 1V5H13" fill="#ccc"/><path d="M8.5 17L9.3 13.6L15.5 7.4L18 9.9L11.8 16.1Z" fill="#5a5a5a" stroke="#ccc" stroke-width="0.8"/></svg><span class="t" style="left:1734.6px;top:39.7px;font-size:11px;line-height:15px;height:15px;color:#333;font-weight:normal;transform:scaleX(0.9714);">9/10</span><svg class="a" style="left:1779px;top:38px" width="18" height="18" viewBox="0 0 18 18"><circle cx="9" cy="9" r="8.2" fill="#666"/><circle cx="9" cy="9" r="6.6" fill="none" stroke="#ccc" stroke-width="0.8"/><path d="M8.7 4.5V9.8H13" stroke="#ddd" stroke-width="1.5" fill="none"/></svg><svg class="a" style="left:1813px;top:37px" width="18" height="20" viewBox="0 0 18 20"><path d="M8 2.5Q8 1.5 9 1.5Q10 1.5 10 2.5Q13 4 13 8V12L15.5 15.5H2.5L5 12V8Q5 4 8 2.5Z" fill="#666"/><path d="M6.8 16.8H11.2L9 18.8Z" fill="#666"/><circle cx="13" cy="5" r="3.1" fill="#0a9ee0"/></svg><svg class="a" style="left:1846px;top:38px" width="18" height="18" viewBox="0 0 18 18"><circle cx="9" cy="9" r="8.2" fill="#666"/><text x="9" y="13.6" font-family="Liberation Sans,sans-serif" font-weight="bold" font-size="13" fill="#f2f2f2" text-anchor="middle">?</text></svg><svg class="a" style="left:1883px;top:35px" width="25" height="25" viewBox="0 0 25 25"><defs><linearGradient id="av" x1="0" y1="0" x2="0" y2="1"><stop offset="0" stop-color="#bccbe0"/><stop offset="1" stop-color="#8ea2be"/></linearGradient><clipPath id="avc"><circle cx="12.5" cy="12.5" r="12"/></clipPath></defs><circle cx="12.5" cy="12.5" r="12" fill="url(#av)"/><g clip-path="url(#avc)" fill="#536278"><ellipse cx="12.8" cy="9" rx="5.6" ry="7"/><path d="M9.5 13H16V19H9.5Z"/><path d="M1 25Q3 18.5 12.5 18Q22 18.5 24 25Z"/></g></svg></div>
<div class="toolbar"><div class="toolbar-bg"></div><div class="wsbtn"></div><span class="t" style="left:41.5px;top:95.2px;font-size:11.5px;line-height:16px;height:16px;color:#222;font-weight:bold;transform:scaleX(0.8326);">デザイン</span><svg class="a" style="left:84.5px;top:101.5px" width="7" height="4" viewBox="0 0 7 4"><path d="M0 0H7L3.5 4Z" fill="#333"/></svg><span class="t" style="left:149.6px;top:67.5px;font-size:11px;line-height:15px;height:15px;color:#0696d7;font-weight:bold;transform:scaleX(0.7364);">ソリッド</span><span class="t" style="left:227.5px;top:67.5px;font-size:11px;line-height:15px;height:15px;color:#333;font-weight:normal;transform:scaleX(0.7407);">サーフェス</span><span class="t" style="left:314.7px;top:67.5px;font-size:11px;line-height:15px;height:15px;color:#333;font-weight:normal;transform:scaleX(0.6841);">メッシュ</span><span class="t" style="left:388.4px;top:67.5px;font-size:11px;line-height:15px;height:15px;color:#333;font-weight:normal;transform:scaleX(0.7182);">フォーム</span><span class="t" style="left:466.4px;top:67.5px;font-size:11px;line-height:15px;height:15px;color:#333;font-weight:normal;transform:scaleX(0.7696);">シート メタル</span><span class="t" style="left:564.3px;top:67.5px;font-size:11px;line-height:15px;height:15px;color:#333;font-weight:normal;transform:scaleX(0.6939);">プラスチック</span><span class="t" style="left:658.0px;top:67.5px;font-size:11px;line-height:15px;height:15px;color:#333;font-weight:normal;transform:scaleX(0.6789);">ユーティリティ</span><div class="tabul"></div><div class="sep" style="left:351px"></div><div class="sep" style="left:620px"></div><div class="sep" style="left:717px"></div><div class="sep" style="left:776px"></div><div class="sep" style="left:835px"></div><div class="sep" style="left:894px"></div><span class="t" style="left:220.0px;top:127.5px;font-size:11px;line-height:15px;height:15px;color:#222;font-weight:normal;transform:scaleX(0.9545);">作成</span><svg class="a" style="left:243.8px;top:133.2px" width="7" height="4" viewBox="0 0 7 4"><path d="M0 0H7L3.5 4Z" fill="#333"/></svg><span class="t" style="left:468.3px;top:127.5px;font-size:11px;line-height:15px;height:15px;color:#222;font-weight:normal;transform:scaleX(0.9409);">修正</span><svg class="a" style="left:491.0px;top:133.2px" width="7" height="4" viewBox="0 0 7 4"><path d="M0 0H7L3.5 4Z" fill="#333"/></svg><span class="t" style="left:642.5px;top:127.5px;font-size:11px;line-height:15px;height:15px;color:#222;font-weight:normal;transform:scaleX(0.7315);">アセンブリ</span><svg class="a" style="left:684.5px;top:133.2px" width="7" height="4" viewBox="0 0 7 4"><path d="M0 0H7L3.5 4Z" fill="#333"/></svg><span class="t" style="left:730.5px;top:127.5px;font-size:11px;line-height:15px;height:15px;color:#222;font-weight:normal;transform:scaleX(0.9773);">構築</span><svg class="a" style="left:754.5px;top:133.2px" width="7" height="4" viewBox="0 0 7 4"><path d="M0 0H7L3.5 4Z" fill="#333"/></svg><span class="t" style="left:790.0px;top:127.5px;font-size:11px;line-height:15px;height:15px;color:#222;font-weight:normal;transform:scaleX(0.9545);">検査</span><svg class="a" style="left:813.5px;top:133.2px" width="7" height="4" viewBox="0 0 7 4"><path d="M0 0H7L3.5 4Z" fill="#333"/></svg><span class="t" style="left:849.0px;top:127.5px;font-size:11px;line-height:15px;height:15px;color:#222;font-weight:normal;transform:scaleX(0.9455);">挿入</span><svg class="a" style="left:872.5px;top:133.2px" width="7" height="4" viewBox="0 0 7 4"><path d="M0 0H7L3.5 4Z" fill="#333"/></svg><span class="t" style="left:907.8px;top:127.5px;font-size:11px;line-height:15px;height:15px;color:#222;font-weight:normal;transform:scaleX(0.9545);">選択</span><svg class="a" style="left:931.5px;top:133.2px" width="7" height="4" viewBox="0 0 7 4"><path d="M0 0H7L3.5 4Z" fill="#333"/></svg><svg class="a" style="left:137px;top:90px" width="32" height="32" viewBox="0 0 32 32"><path d="M2 2H29V20M2 2V29H19" fill="none" stroke="#7c7c7c" stroke-width="1"/><rect x="0.5" y="0.5" width="3" height="3" fill="#5a5a5a"/><rect x="27.5" y="0.5" width="3" height="3" fill="#5a5a5a"/><rect x="0.5" y="27.5" width="3" height="3" fill="#5a5a5a"/><path d="M11 9H20M9 11V20M21.5 10.5Q21 21 11 21.5" fill="none" stroke="#555" stroke-width="1.1"/><rect x="7.5" y="7.5" width="3" height="3" fill="#5a5a5a"/><rect x="20" y="7.5" width="3" height="3" fill="#5a5a5a"/><rect x="7.5" y="20" width="3" height="3" fill="#5a5a5a"/><path d="M25 18V32M18 25H32" stroke="#21a546" stroke-width="4"/></svg><svg class="a" style="left:180.5px;top:90px" width="32" height="32" viewBox="0 0 32 32"><path d="M1 27L6 23H24L19 27Z M1 27V31H19V27Z M19 27L24 23V27L19 31Z" fill="#bcbcbc"/><path d="M1 6L6 1H24L19 6Z" fill="#8fcaf5"/><path d="M1 6H19V27H1Z" fill="#6cb0e6"/><path d="M19 6L24 1V23L19 27Z" fill="#4a94cf"/><path d="M28 28V4" stroke="#222" stroke-width="1.2"/><path d="M25.3 6.5L28 1.5L30.7 6.5Z" fill="#222"/></svg><svg class="a" style="left:222.5px;top:91px" width="33" height="28" viewBox="0 0 33 28"><path d="M1 12Q16 0 32 10L32 18Q16 9 7 26L1 22Z" fill="#6cb0e6"/><path d="M1 12Q16 1 32 10L27 14Q15 7 7 16Z" fill="#8fcaf5"/><path d="M1 12L7 16V26L1 22Z" fill="#4a94cf"/><path d="M27 14L32 10V19L27 24Z" fill="#f4f4f4" stroke="#444" stroke-width="1"/><path d="M7 16Q16 8 27 14V24Q16 18 7 26Z" fill="#6cb0e6"/><path d="M2.5 5.5Q15 -2 29 5" fill="none" stroke="#222" stroke-width="1.1"/><path d="M1.2 6.5L6.5 3L5.5 7.3Z" fill="#222"/></svg><svg class="a" style="left:266px;top:90px" width="32" height="32" viewBox="0 0 32 32"><path d="M1 9L9 1H31L23 9Z" fill="#ececec" stroke="#5a5a5a" stroke-width="1"/><path d="M1 9H23V31H1Z" fill="#dcdcdc" stroke="#5a5a5a" stroke-width="1"/><path d="M23 9L31 1V23L23 31Z" fill="#bcbcbc" stroke="#5a5a5a" stroke-width="1"/><circle cx="12" cy="20" r="8" fill="#e8e8e8" stroke="#5a5a5a" stroke-width="1"/><path d="M6 17A6.5 6.5 0 1 0 17.5 23.5Q11 22.5 10.5 14.5Q7.5 15 6 17Z" fill="#6cb0e6"/></svg><svg class="a" style="left:309px;top:92px" width="28" height="28" viewBox="0 0 28 28"><path d="M3 3V25M3 3H25M3 25H25" fill="none" stroke="#555" stroke-width="1.1"/><rect x="0.5" y="0.5" width="6" height="6" fill="#fff" stroke="#555" stroke-width="1"/><rect x="21" y="0" width="7" height="7" fill="#6cb0e6"/><rect x="0" y="21" width="7" height="7" fill="#6cb0e6"/><rect x="21" y="21" width="7" height="7" fill="#6cb0e6"/></svg><svg class="a" style="left:363.5px;top:90px" width="31" height="32" viewBox="0 0 31 32"><path d="M1 8L7 1H11V31H1Z" fill="#dcdcdc" stroke="#5a5a5a" stroke-width="1"/><path d="M8 7L13 1H22L17 7Z" fill="#8fcaf5"/><path d="M8 7H17V32H8Z" fill="#6cb0e6"/><path d="M17 7L22 1V26L17 32Z" fill="#4a94cf"/><path d="M20 16H27" stroke="#222" stroke-width="1.2"/><path d="M26 13.3L30 16L26 18.7Z" fill="#222"/><path d="M19.5 13.5H22.5V18.5H19.5Z" fill="#f2f2f2"/><path d="M20 16H27" stroke="#222" stroke-width="1.2"/></svg><svg class="a" style="left:406px;top:89.5px" width="33" height="32" viewBox="0 0 33 32"><path d="M1 9L9 1H17Q31 3 32 16L25 24V31H1Z" fill="#dcdcdc" stroke="#5a5a5a" stroke-width="1"/><path d="M25 24L32 16V24L25 31Z" fill="#bcbcbc" stroke="#5a5a5a" stroke-width="1"/><path d="M12 6L18 0.5Q31 2 32 16L25 22Q24 9 12 6Z" fill="#6cb0e6"/></svg><svg class="a" style="left:448.5px;top:89.5px" width="33" height="33" viewBox="0 0 33 33"><path d="M1 9L9 1H32L24 9Z" fill="#ececec" stroke="#5a5a5a" stroke-width="1"/><path d="M1 9H24V32H1Z" fill="#dcdcdc" stroke="#5a5a5a" stroke-width="1"/><path d="M24 9L32 1V24L24 32Z" fill="#bcbcbc" stroke="#5a5a5a" stroke-width="1"/><rect x="4.5" y="12.5" width="16" height="16" fill="#f0f0f0" stroke="#ccc"/><path d="M5 13H12V21L5 28Z" fill="#4a94cf"/><path d="M12 21H20V28H5Z" fill="#8fcaf5"/></svg><svg class="a" style="left:491.5px;top:89.5px" width="33" height="32" viewBox="0 0 33 32"><path d="M11 6L16 1H33L28 6Z" fill="#8fcaf5"/><path d="M11 6H28V22H11Z" fill="#6cb0e6"/><path d="M28 6L33 1V17L28 22Z" fill="#4a94cf"/><path d="M0 16L5 11H22L17 16Z" fill="#8fcaf5"/><path d="M0 16H17V32H0Z" fill="#6cb0e6"/><path d="M17 16L22 11V27L17 32Z" fill="#4a94cf"/><path d="M11 11H22V22H17V16H11Z" fill="#6cb0e6"/></svg><svg class="a" style="left:535px;top:89.5px" width="32" height="32" viewBox="0 0 32 32"><path d="M1 6L6 1H29L24 6Z" fill="#8fcaf5"/><path d="M1 6H24V16H1Z" fill="#6cb0e6"/><path d="M24 6L29 1V11L24 16Z" fill="#4a94cf"/><path d="M1 21H24V31H1Z" fill="#dcdcdc" stroke="#888" stroke-width="0.8"/><path d="M24 21L29 16V26L24 31Z" fill="#bcbcbc" stroke="#888" stroke-width="0.8"/><path d="M-1 18.5H24L32 10.5" fill="none" stroke="#2b8de0" stroke-width="1.3"/></svg><svg class="a" style="left:578px;top:90px" width="32" height="32" viewBox="0 0 32 32"><path d="M16 4V28M4 16H28" stroke="#333" stroke-width="2.2"/><path d="M16 0L21 7H11Z M16 32L21 25H11Z M0 16L7 11V21Z M32 16L25 11V21Z" fill="#333"/></svg><svg class="a" style="left:631.5px;top:89.5px" width="33" height="32" viewBox="0 0 33 32"><path d="M1 8L5 4H15L11 8Z" fill="#8fcaf5"/><path d="M1 8H11V18H1Z" fill="#6cb0e6"/><path d="M11 8L15 4V14L11 18Z" fill="#4a94cf"/><path d="M1 20H12V31H1Z" fill="#dcdcdc" stroke="#999" stroke-width="0.8"/><path d="M13 20L17 16H28L24 20Z" fill="#ececec" stroke="#999" stroke-width="0.8"/><path d="M13 20H24V31H13Z" fill="#dcdcdc" stroke="#999" stroke-width="0.8"/><path d="M24 20L28 16V27L24 31Z" fill="#bcbcbc" stroke="#999" stroke-width="0.8"/><path d="M24.5 8.5L32.5 8.5M24.5 8.5L31.4 12.5M24.5 8.5L28.5 15.4M24.5 8.5L24.5 16.5M24.5 8.5L20.5 15.4M24.5 8.5L17.6 12.5M24.5 8.5L16.5 8.5M24.5 8.5L17.6 4.5M24.5 8.5L20.5 1.6M24.5 8.5L24.5 0.5M24.5 8.5L28.5 1.6M24.5 8.5L31.4 4.5" stroke="#f59a00" stroke-width="1.6"/><circle cx="24.5" cy="8.5" r="4" fill="#f59a00"/></svg><svg class="a" style="left:676.5px;top:91px" width="29" height="29" viewBox="0 0 29 29"><path d="M1 27V9Q1 2 7 1.5Q12 1 12 6V18L4 28Z" fill="#c8c8c8" stroke="#666" stroke-width="1"/><ellipse cx="8.8" cy="3.5" rx="3" ry="1.6" fill="#eee" stroke="#666" stroke-width="0.7"/><path d="M21 6L28 12V28L20 22V20H16V14Q16 11 19 11H21Z" fill="#c8c8c8" stroke="#666" stroke-width="1"/><path d="M9 13V20M18.5 4V10" stroke="#1a8be0" stroke-width="1.2"/></svg><svg class="a" style="left:731px;top:90px" width="32" height="32" viewBox="0 0 32 32"><path d="M1 10L10 1H18L9 10Z" fill="#ececec" stroke="#777" stroke-width="0.9"/><path d="M1 10H9V31H1Z" fill="#dcdcdc" stroke="#777" stroke-width="0.9"/><path d="M9 10L18 1V22L9 31Z" fill="#5cc47e"/><path d="M22 10L31 1V22L22 31Z" fill="#e4996a"/></svg><svg class="a" style="left:792px;top:98px" width="28" height="17" viewBox="0 0 28 17"><rect x="0" y="10" width="28" height="6.5" fill="#f5a100"/><path d="M3 10V13.5" stroke="#fff8e0" stroke-width="0.8"/><path d="M6 10V12.5" stroke="#fff8e0" stroke-width="0.8"/><path d="M9 10V13.5" stroke="#fff8e0" stroke-width="0.8"/><path d="M12 10V12.5" stroke="#fff8e0" stroke-width="0.8"/><path d="M15 10V13.5" stroke="#fff8e0" stroke-width="0.8"/><path d="M18 10V12.5" stroke="#fff8e0" stroke-width="0.8"/><path d="M21 10V13.5" stroke="#fff8e0" stroke-width="0.8"/><path d="M24 10V12.5" stroke="#fff8e0" stroke-width="0.8"/><path d="M1 0V7M27.5 0V7M2 3.5H26" stroke="#555" stroke-width="1"/><path d="M1 3.5L5 1.5V5.5Z M27.5 3.5L23.5 1.5V5.5Z" fill="#555"/></svg><svg class="a" style="left:850px;top:91px" width="29" height="29" viewBox="0 0 29 29"><rect x="0" y="0" width="29" height="29" fill="#4a94cf"/><rect x="1" y="1" width="27" height="27" fill="#86c8fa"/><circle cx="21" cy="8" r="3" fill="#fdf6c2"/><path d="M1 20Q8 8 13 14T20 20Q23 16 28 21V28H1Z" fill="#4a94cf"/></svg><svg class="a" style="left:905px;top:87px" width="38" height="38" viewBox="0 0 38 38"><rect width="38" height="38" fill="#0d95d8"/><circle cx="17" cy="17" r="13" fill="none" stroke="#37b06b" stroke-width="1.1" stroke-dasharray="3,2"/><path d="M24.5 18.5V33.5L28 30L30.5 35.5L33 34.3L30.5 29H35Z" fill="#fff" stroke="#222" stroke-width="1"/></svg></div>
<div class="browser"><div class="brhead"></div><svg class="a" style="left:9px;top:157.5px" width="11" height="7" viewBox="0 0 11 7"><path d="M5 0V7L0 3.5Z M11 0V7L6 3.5Z" fill="#222"/></svg><span class="t" style="left:29.0px;top:153.3px;font-size:10.5px;line-height:15px;height:15px;color:#333;font-weight:normal;transform:scaleX(0.7452);">ブラウザ</span><svg class="a" style="left:282.5px;top:156.5px" width="9" height="9" viewBox="0 0 9 9"><circle cx="4.5" cy="4.5" r="4.5" fill="#111"/><path d="M2 4.5H7" stroke="#fff" stroke-width="1.3"/></svg><div class="grip" style="left:299px;top:155px"></div><div class="sbtrack"></div><div class="sbthumb"></div><div class="rowbg" style="left:40px;top:179.5px;width:131.6px"></div><svg class="a" style="left:21px;top:183px" width="12" height="12" viewBox="0 0 12 12"><path d="M11 0.8V11H0.8Z" fill="url(#tg)" stroke="#333" stroke-width="1"/></svg><svg class="a" style="left:43px;top:183px" width="16" height="12" viewBox="0 0 16 12"><path d="M0.3 6Q8 -2 15.7 6Q8 14 0.3 6Z" fill="#9a9a9a"/><circle cx="8" cy="6" r="3.4" fill="#f0f0f0"/><circle cx="8" cy="6" r="2" fill="#9a9a9a"/></svg><div class="rootsel"></div><svg class="a" style="left:68px;top:181px" width="16" height="16" viewBox="0 0 16 16"><path d="M0.6 4.5L4 0.8H15.4V11.5L12 15.2H0.6Z" fill="#fafafa" stroke="#555" stroke-width="1"/><path d="M3 6H11V14H3Z" fill="#d5d8dd"/><path d="M0.6 4.5H12V15.2M12 4.5L15.4 0.8" fill="none" stroke="#555" stroke-width="1"/></svg><span class="t" style="left:98.5px;top:181.5px;font-size:11px;line-height:15px;height:15px;color:#fff;font-weight:bold;transform:scaleX(0.9868);">V-8 v29</span><svg class="a" style="left:150.5px;top:182.5px" width="13" height="13" viewBox="0 0 13 13"><circle cx="6.5" cy="6.5" r="5.7" fill="#fff" stroke="#222" stroke-width="1.1"/><circle cx="6.5" cy="6.5" r="2.6" fill="#222"/></svg><div class="rowbg" style="left:58.3px;top:203.5px;width:121.5px"></div><svg class="a" style="left:39px;top:206.5px" width="10" height="13" viewBox="0 0 10 13"><path d="M1 0.8L9 6.5L1 12.2Z" fill="#fbfbfb" stroke="#333" stroke-width="1.1"/></svg><svg class="a" style="left:61px;top:205px" width="16" height="16" viewBox="0 0 16 16"><g transform="translate(8,8)" fill="#8e8e8e"><rect x="-1.7" y="-8" width="3.4" height="16" transform="rotate(0)"/><rect x="-1.7" y="-8" width="3.4" height="16" transform="rotate(45)"/><rect x="-1.7" y="-8" width="3.4" height="16" transform="rotate(90)"/><rect x="-1.7" y="-8" width="3.4" height="16" transform="rotate(135)"/><circle r="5.6"/><circle r="2.4" fill="#f0f0f0"/></g></svg><span class="t" style="left:91.6px;top:205.8px;font-size:11px;line-height:15px;height:15px;color:#222;font-weight:normal;transform:scaleX(0.7778);">ドキュメントの設定</span><div class="rowbg" style="left:58.3px;top:227.5px;width:88.3px"></div><svg class="a" style="left:39px;top:230.5px" width="10" height="13" viewBox="0 0 10 13"><path d="M1 0.8L9 6.5L1 12.2Z" fill="#fbfbfb" stroke="#333" stroke-width="1.1"/></svg><svg class="a" style="left:61px;top:230.5px" width="16" height="13" viewBox="0 0 16 13"><path d="M0 0.5H6.5L7.5 2H16V13H0Z" fill="#8e8e8e"/><path d="M0 2.6H16" stroke="#b5b5b5" stroke-width="0.6"/></svg><span class="t" style="left:89.8px;top:229.8px;font-size:11px;line-height:15px;height:15px;color:#222;font-weight:normal;transform:scaleX(0.8291);">ビュー管理</span><div class="rowbg" style="left:58.3px;top:251.5px;width:88.9px"></div><svg class="a" style="left:39px;top:254.5px" width="10" height="13" viewBox="0 0 10 13"><path d="M1 0.8L9 6.5L1 12.2Z" fill="#fbfbfb" stroke="#333" stroke-width="1.1"/></svg><svg class="a" style="left:61px;top:255px" width="16" height="12" viewBox="0 0 16 12"><path d="M1 6Q8 -1 15 6Q8 13 1 6Z" fill="none" stroke="#aaa" stroke-width="1"/><circle cx="8" cy="6" r="2.6" fill="none" stroke="#aaa" stroke-width="1"/><path d="M3 0.5L13 11.5" stroke="#aaa" stroke-width="1"/><path d="M4.3 0L14.3 11" stroke="#f0f0f0" stroke-width="0.8"/></svg><svg class="a" style="left:86px;top:254.5px" width="16" height="13" viewBox="0 0 16 13"><path d="M0 0.5H6.5L7.5 2H16V13H0Z" fill="#8e8e8e"/><path d="M0 2.6H16" stroke="#b5b5b5" stroke-width="0.6"/></svg><span class="t" style="left:115.7px;top:253.8px;font-size:11px;line-height:15px;height:15px;color:#222;font-weight:normal;transform:scaleX(0.9227);">原点</span><div class="rowbg" style="left:58.3px;top:275.5px;width:92.5px"></div><svg class="a" style="left:38px;top:279px" width="12" height="12" viewBox="0 0 12 12"><path d="M11 0.8V11H0.8Z" fill="url(#tg)" stroke="#333" stroke-width="1"/></svg><svg class="a" style="left:61px;top:279px" width="16" height="12" viewBox="0 0 16 12"><path d="M0.3 6Q8 -2 15.7 6Q8 14 0.3 6Z" fill="#9a9a9a"/><circle cx="8" cy="6" r="3.4" fill="#f0f0f0"/><circle cx="8" cy="6" r="2" fill="#9a9a9a"/></svg><svg class="a" style="left:86px;top:278.5px" width="16" height="13" viewBox="0 0 16 13"><path d="M0 0.5H6.5L7.5 2H16V13H0Z" fill="#8e8e8e"/><path d="M0 2.6H16" stroke="#b5b5b5" stroke-width="0.6"/></svg><span class="t" style="left:115.7px;top:277.8px;font-size:11px;line-height:15px;height:15px;color:#222;font-weight:normal;transform:scaleX(0.7469);">ボディ</span><div class="rowbg" style="left:76.3px;top:299.5px;width:113.4px"></div><svg class="a" style="left:79px;top:303px" width="16" height="12" viewBox="0 0 16 12"><path d="M0.3 6Q8 -2 15.7 6Q8 14 0.3 6Z" fill="#9a9a9a"/><circle cx="8" cy="6" r="3.4" fill="#f0f0f0"/><circle cx="8" cy="6" r="2" fill="#9a9a9a"/></svg><svg class="a" style="left:104px;top:301px" width="16" height="16" viewBox="0 0 16 16"><rect x="0.6" y="0.6" width="14.8" height="14.8" rx="3.5" fill="#fdfdfd" stroke="#555" stroke-width="1.1"/><path d="M5 5.5H14.5V12Q14.5 14.7 12 14.7H5Z" fill="url(#bg1)"/></svg><span class="t" style="left:133.7px;top:301.8px;font-size:11px;line-height:15px;height:15px;color:#222;font-weight:normal;transform:scaleX(0.8296);">ボディ上面</span><div class="rowbg" style="left:76.3px;top:323.5px;width:113.4px"></div><svg class="a" style="left:79px;top:327px" width="16" height="12" viewBox="0 0 16 12"><path d="M0.3 6Q8 -2 15.7 6Q8 14 0.3 6Z" fill="#9a9a9a"/><circle cx="8" cy="6" r="3.4" fill="#f0f0f0"/><circle cx="8" cy="6" r="2" fill="#9a9a9a"/></svg><svg class="a" style="left:104px;top:325px" width="16" height="16" viewBox="0 0 16 16"><rect x="0.6" y="0.6" width="14.8" height="14.8" rx="3.5" fill="#fdfdfd" stroke="#555" stroke-width="1.1"/><path d="M5 5.5H14.5V12Q14.5 14.7 12 14.7H5Z" fill="url(#bg1)"/></svg><span class="t" style="left:133.7px;top:325.8px;font-size:11px;line-height:15px;height:15px;color:#222;font-weight:normal;transform:scaleX(0.8296);">ボディ底面</span><div class="rowbg" style="left:76.3px;top:347.5px;width:124.5px"></div><svg class="a" style="left:79px;top:351px" width="16" height="12" viewBox="0 0 16 12"><path d="M0.3 6Q8 -2 15.7 6Q8 14 0.3 6Z" fill="#9a9a9a"/><circle cx="8" cy="6" r="3.4" fill="#f0f0f0"/><circle cx="8" cy="6" r="2" fill="#9a9a9a"/></svg><svg class="a" style="left:104px;top:349px" width="16" height="16" viewBox="0 0 16 16"><rect x="0.6" y="0.6" width="14.8" height="14.8" rx="3.5" fill="#fdfdfd" stroke="#555" stroke-width="1.1"/><path d="M5 5.5H14.5V12Q14.5 14.7 12 14.7H5Z" fill="url(#bg1)"/></svg><span class="t" style="left:133.7px;top:349.8px;font-size:11px;line-height:15px;height:15px;color:#222;font-weight:normal;transform:scaleX(0.7260);">カートリッジ蓋</span><div class="rowbg" style="left:76.3px;top:371.5px;width:112.2px"></div><svg class="a" style="left:79px;top:375px" width="16" height="12" viewBox="0 0 16 12"><path d="M0.3 6Q8 -2 15.7 6Q8 14 0.3 6Z" fill="#9a9a9a"/><circle cx="8" cy="6" r="3.4" fill="#f0f0f0"/><circle cx="8" cy="6" r="2" fill="#9a9a9a"/></svg><svg class="a" style="left:104px;top:373px" width="16" height="16" viewBox="0 0 16 16"><rect x="0.6" y="0.6" width="14.8" height="14.8" rx="3.5" fill="#fdfdfd" stroke="#555" stroke-width="1.1"/><path d="M5 5.5H14.5V12Q14.5 14.7 12 14.7H5Z" fill="url(#bg1)"/></svg><span class="t" style="left:133.7px;top:373.8px;font-size:11px;line-height:15px;height:15px;color:#222;font-weight:normal;transform:scaleX(0.7927);">キーボード</span><div class="rowbg" style="left:76.3px;top:395.5px;width:119.6px"></div><svg class="a" style="left:79px;top:399px" width="16" height="12" viewBox="0 0 16 12"><path d="M0.3 6Q8 -2 15.7 6Q8 14 0.3 6Z" fill="#9a9a9a"/><circle cx="8" cy="6" r="3.4" fill="#f0f0f0"/><circle cx="8" cy="6" r="2" fill="#9a9a9a"/></svg><svg class="a" style="left:104px;top:397px" width="16" height="16" viewBox="0 0 16 16"><rect x="0.6" y="0.6" width="14.8" height="14.8" rx="3.5" fill="#fdfdfd" stroke="#555" stroke-width="1.1"/><path d="M5 5.5H14.5V12Q14.5 14.7 12 14.7H5Z" fill="url(#bg1)"/></svg><span class="t" style="left:133.7px;top:397.8px;font-size:11px;line-height:15px;height:15px;color:#222;font-weight:normal;transform:scaleX(0.7727);">カーソルキー</span><div class="rowbg" style="left:76.3px;top:419.5px;width:92.5px"></div><svg class="a" style="left:79px;top:423px" width="16" height="12" viewBox="0 0 16 12"><path d="M0.3 6Q8 -2 15.7 6Q8 14 0.3 6Z" fill="#9a9a9a"/><circle cx="8" cy="6" r="3.4" fill="#f0f0f0"/><circle cx="8" cy="6" r="2" fill="#9a9a9a"/></svg><svg class="a" style="left:104px;top:421px" width="16" height="16" viewBox="0 0 16 16"><rect x="0.6" y="0.6" width="14.8" height="14.8" rx="3.5" fill="#fdfdfd" stroke="#555" stroke-width="1.1"/><path d="M5 5.5H14.5V12Q14.5 14.7 12 14.7H5Z" fill="url(#bg1)"/></svg><span class="t" style="left:134.2px;top:421.8px;font-size:11px;line-height:15px;height:15px;color:#222;font-weight:normal;transform:scaleX(0.8357);">LED1</span><div class="rowbg" style="left:76.3px;top:443.5px;width:93.7px"></div><svg class="a" style="left:79px;top:447px" width="16" height="12" viewBox="0 0 16 12"><path d="M0.3 6Q8 -2 15.7 6Q8 14 0.3 6Z" fill="#9a9a9a"/><circle cx="8" cy="6" r="3.4" fill="#f0f0f0"/><circle cx="8" cy="6" r="2" fill="#9a9a9a"/></svg><svg class="a" style="left:104px;top:445px" width="16" height="16" viewBox="0 0 16 16"><rect x="0.6" y="0.6" width="14.8" height="14.8" rx="3.5" fill="#fdfdfd" stroke="#555" stroke-width="1.1"/><path d="M5 5.5H14.5V12Q14.5 14.7 12 14.7H5Z" fill="url(#bg1)"/></svg><span class="t" style="left:134.2px;top:445.8px;font-size:11px;line-height:15px;height:15px;color:#222;font-weight:normal;transform:scaleX(0.8786);">LED2</span><div class="rowbg" style="left:76.3px;top:467.5px;width:93.7px"></div><svg class="a" style="left:79px;top:471px" width="16" height="12" viewBox="0 0 16 12"><path d="M0.3 6Q8 -2 15.7 6Q8 14 0.3 6Z" fill="#9a9a9a"/><circle cx="8" cy="6" r="3.4" fill="#f0f0f0"/><circle cx="8" cy="6" r="2" fill="#9a9a9a"/></svg><svg class="a" style="left:104px;top:469px" width="16" height="16" viewBox="0 0 16 16"><rect x="0.6" y="0.6" width="14.8" height="14.8" rx="3.5" fill="#fdfdfd" stroke="#555" stroke-width="1.1"/><path d="M5 5.5H14.5V12Q14.5 14.7 12 14.7H5Z" fill="url(#bg1)"/></svg><span class="t" style="left:134.2px;top:469.8px;font-size:11px;line-height:15px;height:15px;color:#222;font-weight:normal;transform:scaleX(0.8786);">LED3</span><div class="rowbg" style="left:76.3px;top:491.5px;width:121.9px"></div><svg class="a" style="left:79px;top:495px" width="16" height="12" viewBox="0 0 16 12"><path d="M0.3 6Q8 -2 15.7 6Q8 14 0.3 6Z" fill="#9a9a9a"/><circle cx="8" cy="6" r="3.4" fill="#f0f0f0"/><circle cx="8" cy="6" r="2" fill="#9a9a9a"/></svg><svg class="a" style="left:104px;top:493px" width="16" height="16" viewBox="0 0 16 16"><rect x="0.6" y="0.6" width="14.8" height="14.8" rx="3.5" fill="#fdfdfd" stroke="#555" stroke-width="1.1"/><path d="M5 5.5H14.5V12Q14.5 14.7 12 14.7H5Z" fill="url(#bg1)"/></svg><span class="t" style="left:133.7px;top:493.8px;font-size:11px;line-height:15px;height:15px;color:#222;font-weight:normal;transform:scaleX(0.8076);">電源コネクタ</span><div class="rowbg" style="left:76.3px;top:515.5px;width:152.8px"></div><svg class="a" style="left:79px;top:519px" width="16" height="12" viewBox="0 0 16 12"><path d="M0.3 6Q8 -2 15.7 6Q8 14 0.3 6Z" fill="#9a9a9a"/><circle cx="8" cy="6" r="3.4" fill="#f0f0f0"/><circle cx="8" cy="6" r="2" fill="#9a9a9a"/></svg><svg class="a" style="left:104px;top:517px" width="16" height="16" viewBox="0 0 16 16"><rect x="0.6" y="0.6" width="14.8" height="14.8" rx="3.5" fill="#fdfdfd" stroke="#555" stroke-width="1.1"/><path d="M5 5.5H14.5V12Q14.5 14.7 12 14.7H5Z" fill="url(#bg1)"/></svg><span class="t" style="left:133.7px;top:517.8px;font-size:11px;line-height:15px;height:15px;color:#222;font-weight:normal;transform:scaleX(0.7017);">ジョイスティックポート</span><div class="rowbg" style="left:76.3px;top:539.5px;width:193.4px"></div><svg class="a" style="left:79px;top:543px" width="16" height="12" viewBox="0 0 16 12"><path d="M0.3 6Q8 -2 15.7 6Q8 14 0.3 6Z" fill="#9a9a9a"/><circle cx="8" cy="6" r="3.4" fill="#f0f0f0"/><circle cx="8" cy="6" r="2" fill="#9a9a9a"/></svg><svg class="a" style="left:104px;top:541px" width="16" height="16" viewBox="0 0 16 16"><rect x="0.6" y="0.6" width="14.8" height="14.8" rx="3.5" fill="#fdfdfd" stroke="#555" stroke-width="1.1"/><path d="M5 5.5H14.5V12Q14.5 14.7 12 14.7H5Z" fill="url(#bg1)"/></svg><span class="t" style="left:133.7px;top:541.8px;font-size:11px;line-height:15px;height:15px;color:#222;font-weight:normal;transform:scaleX(0.7172);">ジョイスティックポート・スペーサ</span><div class="rowbg" style="left:58.3px;top:563.5px;width:109.2px"></div><svg class="a" style="left:38px;top:567px" width="12" height="12" viewBox="0 0 12 12"><path d="M11 0.8V11H0.8Z" fill="url(#tg)" stroke="#333" stroke-width="1"/></svg><svg class="a" style="left:61px;top:567px" width="16" height="12" viewBox="0 0 16 12"><path d="M0.3 6Q8 -2 15.7 6Q8 14 0.3 6Z" fill="#9a9a9a"/><circle cx="8" cy="6" r="3.4" fill="#f0f0f0"/><circle cx="8" cy="6" r="2" fill="#9a9a9a"/></svg><svg class="a" style="left:86px;top:566.5px" width="16" height="13" viewBox="0 0 16 13"><path d="M0 0.5H6.5L7.5 2H16V13H0Z" fill="#8e8e8e"/><path d="M0 2.6H16" stroke="#b5b5b5" stroke-width="0.6"/></svg><span class="t" style="left:115.7px;top:565.8px;font-size:11px;line-height:15px;height:15px;color:#222;font-weight:normal;transform:scaleX(0.7382);">キャンバス</span><div class="rowbg" style="left:76.3px;top:587.5px;width:182.3px"></div><svg class="a" style="left:79px;top:591px" width="16" height="12" viewBox="0 0 16 12"><path d="M1 6Q8 -1 15 6Q8 13 1 6Z" fill="none" stroke="#aaa" stroke-width="1"/><circle cx="8" cy="6" r="2.6" fill="none" stroke="#aaa" stroke-width="1"/><path d="M3 0.5L13 11.5" stroke="#aaa" stroke-width="1"/><path d="M4.3 0L14.3 11" stroke="#f0f0f0" stroke-width="0.8"/></svg><svg class="a" style="left:104px;top:589px" width="16" height="16" viewBox="0 0 16 16"><rect x="0.5" y="0.5" width="15" height="15" fill="#7fbff0" stroke="#555" stroke-width="1"/><circle cx="11.5" cy="4.5" r="1.7" fill="#fff0a0"/><path d="M1 15V10L6 5L15 12V15Z" fill="#6a7a8a"/><circle cx="4.8" cy="11.2" r="3.3" fill="#d32" stroke="#7a0c0c" stroke-width="0.8"/><path d="M2.6 9.4L7 13" stroke="#fff" stroke-width="1"/></svg><span class="t" style="left:134.2px;top:589.8px;font-size:11px;line-height:15px;height:15px;color:#222;font-weight:normal;transform:scaleX(0.9513);">IMG_20220429_170630</span><div class="rowbg" style="left:76.3px;top:611.5px;width:182.3px"></div><svg class="a" style="left:79px;top:615px" width="16" height="12" viewBox="0 0 16 12"><path d="M1 6Q8 -1 15 6Q8 13 1 6Z" fill="none" stroke="#aaa" stroke-width="1"/><circle cx="8" cy="6" r="2.6" fill="none" stroke="#aaa" stroke-width="1"/><path d="M3 0.5L13 11.5" stroke="#aaa" stroke-width="1"/><path d="M4.3 0L14.3 11" stroke="#f0f0f0" stroke-width="0.8"/></svg><svg class="a" style="left:104px;top:613px" width="16" height="16" viewBox="0 0 16 16"><rect x="0.5" y="0.5" width="15" height="15" fill="#7fbff0" stroke="#555" stroke-width="1"/><circle cx="11.5" cy="4.5" r="1.7" fill="#fff0a0"/><path d="M1 15V10L6 5L15 12V15Z" fill="#6a7a8a"/><circle cx="4.8" cy="11.2" r="3.3" fill="#d32" stroke="#7a0c0c" stroke-width="0.8"/><path d="M2.6 9.4L7 13" stroke="#fff" stroke-width="1"/></svg><span class="t" style="left:134.2px;top:613.8px;font-size:11px;line-height:15px;height:15px;color:#222;font-weight:normal;transform:scaleX(0.9513);">IMG_20220429_170636</span><div class="rowbg" style="left:58.3px;top:635.5px;width:99.4px"></div><svg class="a" style="left:39px;top:638.5px" width="10" height="13" viewBox="0 0 10 13"><path d="M1 0.8L9 6.5L1 12.2Z" fill="#fbfbfb" stroke="#333" stroke-width="1.1"/></svg><svg class="a" style="left:61px;top:639px" width="16" height="12" viewBox="0 0 16 12"><path d="M0.3 6Q8 -2 15.7 6Q8 14 0.3 6Z" fill="#9a9a9a"/><circle cx="8" cy="6" r="3.4" fill="#f0f0f0"/><circle cx="8" cy="6" r="2" fill="#9a9a9a"/></svg><svg class="a" style="left:86px;top:638.5px" width="16" height="13" viewBox="0 0 16 13"><path d="M0 0.5H6.5L7.5 2H16V13H0Z" fill="#8e8e8e"/><path d="M0 2.6H16" stroke="#b5b5b5" stroke-width="0.6"/></svg><span class="t" style="left:115.7px;top:637.8px;font-size:11px;line-height:15px;height:15px;color:#222;font-weight:normal;transform:scaleX(0.7000);">スケッチ</span><div class="rowbg" style="left:58.3px;top:659.5px;width:138.8px"></div><svg class="a" style="left:39px;top:662.5px" width="10" height="13" viewBox="0 0 10 13"><path d="M1 0.8L9 6.5L1 12.2Z" fill="#fbfbfb" stroke="#333" stroke-width="1.1"/></svg><svg class="a" style="left:61px;top:663px" width="16" height="12" viewBox="0 0 16 12"><path d="M0.3 6Q8 -2 15.7 6Q8 14 0.3 6Z" fill="#9a9a9a"/><circle cx="8" cy="6" r="3.4" fill="#f0f0f0"/><circle cx="8" cy="6" r="2" fill="#9a9a9a"/></svg><svg class="a" style="left:86px;top:662.5px" width="16" height="13" viewBox="0 0 16 13"><path d="M0 0.5H6.5L7.5 2H16V13H0Z" fill="#8e8e8e"/><path d="M0 2.6H16" stroke="#b5b5b5" stroke-width="0.6"/></svg><span class="t" style="left:115.7px;top:661.8px;font-size:11px;line-height:15px;height:15px;color:#222;font-weight:normal;transform:scaleX(0.7091);">コンストラクション</span><div class="rowbg" style="left:58.3px;top:683.5px;width:106px"></div><svg class="a" style="left:60px;top:685px" width="18" height="16" viewBox="0 0 18 16"><path d="M0.5 13.5L3 11.5H12L9.5 13.5Z M0.5 13.5V15.5H9.5L12 13.5V11.5" fill="#bdbdbd"/><path d="M0.5 3L3 0.5H12L9.5 3Z" fill="#8fcaf5"/><path d="M0.5 3H9.5V13.5H0.5Z" fill="#6cb0e6"/><path d="M9.5 3L12 0.5V11.5L9.5 13.5Z" fill="#4a94cf"/><path d="M15 14V2.5" stroke="#222" stroke-width="1"/><path d="M13.6 3.8L15 0.8L16.4 3.8Z" fill="#222"/></svg><span class="t" style="left:90.6px;top:685.8px;font-size:11px;line-height:15px;height:15px;color:#222;font-weight:normal;transform:scaleX(0.9191);">押し出し1439</span><div class="rowbg" style="left:58.3px;top:707.5px;width:106px"></div><svg class="a" style="left:60px;top:709px" width="18" height="16" viewBox="0 0 18 16"><path d="M0.5 13.5L3 11.5H12L9.5 13.5Z M0.5 13.5V15.5H9.5L12 13.5V11.5" fill="#bdbdbd"/><path d="M0.5 3L3 0.5H12L9.5 3Z" fill="#8fcaf5"/><path d="M0.5 3H9.5V13.5H0.5Z" fill="#6cb0e6"/><path d="M9.5 3L12 0.5V11.5L9.5 13.5Z" fill="#4a94cf"/><path d="M15 14V2.5" stroke="#222" stroke-width="1"/><path d="M13.6 3.8L15 0.8L16.4 3.8Z" fill="#222"/></svg><span class="t" style="left:90.6px;top:709.8px;font-size:11px;line-height:15px;height:15px;color:#222;font-weight:normal;transform:scaleX(0.9191);">押し出し1472</span><div class="rowbg" style="left:58.3px;top:731.5px;width:104.9px"></div><svg class="a" style="left:60px;top:733px" width="18" height="16" viewBox="0 0 18 16"><path d="M0.5 13.5L3 11.5H12L9.5 13.5Z M0.5 13.5V15.5H9.5L12 13.5V11.5" fill="#bdbdbd"/><path d="M0.5 3L3 0.5H12L9.5 3Z" fill="#8fcaf5"/><path d="M0.5 3H9.5V13.5H0.5Z" fill="#6cb0e6"/><path d="M9.5 3L12 0.5V11.5L9.5 13.5Z" fill="#4a94cf"/><path d="M15 14V2.5" stroke="#222" stroke-width="1"/><path d="M13.6 3.8L15 0.8L16.4 3.8Z" fill="#222"/></svg><span class="t" style="left:90.6px;top:733.8px;font-size:11px;line-height:15px;height:15px;color:#222;font-weight:normal;transform:scaleX(0.9029);">押し出し1651</span><div class="rowbg" style="left:58.3px;top:755.5px;width:106px"></div><svg class="a" style="left:60px;top:757px" width="18" height="16" viewBox="0 0 18 16"><path d="M0.5 13.5L3 11.5H12L9.5 13.5Z M0.5 13.5V15.5H9.5L12 13.5V11.5" fill="#bdbdbd"/><path d="M0.5 3L3 0.5H12L9.5 3Z" fill="#8fcaf5"/><path d="M0.5 3H9.5V13.5H0.5Z" fill="#6cb0e6"/><path d="M9.5 3L12 0.5V11.5L9.5 13.5Z" fill="#4a94cf"/><path d="M15 14V2.5" stroke="#222" stroke-width="1"/><path d="M13.6 3.8L15 0.8L16.4 3.8Z" fill="#222"/></svg><span class="t" style="left:90.6px;top:757.8px;font-size:11px;line-height:15px;height:15px;color:#222;font-weight:normal;transform:scaleX(0.9191);">押し出し1652</span><div class="rowbg" style="left:58.3px;top:779.5px;width:106px"></div><svg class="a" style="left:60px;top:781px" width="18" height="16" viewBox="0 0 18 16"><path d="M0.5 13.5L3 11.5H12L9.5 13.5Z M0.5 13.5V15.5H9.5L12 13.5V11.5" fill="#bdbdbd"/><path d="M0.5 3L3 0.5H12L9.5 3Z" fill="#8fcaf5"/><path d="M0.5 3H9.5V13.5H0.5Z" fill="#6cb0e6"/><path d="M9.5 3L12 0.5V11.5L9.5 13.5Z" fill="#4a94cf"/><path d="M15 14V2.5" stroke="#222" stroke-width="1"/><path d="M13.6 3.8L15 0.8L16.4 3.8Z" fill="#222"/></svg><span class="t" style="left:90.6px;top:781.8px;font-size:11px;line-height:15px;height:15px;color:#222;font-weight:normal;transform:scaleX(0.9191);">押し出し2058</span><div class="rowbg" style="left:58.3px;top:803.5px;width:106px"></div><svg class="a" style="left:60px;top:805px" width="18" height="16" viewBox="0 0 18 16"><path d="M0.5 13.5L3 11.5H12L9.5 13.5Z M0.5 13.5V15.5H9.5L12 13.5V11.5" fill="#bdbdbd"/><path d="M0.5 3L3 0.5H12L9.5 3Z" fill="#8fcaf5"/><path d="M0.5 3H9.5V13.5H0.5Z" fill="#6cb0e6"/><path d="M9.5 3L12 0.5V11.5L9.5 13.5Z" fill="#4a94cf"/><path d="M15 14V2.5" stroke="#222" stroke-width="1"/><path d="M13.6 3.8L15 0.8L16.4 3.8Z" fill="#222"/></svg><span class="t" style="left:90.6px;top:805.8px;font-size:11px;line-height:15px;height:15px;color:#222;font-weight:normal;transform:scaleX(0.9191);">押し出し2060</span><div class="rowbg" style="left:58.3px;top:827.5px;width:106px"></div><svg class="a" style="left:60px;top:829px" width="18" height="16" viewBox="0 0 18 16"><path d="M0.5 13.5L3 11.5H12L9.5 13.5Z M0.5 13.5V15.5H9.5L12 13.5V11.5" fill="#bdbdbd"/><path d="M0.5 3L3 0.5H12L9.5 3Z" fill="#8fcaf5"/><path d="M0.5 3H9.5V13.5H0.5Z" fill="#6cb0e6"/><path d="M9.5 3L12 0.5V11.5L9.5 13.5Z" fill="#4a94cf"/><path d="M15 14V2.5" stroke="#222" stroke-width="1"/><path d="M13.6 3.8L15 0.8L16.4 3.8Z" fill="#222"/></svg><span class="t" style="left:90.6px;top:829.8px;font-size:11px;line-height:15px;height:15px;color:#222;font-weight:normal;transform:scaleX(0.9191);">押し出し2067</span><div class="rowbg" style="left:58.3px;top:851.5px;width:106px"></div><svg class="a" style="left:60px;top:853px" width="18" height="16" viewBox="0 0 18 16"><path d="M0.5 13.5L3 11.5H12L9.5 13.5Z M0.5 13.5V15.5H9.5L12 13.5V11.5" fill="#bdbdbd"/><path d="M0.5 3L3 0.5H12L9.5 3Z" fill="#8fcaf5"/><path d="M0.5 3H9.5V13.5H0.5Z" fill="#6cb0e6"/><path d="M9.5 3L12 0.5V11.5L9.5 13.5Z" fill="#4a94cf"/><path d="M15 14V2.5" stroke="#222" stroke-width="1"/><path d="M13.6 3.8L15 0.8L16.4 3.8Z" fill="#222"/></svg><span class="t" style="left:90.6px;top:853.8px;font-size:11px;line-height:15px;height:15px;color:#222;font-weight:normal;transform:scaleX(0.9191);">押し出し2068</span><div class="rowbg" style="left:58.3px;top:875.5px;width:106px"></div><svg class="a" style="left:60px;top:877px" width="18" height="16" viewBox="0 0 18 16"><path d="M0.5 13.5L3 11.5H12L9.5 13.5Z M0.5 13.5V15.5H9.5L12 13.5V11.5" fill="#bdbdbd"/><path d="M0.5 3L3 0.5H12L9.5 3Z" fill="#8fcaf5"/><path d="M0.5 3H9.5V13.5H0.5Z" fill="#6cb0e6"/><path d="M9.5 3L12 0.5V11.5L9.5 13.5Z" fill="#4a94cf"/><path d="M15 14V2.5" stroke="#222" stroke-width="1"/><path d="M13.6 3.8L15 0.8L16.4 3.8Z" fill="#222"/></svg><span class="t" style="left:90.6px;top:877.8px;font-size:11px;line-height:15px;height:15px;color:#222;font-weight:normal;transform:scaleX(0.9191);">押し出し2075</span><div class="rowbg" style="left:58.3px;top:899.5px;width:106px"></div><svg class="a" style="left:60px;top:901px" width="18" height="16" viewBox="0 0 18 16"><path d="M0.5 13.5L3 11.5H12L9.5 13.5Z M0.5 13.5V15.5H9.5L12 13.5V11.5" fill="#bdbdbd"/><path d="M0.5 3L3 0.5H12L9.5 3Z" fill="#8fcaf5"/><path d="M0.5 3H9.5V13.5H0.5Z" fill="#6cb0e6"/><path d="M9.5 3L12 0.5V11.5L9.5 13.5Z" fill="#4a94cf"/><path d="M15 14V2.5" stroke="#222" stroke-width="1"/><path d="M13.6 3.8L15 0.8L16.4 3.8Z" fill="#222"/></svg><span class="t" style="left:90.6px;top:901.8px;font-size:11px;line-height:15px;height:15px;color:#222;font-weight:normal;transform:scaleX(0.9191);">押し出し2077</span><div class="rowbg" style="left:58.3px;top:923.5px;width:104.9px"></div><svg class="a" style="left:60px;top:925px" width="18" height="16" viewBox="0 0 18 16"><path d="M0.5 13.5L3 11.5H12L9.5 13.5Z M0.5 13.5V15.5H9.5L12 13.5V11.5" fill="#bdbdbd"/><path d="M0.5 3L3 0.5H12L9.5 3Z" fill="#8fcaf5"/><path d="M0.5 3H9.5V13.5H0.5Z" fill="#6cb0e6"/><path d="M9.5 3L12 0.5V11.5L9.5 13.5Z" fill="#4a94cf"/><path d="M15 14V2.5" stroke="#222" stroke-width="1"/><path d="M13.6 3.8L15 0.8L16.4 3.8Z" fill="#222"/></svg><span class="t" style="left:90.6px;top:925.8px;font-size:11px;line-height:15px;height:15px;color:#222;font-weight:normal;transform:scaleX(0.9029);">押し出し2151</span><div class="rowbg" style="left:58.3px;top:947.5px;width:106px"></div><svg class="a" style="left:60px;top:949px" width="18" height="16" viewBox="0 0 18 16"><path d="M0.5 13.5L3 11.5H12L9.5 13.5Z M0.5 13.5V15.5H9.5L12 13.5V11.5" fill="#bdbdbd"/><path d="M0.5 3L3 0.5H12L9.5 3Z" fill="#8fcaf5"/><path d="M0.5 3H9.5V13.5H0.5Z" fill="#6cb0e6"/><path d="M9.5 3L12 0.5V11.5L9.5 13.5Z" fill="#4a94cf"/><path d="M15 14V2.5" stroke="#222" stroke-width="1"/><path d="M13.6 3.8L15 0.8L16.4 3.8Z" fill="#222"/></svg><span class="t" style="left:90.6px;top:949.8px;font-size:11px;line-height:15px;height:15px;color:#222;font-weight:normal;transform:scaleX(0.9191);">押し出し2152</span><div class="rowbg" style="left:58.3px;top:971.5px;width:106px"></div><svg class="a" style="left:60px;top:973px" width="18" height="16" viewBox="0 0 18 16"><path d="M0.5 13.5L3 11.5H12L9.5 13.5Z M0.5 13.5V15.5H9.5L12 13.5V11.5" fill="#bdbdbd"/><path d="M0.5 3L3 0.5H12L9.5 3Z" fill="#8fcaf5"/><path d="M0.5 3H9.5V13.5H0.5Z" fill="#6cb0e6"/><path d="M9.5 3L12 0.5V11.5L9.5 13.5Z" fill="#4a94cf"/><path d="M15 14V2.5" stroke="#222" stroke-width="1"/><path d="M13.6 3.8L15 0.8L16.4 3.8Z" fill="#222"/></svg><span class="t" style="left:90.6px;top:973.8px;font-size:11px;line-height:15px;height:15px;color:#222;font-weight:normal;transform:scaleX(0.9191);">押し出し2414</span><div class="cmt"></div><span class="t" style="left:27.6px;top:1023.1px;font-size:10.5px;line-height:15px;height:15px;color:#333;font-weight:normal;transform:scaleX(0.7667);">コメント</span><svg class="a" style="left:282.5px;top:1026.5px" width="9" height="9" viewBox="0 0 9 9"><circle cx="4.5" cy="4.5" r="4.5" fill="#111"/><path d="M2 4.5H7M4.5 2V7" stroke="#fff" stroke-width="1.3"/></svg><div class="grip" style="left:299px;top:1025px"></div></div>
<div class="navbar"></div><svg class="a" style="left:843px;top:1023px" width="17" height="17" viewBox="0 0 17 17"><ellipse cx="8.5" cy="10" rx="7" ry="3" fill="none" stroke="#3a4a5c" stroke-width="1.3"/><path d="M8.5 1V16" stroke="#3a4a5c" stroke-width="1.6"/><path d="M8.5 0L11 3.5H6Z" fill="#3a4a5c"/><path d="M0.5 10L4.5 8V13Z" fill="#3a4a5c"/></svg><svg class="a" style="left:864.0px;top:1029.5px" width="6" height="4" viewBox="0 0 6 4"><path d="M0 0H6L3.0 4Z" fill="#333"/></svg><svg class="a" style="left:877px;top:1023px" width="17" height="17" viewBox="0 0 17 17"><path d="M1 5H16V16H1Z" fill="#e8e8e8" stroke="#3a4a5c" stroke-width="1.2"/><path d="M3 5L6 1.5H12L14 5" fill="none" stroke="#3a4a5c" stroke-width="1.1"/><rect x="4.5" y="9" width="8" height="4" fill="#b8c4d4" stroke="#3a4a5c" stroke-width="0.9"/></svg><svg class="a" style="left:902px;top:1022px" width="17" height="19" viewBox="0 0 17 19"><path d="M4 10V4.5Q4 3.3 5 3.3Q6 3.3 6 4.5V2.5Q6 1.2 7.2 1.2Q8.4 1.2 8.4 2.5V2Q8.4 0.8 9.6 0.8Q10.8 0.8 10.8 2V3.5Q10.8 2.5 11.9 2.5Q13 2.5 13 3.8V12Q13 17.5 8.5 17.5Q5.5 17.5 3.5 14L1 10Q0.5 8.5 1.8 8.3Q3 8.2 4 10Z" fill="#f4f4f4" stroke="#3a4a5c" stroke-width="1.1"/><path d="M6 4.5V9M8.4 2.5V9M10.8 3.5V9" stroke="#3a4a5c" stroke-width="0.9"/></svg><svg class="a" style="left:929px;top:1023px" width="19" height="18" viewBox="0 0 19 18"><circle cx="6.5" cy="8" r="5" fill="#e6ecf4" stroke="#3a4a5c" stroke-width="1.4"/><path d="M10 12L15 17" stroke="#3a4a5c" stroke-width="2.4"/><path d="M13.5 1V6M11 3.5H16M11.5 8H15.5" stroke="#3a4a5c" stroke-width="1.1"/></svg><svg class="a" style="left:954px;top:1022px" width="20" height="20" viewBox="0 0 20 20"><rect x="1" y="1" width="14" height="14" fill="none" stroke="#333" stroke-width="0.9" stroke-dasharray="2,1.5"/><circle cx="8" cy="8" r="6" fill="#e6ecf4" stroke="#3a4a5c" stroke-width="1.5"/><path d="M12.5 12.5L18 18" stroke="#3a4a5c" stroke-width="2.6"/></svg><svg class="a" style="left:976.0px;top:1029.5px" width="6" height="4" viewBox="0 0 6 4"><path d="M0 0H6L3.0 4Z" fill="#333"/></svg><svg class="a" style="left:987px;top:1023px" width="17" height="17" viewBox="0 0 17 17"><rect x="0.8" y="0.8" width="15.4" height="11.4" fill="#dfe6ee" stroke="#3a4a5c" stroke-width="1.4"/><rect x="3" y="3" width="11" height="7" fill="#8aa6d6"/><path d="M5 16H12M8.5 12.5V16" stroke="#3a4a5c" stroke-width="1.6"/></svg><svg class="a" style="left:1006.0px;top:1029.5px" width="6" height="4" viewBox="0 0 6 4"><path d="M0 0H6L3.0 4Z" fill="#333"/></svg><svg class="a" style="left:1019px;top:1023.5px" width="16" height="16" viewBox="0 0 16 16"><rect width="16" height="16" fill="#c9ced6"/><g stroke="#55606e" stroke-width="0.9"><path d="M0.5 0.5V15.5M0.5 0.5H15.5"/><path d="M3.5 0.5V15.5M0.5 3.5H15.5"/><path d="M6.5 0.5V15.5M0.5 6.5H15.5"/><path d="M9.5 0.5V15.5M0.5 9.5H15.5"/><path d="M12.5 0.5V15.5M0.5 12.5H15.5"/><path d="M15.5 0.5V15.5M0.5 15.5H15.5"/></g></svg><svg class="a" style="left:1037.0px;top:1029.5px" width="6" height="4" viewBox="0 0 6 4"><path d="M0 0H6L3.0 4Z" fill="#333"/></svg><svg class="a" style="left:1050px;top:1024.5px" width="15" height="13" viewBox="0 0 15 13"><g fill="#9db4e0" stroke="#2d4a86" stroke-width="1.1"><rect x="0.6" y="0.6" width="5.8" height="4.8"/><rect x="8.6" y="0.6" width="5.8" height="4.8"/><rect x="0.6" y="7.6" width="5.8" height="4.8"/><rect x="8.6" y="7.6" width="5.8" height="4.8"/></g></svg><svg class="a" style="left:1068.0px;top:1029.5px" width="6" height="4" viewBox="0 0 6 4"><path d="M0 0H6L3.0 4Z" fill="#333"/></svg>
<div class="taskbar"><div class="tb1"></div><div class="tb2"></div><div class="tb3"></div><div class="tbsep"></div><div class="tbm" style="left:333px;width:3px;background:#f5b400"></div><div class="tbm" style="left:337px;width:3px;background:#f5b400;top:5px;height:3px"></div><div class="tbm" style="left:353px;width:2px;background:#777"></div><div class="tbm" style="left:364px;width:2px;background:#777"></div><div class="tbm" style="left:1819px;width:4px;background:#eee"></div><div class="tbm" style="left:1825px;width:2px;background:#eee"></div><div class="tbm" style="left:1832px;width:4px;background:#eee"></div><div class="tbm" style="left:1838px;width:5px;background:#eee"></div></div><div class="topstrip"></div><div class="rstrip"></div><div class="rstrip2"></div><div class="rstrip3"></div></div></body></html>
